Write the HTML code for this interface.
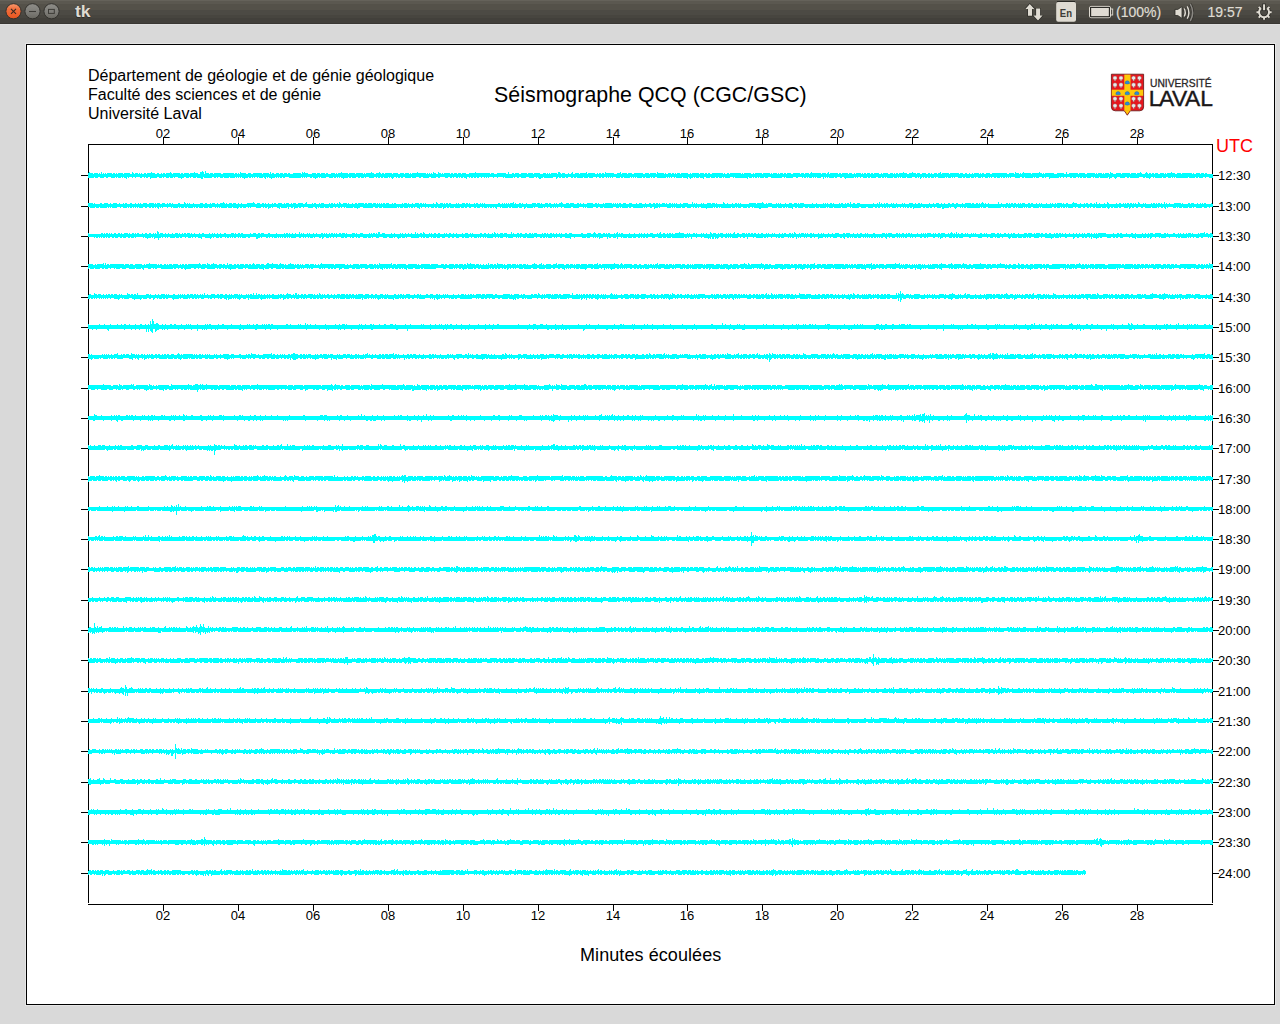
<!DOCTYPE html>
<html><head><meta charset="utf-8"><style>
html,body{margin:0;padding:0;width:1280px;height:1024px;overflow:hidden;background:#d9d9d9;font-family:"Liberation Sans",sans-serif;}
#panel{position:absolute;left:0;top:0;width:1280px;height:24px;background:linear-gradient(#65625a 0px,#65625a 1px,#5b5850 1px,#5b5850 4px,#545149 4px,#545149 10px,#4c4a44 10px,#4c4a44 15px,#47453f 15px,#47453f 18px,#42403b 18px,#42403b 23px,#393733 23px,#393733 24px);}
#hl{position:absolute;left:0;top:24px;width:1280px;height:1px;background:#dfdfdf;}
#canvas{position:absolute;left:26px;top:44px;width:1247px;height:959px;border:1px solid #000;background:#fff;}
.t{position:absolute;white-space:nowrap;color:#000;}
.xl{position:absolute;width:40px;text-align:center;font-size:13px;line-height:15px;color:#000;}
.yl{position:absolute;left:1218px;font-size:13px;line-height:15px;color:#000;}
svg{position:absolute;left:0;top:0;}
</style></head><body>
<div id="panel"></div><div id="hl"></div>
<svg width="1280" height="24" style="position:absolute;left:0;top:0">
<defs>
<linearGradient id="gc" x1="0" y1="0" x2="0" y2="1"><stop offset="0" stop-color="#f79a6e"/><stop offset="0.35" stop-color="#f0703f"/><stop offset="1" stop-color="#e9541d"/></linearGradient>
<linearGradient id="gg" x1="0" y1="0" x2="0" y2="1"><stop offset="0" stop-color="#8e8d88"/><stop offset="0.6" stop-color="#7c7b76"/><stop offset="1" stop-color="#68665f"/></linearGradient>
</defs>
<circle cx="13.5" cy="11.25" r="7.6" fill="url(#gc)" stroke="#2f2e2a" stroke-width="0.9"/>
<path d="M11 8.8L16 13.8M16 8.8L11 13.8" stroke="#3a2a22" stroke-width="1.1"/>
<circle cx="32.5" cy="11.25" r="7.6" fill="url(#gg)" stroke="#2f2e2a" stroke-width="0.9"/>
<path d="M29 11.5H36" stroke="#3c3b37" stroke-width="1.1"/>
<circle cx="51.5" cy="11.25" r="7.6" fill="url(#gg)" stroke="#2f2e2a" stroke-width="0.9"/>
<rect x="48.5" y="9.4" width="5.8" height="4" fill="none" stroke="#3c3b37" stroke-width="1"/>
<text x="74.6" y="17.8" font-family="Liberation Sans" font-weight="bold" font-size="16" fill="#1e1d1a" opacity="0.6" textLength="15.6" lengthAdjust="spacingAndGlyphs">tk</text><text x="75" y="17.2" font-family="Liberation Sans" font-weight="bold" font-size="16" fill="#dfdbd2" textLength="15.6" lengthAdjust="spacingAndGlyphs">tk</text>
<path d="M1029.8 3L1024.4 8.7H1027.3V16.4H1032.6V8.7H1035.5Z" fill="#262522" opacity="0.8"/>
<path d="M1038 21.3L1032.4 15.6H1035.4V8H1040.7V15.6H1043.6Z" fill="#262522" opacity="0.8"/>
<path d="M1029.8 4L1025.4 8.9H1028V15.8H1032V8.9H1034.4Z" fill="#dfdbd2"/>
<path d="M1038 20.4L1033.4 15.5H1036.1V8.5H1040.1V15.5H1042.6Z" fill="#dfdbd2"/>
<rect x="1056.2" y="2" width="19.8" height="19.8" rx="2" fill="#dfdbd2"/>
<path d="M1057 1.5H1075" stroke="#2a2925" stroke-width="1"/>
<text x="1059.8" y="16.6" font-family="Liberation Sans" font-weight="bold" font-size="11.8" fill="#3c3b37" textLength="12.2" lengthAdjust="spacingAndGlyphs">En</text>
<rect x="1089.5" y="6.4" width="21" height="11.3" rx="1.5" fill="none" stroke="#dfdbd2" stroke-width="1"/>
<rect x="1090.5" y="7.4" width="19" height="9.3" fill="none" stroke="#2a2925" stroke-width="1"/>
<rect x="1091.2" y="8" width="17.6" height="8.1" fill="#dfdbd2"/>
<rect x="1110.5" y="9" width="2.2" height="6" fill="none" stroke="#dfdbd2" stroke-width="0.9"/>
<text x="1116" y="17" font-family="Liberation Sans" font-size="14" fill="#dfdbd2" stroke="#dfdbd2" stroke-width="0.2">(100%)</text>
<path d="M1175 9.4H1177.8L1182 6.6V18.4L1177.8 15.5H1175Z" fill="#dfdbd2" stroke="#2a2925" stroke-width="0.8"/>
<path d="M1184.2 8.5Q1186.3 12.5 1184.2 16.5M1187.2 6.3Q1190.5 12.5 1187.2 18.7M1190.3 4Q1195 12.5 1190.3 21" fill="none" stroke="#262522" stroke-width="2.8" opacity="0.7"/>
<path d="M1184.2 8.5Q1186.3 12.5 1184.2 16.5" fill="none" stroke="#dfdbd2" stroke-width="1.5"/>
<path d="M1187.2 6.3Q1190.5 12.5 1187.2 18.7" fill="none" stroke="#dfdbd2" stroke-width="1.5"/>
<path d="M1190.3 4Q1195 12.5 1190.3 21" fill="none" stroke="#8a8883" stroke-width="1.5"/>
<text x="1207.5" y="17" font-family="Liberation Sans" font-size="14" fill="#dfdbd2" stroke="#dfdbd2" stroke-width="0.2">19:57</text>
<path d="M1267.14 8.26A5 5 0 1 1 1260.98 8.26" fill="none" stroke="#2a2925" stroke-width="3.6" opacity="0.85"/>
<path d="M1269.06 12.20L1271.66 12.20M1267.60 15.74L1269.43 17.57M1264.06 17.20L1264.06 19.80M1260.52 15.74L1258.69 17.57M1259.06 12.20L1256.46 12.20M1260.52 8.66L1258.69 6.83M1267.60 8.66L1269.43 6.83" fill="none" stroke="#2a2925" stroke-width="3.4" opacity="0.85"/>
<path d="M1264.06 3.5V10.9" stroke="#2a2925" stroke-width="3.6" opacity="0.85"/>
<path d="M1267.14 8.26A5 5 0 1 1 1260.98 8.26" fill="none" stroke="#dfdbd2" stroke-width="2"/>
<path d="M1269.06 12.20L1271.66 12.20M1267.60 15.74L1269.43 17.57M1264.06 17.20L1264.06 19.80M1260.52 15.74L1258.69 17.57M1259.06 12.20L1256.46 12.20M1260.52 8.66L1258.69 6.83M1267.60 8.66L1269.43 6.83" fill="none" stroke="#dfdbd2" stroke-width="1.9"/>
<path d="M1264.06 4.3V10.2" stroke="#dfdbd2" stroke-width="2"/>
</svg>

<div style="position:absolute;left:25px;top:43px;width:1249px;height:961px;border:1px solid #e6e6e6"></div><div id="canvas"></div>
<svg width="1280" height="1024" shape-rendering="crispEdges">
<path d="M88.5 144V903M1212.5 144V903M88 144.5H1213M88 904.5H1213M81 175.5H88M1213 175.5H1219M81 206.5H88M1213 206.5H1219M81 236.5H88M1213 236.5H1219M81 266.5H88M1213 266.5H1219M81 297.5H88M1213 297.5H1219M81 327.5H88M1213 327.5H1219M81 357.5H88M1213 357.5H1219M81 388.5H88M1213 388.5H1219M81 418.5H88M1213 418.5H1219M81 448.5H88M1213 448.5H1219M81 479.5H88M1213 479.5H1219M81 509.5H88M1213 509.5H1219M81 539.5H88M1213 539.5H1219M81 569.5H88M1213 569.5H1219M81 600.5H88M1213 600.5H1219M81 630.5H88M1213 630.5H1219M81 660.5H88M1213 660.5H1219M81 691.5H88M1213 691.5H1219M81 721.5H88M1213 721.5H1219M81 751.5H88M1213 751.5H1219M81 782.5H88M1213 782.5H1219M81 812.5H88M1213 812.5H1219M81 842.5H88M1213 842.5H1219M81 873.5H88M1213 873.5H1219M163.5 137V144M163.5 905V911M238.5 137V144M238.5 905V911M313.5 137V144M313.5 905V911M388.5 137V144M388.5 905V911M463.5 137V144M463.5 905V911M538.5 137V144M538.5 905V911M613.5 137V144M613.5 905V911M687.5 137V144M687.5 905V911M762.5 137V144M762.5 905V911M837.5 137V144M837.5 905V911M912.5 137V144M912.5 905V911M987.5 137V144M987.5 905V911M1062.5 137V144M1062.5 905V911M1137.5 137V144M1137.5 905V911" stroke="#000" stroke-width="1" fill="none"/>
<g fill="#00ffff"><path d="M88 173H89V172H90V173H93V174H94V173H98V174H99V173H100V174H101V172H102V174H103V173H104V174H105V173H106V174H107V173H112V174H113V173H115V174H116V173H117V174H118V173H123V174H124V173H130V174H132V172H133V173H134V174H135V173H138V174H139V173H140V174H141V173H142V174H144V173H146V174H147V173H151V172H152V173H155V174H157V173H159V174H161V173H162V174H163V173H165V174H166V173H170V172H171V173H172V174H173V173H180V174H181V173H183V174H184V173H189V174H190V173H194V172H195V173H198V174H200V172H202V171H203V172H204V174H205V171H206V173H209V174H210V173H213V174H214V173H221V174H223V173H234V174H235V173H237V174H238V173H239V174H240V172H241V173H246V174H248V173H251V174H253V173H262V174H263V173H269V174H270V172H271V174H272V173H274V174H276V173H279V174H280V173H283V174H284V173H287V174H288V173H290V174H293V173H301V174H302V172H303V173H304V172H305V173H308V174H312V173H316V174H317V173H320V174H321V173H325V174H326V173H328V174H331V173H335V174H336V173H337V174H338V173H341V172H342V173H348V174H349V173H355V174H356V173H363V174H364V173H365V174H366V173H371V172H372V173H374V174H376V173H379V172H380V173H381V174H382V173H384V174H385V173H392V174H393V173H398V174H400V173H404V174H405V173H409V174H410V173H411V174H412V173H417V172H418V173H426V174H427V173H428V174H429V173H430V174H431V173H432V174H433V172H434V173H436V174H438V172H439V173H441V174H442V173H443V174H444V173H450V174H451V173H453V174H454V173H457V174H458V173H461V174H462V173H466V174H469V173H475V172H476V173H490V174H491V173H494V174H497V173H506V174H508V172H509V174H512V173H514V174H515V173H519V174H521V173H527V174H528V173H533V174H534V173H540V174H543V173H546V174H547V173H548V174H549V173H550V174H551V173H557V174H558V172H560V173H561V174H562V173H565V174H568V173H569V174H571V173H572V172H573V174H575V173H579V174H580V173H586V172H587V174H588V173H595V174H597V173H598V174H599V173H601V174H602V173H604V174H605V172H606V173H614V174H617V173H620V172H621V174H622V173H627V174H628V173H632V174H634V173H643V174H645V173H649V174H650V173H656V174H657V172H658V173H664V174H665V173H666V174H668V173H671V174H672V173H674V174H675V173H676V174H677V173H680V174H681V173H688V174H690V173H691V174H692V173H699V174H700V173H704V174H705V173H707V174H708V173H710V174H712V173H723V174H724V173H725V174H727V173H729V174H730V173H741V174H742V173H743V174H744V173H751V174H753V173H754V174H755V173H762V174H763V173H770V174H771V173H772V174H773V173H777V174H778V173H779V174H780V173H783V174H784V173H786V174H787V173H791V174H793V173H800V174H801V173H804V174H805V173H809V174H810V173H811V172H812V173H821V174H822V173H826V174H827V173H828V172H829V174H830V173H838V174H839V173H841V174H842V173H848V174H849V173H852V174H854V173H855V174H856V173H861V174H862V173H863V174H864V173H866V174H867V173H870V174H871V173H873V174H874V173H879V174H881V173H882V174H883V173H888V174H890V173H893V174H894V173H895V174H896V173H898V174H899V173H903V172H904V173H907V174H909V173H912V172H913V173H916V174H917V173H920V174H922V173H926V174H928V173H930V174H931V173H932V174H934V173H937V174H938V173H940V172H941V174H942V173H949V174H950V173H959V174H960V173H963V174H965V173H967V174H969V173H970V174H972V173H973V174H974V173H979V174H980V173H981V174H982V173H984V174H986V173H990V174H992V173H1007V174H1009V173H1014V174H1015V172H1016V173H1019V174H1020V173H1021V174H1022V173H1023V172H1024V173H1031V174H1032V173H1039V172H1040V173H1042V174H1043V173H1044V174H1045V173H1054V174H1057V173H1064V174H1066V172H1067V174H1069V173H1078V174H1079V173H1085V174H1087V173H1095V174H1096V173H1097V174H1098V173H1102V174H1103V173H1104V174H1105V173H1109V174H1110V172H1111V173H1113V174H1116V173H1121V174H1122V173H1130V174H1131V173H1136V174H1137V173H1140V172H1141V173H1142V174H1145V173H1146V172H1147V173H1148V174H1149V173H1151V174H1152V173H1154V174H1155V173H1158V174H1160V173H1164V174H1165V173H1166V174H1167V173H1171V172H1172V173H1175V174H1177V173H1181V174H1182V173H1192V174H1193V173H1194V174H1196V173H1200V174H1201V173H1204V174H1205V173H1207V174H1213V178H1209V177H1206V178H1205V177H1203V178H1199V177H1198V178H1196V177H1195V178H1189V177H1188V178H1176V177H1175V178H1174V177H1173V178H1172V177H1171V178H1168V177H1166V178H1163V177H1162V178H1155V177H1154V178H1153V177H1151V178H1150V179H1149V178H1146V177H1145V178H1143V177H1139V178H1130V177H1129V178H1127V177H1125V178H1120V177H1117V178H1116V179H1115V178H1114V177H1112V178H1110V179H1109V177H1108V178H1100V177H1099V178H1095V177H1094V178H1093V177H1091V178H1087V177H1086V178H1083V177H1082V178H1080V177H1079V178H1078V177H1076V178H1073V177H1072V178H1070V177H1067V178H1066V177H1064V178H1063V177H1061V178H1060V177H1059V178H1050V179H1049V177H1046V178H1045V177H1044V178H1042V177H1039V178H1036V177H1035V178H1034V177H1033V178H1025V177H1024V178H1022V177H1020V178H1015V177H1011V178H1010V177H1009V178H1008V177H1007V178H1006V177H1005V178H1003V177H1002V178H1001V177H1000V178H997V177H996V178H994V177H992V178H991V177H990V178H989V177H988V178H985V177H983V178H982V177H981V178H978V177H976V178H975V177H974V178H971V177H970V178H966V177H965V178H963V177H962V178H958V177H955V178H954V177H953V178H952V177H951V178H948V177H947V178H946V177H945V178H938V177H936V178H935V177H934V178H931V177H930V178H928V177H927V178H925V177H924V178H923V177H922V178H921V179H920V177H919V178H918V177H917V178H915V177H912V178H907V177H906V178H902V177H901V178H900V177H899V178H898V177H897V178H894V177H893V178H887V177H886V178H885V177H884V178H882V177H881V178H878V177H876V178H871V177H870V178H868V177H867V178H863V177H861V178H860V177H858V178H857V177H856V178H855V177H854V178H846V179H845V178H844V177H842V178H840V177H837V178H835V177H834V178H829V177H828V178H827V177H826V178H825V177H824V179H823V177H821V178H817V177H816V178H815V177H814V178H813V177H812V178H809V177H808V178H807V177H806V178H804V177H803V178H802V177H798V178H796V177H793V178H786V177H785V178H784V177H782V178H771V177H768V178H765V177H764V178H760V177H759V178H758V177H757V178H755V177H754V178H753V177H752V178H749V177H748V179H747V178H735V177H734V178H733V177H730V178H725V177H724V178H723V177H722V178H719V177H718V178H716V177H715V178H711V177H710V178H706V177H704V179H703V178H700V177H699V178H696V177H695V178H694V177H693V178H691V179H690V178H689V177H688V179H687V178H683V177H682V178H676V177H675V178H674V177H672V178H671V177H670V178H669V177H668V178H667V177H666V178H657V177H655V178H653V177H652V178H651V177H650V178H646V177H645V178H643V177H642V178H637V177H636V178H635V177H634V178H633V177H632V178H631V177H630V178H624V177H623V178H621V177H620V178H616V177H613V178H612V177H611V178H610V177H609V178H608V177H607V178H606V177H604V178H602V177H601V178H599V177H597V178H596V177H593V178H589V177H588V178H584V177H583V178H577V177H576V178H574V177H573V178H571V177H568V178H566V177H565V178H562V177H561V178H559V177H558V178H557V179H556V177H553V178H544V177H543V178H541V179H539V178H538V177H537V178H536V177H534V178H529V177H526V178H521V177H519V178H517V177H515V178H514V177H513V178H505V177H504V178H503V177H498V178H497V177H494V178H493V177H489V178H488V177H487V178H486V177H485V178H484V177H482V178H481V177H479V178H477V177H476V178H474V177H473V178H471V177H470V178H469V177H467V179H466V178H464V177H463V178H461V177H460V178H459V177H458V178H456V177H454V178H453V177H452V178H450V177H448V178H445V177H440V178H438V177H436V178H431V177H429V178H423V177H421V178H419V177H416V178H412V177H411V178H405V177H403V178H401V177H400V178H398V177H397V178H396V177H394V178H393V179H392V178H391V177H390V178H389V177H388V178H384V177H383V178H381V177H380V178H378V177H377V178H376V177H374V178H369V177H366V178H365V177H364V178H361V177H360V178H358V177H356V178H352V177H351V178H349V177H348V178H344V179H343V178H341V177H340V178H339V177H338V178H337V177H336V178H334V177H333V178H329V177H326V178H321V177H320V178H319V177H318V178H316V179H315V178H313V177H312V178H310V177H307V178H306V177H305V178H304V177H303V178H302V177H301V178H289V177H285V178H283V177H282V178H280V177H279V178H278V177H277V178H276V177H275V178H272V179H271V178H269V177H268V178H267V177H266V179H265V178H264V177H263V178H259V177H258V178H257V177H255V178H254V177H253V178H252V177H251V178H249V177H248V178H245V179H244V178H242V177H241V178H240V177H239V178H238V177H237V178H236V177H235V178H230V177H229V178H224V177H223V178H220V177H218V178H217V177H216V178H214V177H212V178H204V177H203V179H201V178H197V177H196V178H193V177H191V178H190V177H189V178H186V177H184V178H182V179H181V178H178V177H175V178H174V177H173V178H170V177H169V178H166V177H164V178H163V177H162V178H159V177H157V178H151V179H150V177H148V178H146V177H145V178H144V177H142V178H140V177H136V178H135V177H133V178H132V177H129V178H128V177H127V179H126V178H124V177H123V178H122V177H121V178H118V177H117V178H116V177H115V178H111V177H108V178H106V177H104V178H100V177H98V178H95V177H94V178H88Z"/><path d="M88 203H93V204H94V203H95V204H100V203H102V204H104V203H108V204H110V203H111V204H113V203H117V204H119V203H120V204H123V203H124V204H125V203H127V204H130V203H132V204H135V203H136V204H138V203H139V204H140V203H141V204H143V203H147V204H149V203H154V204H155V203H156V204H157V203H160V204H162V203H165V204H167V203H168V204H169V203H171V204H172V203H173V204H178V203H180V204H184V202H185V203H186V204H187V203H188V204H189V203H190V204H193V203H194V204H200V203H203V204H205V203H207V204H210V203H211V204H212V203H215V204H217V203H218V204H220V203H223V202H224V203H225V204H226V203H227V204H229V203H232V204H233V203H236V204H238V203H239V204H241V203H242V204H247V203H253V202H254V203H255V204H257V203H260V204H262V203H264V204H265V203H266V204H268V203H269V204H272V203H273V204H274V203H276V204H278V203H282V204H284V203H285V204H286V203H289V204H291V203H292V204H293V203H296V204H298V203H303V204H305V203H306V202H307V204H312V203H313V204H314V203H316V204H319V203H320V204H321V203H324V204H329V203H330V204H331V203H333V204H334V203H335V204H337V203H338V204H339V202H340V203H341V204H343V203H347V204H348V203H349V204H352V203H353V204H355V203H357V204H358V203H364V204H365V203H367V204H368V203H372V204H373V203H376V204H377V203H378V204H379V203H380V204H381V203H382V204H383V203H385V204H386V203H389V204H392V203H393V204H394V203H396V204H402V203H403V204H404V203H407V204H408V203H409V204H412V203H413V204H415V203H419V204H420V203H422V204H423V203H424V204H425V203H426V204H433V203H434V204H436V202H437V203H438V204H440V203H443V204H444V203H445V204H446V203H448V204H449V203H451V204H456V203H457V204H458V203H459V204H462V203H465V204H466V203H468V204H469V203H470V204H474V203H475V204H476V203H478V204H480V203H481V204H482V203H483V204H484V203H485V204H498V203H500V204H502V203H503V204H504V203H505V204H506V203H507V204H508V203H509V204H510V203H513V202H514V204H515V203H516V204H519V203H521V204H522V203H523V204H526V203H527V204H532V203H536V204H537V203H540V204H541V203H542V204H545V203H548V204H549V203H551V204H554V203H555V204H556V203H557V204H559V203H561V202H562V203H563V204H566V203H569V204H570V203H574V204H577V203H579V204H580V203H581V204H583V203H584V204H587V203H593V204H595V203H597V204H598V203H599V204H603V203H604V204H605V203H612V204H613V203H614V204H615V203H616V204H617V203H618V204H619V203H621V204H623V203H626V204H629V203H632V204H636V203H637V204H639V203H642V204H645V203H646V204H649V203H651V204H653V203H655V204H656V203H658V204H659V203H660V204H662V203H665V204H666V203H667V204H669V203H671V204H672V203H673V204H674V203H675V204H676V203H677V204H680V203H681V204H683V203H688V204H692V202H693V204H694V203H695V204H696V203H697V204H701V203H702V204H703V203H704V204H707V203H711V204H712V203H715V204H716V203H717V204H723V202H724V203H725V204H727V203H728V204H732V203H733V204H735V203H737V204H738V203H739V204H740V203H741V204H749V203H756V204H757V203H762V202H763V203H764V204H766V203H767V204H768V203H772V204H776V203H777V204H778V203H779V204H780V203H781V204H785V203H786V204H789V203H792V204H794V203H797V204H798V203H799V204H800V203H804V204H812V203H813V204H816V203H817V204H823V203H824V204H825V203H826V204H827V203H828V204H830V203H832V204H833V203H834V204H839V203H840V204H841V203H843V204H845V203H846V204H847V203H849V204H850V202H851V204H853V203H855V204H857V203H860V204H873V203H874V204H877V203H878V204H879V202H880V204H881V203H882V204H884V203H885V204H886V203H888V204H891V203H892V204H893V203H894V204H896V203H897V204H902V203H903V204H904V203H905V204H909V203H913V204H915V203H916V204H918V203H920V204H921V203H922V204H929V203H930V204H933V203H934V204H936V203H939V204H941V203H942V204H944V203H945V204H948V203H950V204H952V203H954V204H956V203H958V204H962V203H963V204H965V203H971V204H972V203H974V204H976V203H978V204H979V203H980V204H981V203H982V202H983V203H984V204H985V203H986V204H988V203H989V204H998V202H999V204H1001V203H1002V204H1006V203H1008V204H1009V203H1010V204H1011V203H1013V204H1014V203H1016V204H1018V203H1019V204H1020V203H1021V204H1022V203H1025V204H1028V203H1030V204H1031V203H1033V204H1036V203H1037V204H1039V203H1040V204H1041V203H1042V204H1046V203H1047V204H1050V203H1051V204H1052V203H1053V204H1055V203H1056V204H1057V203H1062V204H1063V203H1064V204H1066V203H1068V204H1072V203H1073V202H1074V203H1077V204H1080V203H1081V204H1084V203H1085V204H1086V203H1088V204H1090V203H1092V204H1094V203H1095V204H1096V202H1097V204H1099V203H1100V204H1104V203H1105V204H1107V202H1108V203H1109V204H1116V203H1117V204H1119V203H1121V204H1123V203H1124V204H1125V203H1126V204H1127V203H1129V204H1130V203H1132V204H1133V203H1134V204H1135V203H1136V204H1138V202H1139V203H1140V204H1143V203H1144V204H1145V203H1146V204H1151V203H1152V204H1153V203H1155V204H1156V203H1157V204H1158V203H1160V204H1161V203H1162V204H1164V202H1165V204H1166V203H1167V204H1169V203H1170V204H1174V203H1181V204H1182V203H1183V204H1188V203H1190V204H1191V203H1194V204H1197V203H1198V204H1200V203H1201V204H1202V203H1203V204H1204V203H1206V204H1211V203H1212V204H1213V207H1210V208H1209V207H1207V208H1204V207H1202V208H1196V207H1194V208H1193V207H1192V208H1189V207H1188V208H1183V207H1182V208H1179V207H1178V208H1177V207H1176V208H1173V207H1168V208H1167V207H1166V209H1165V208H1164V207H1163V208H1161V207H1159V208H1158V207H1157V208H1152V207H1151V208H1145V207H1143V208H1141V207H1138V208H1136V207H1134V208H1132V207H1131V208H1130V209H1129V207H1128V208H1124V207H1121V208H1119V207H1118V208H1114V207H1113V208H1111V207H1110V208H1109V209H1108V208H1107V207H1106V208H1102V207H1101V208H1096V207H1095V208H1093V207H1091V208H1090V207H1089V208H1087V207H1085V208H1083V207H1081V208H1078V207H1076V208H1075V207H1073V208H1068V207H1067V208H1066V207H1065V208H1063V207H1062V208H1061V207H1060V208H1057V207H1056V208H1054V207H1052V208H1042V207H1041V208H1040V207H1039V208H1033V207H1031V208H1028V207H1027V208H1026V207H1025V208H1024V207H1023V208H1018V207H1017V208H1016V207H1015V208H1013V207H1011V208H1008V207H1007V208H1005V207H1004V208H1003V207H1001V208H988V207H986V208H983V207H982V208H981V207H980V208H967V207H966V208H964V207H963V208H962V207H961V208H960V207H957V208H956V209H955V208H954V207H951V208H950V207H949V208H944V209H942V207H941V208H937V207H935V208H934V207H932V208H930V207H929V208H926V207H925V208H923V207H921V208H914V209H913V207H912V208H910V207H909V208H907V207H906V208H905V207H904V208H903V207H901V208H900V207H898V208H897V207H896V208H892V207H890V208H889V207H888V208H887V207H886V208H884V207H883V208H882V207H880V208H878V207H877V208H875V207H873V208H868V207H866V208H861V207H859V208H852V207H851V208H850V207H847V208H842V207H841V208H834V207H833V208H829V207H828V208H827V207H826V208H820V207H819V208H816V207H815V208H809V207H808V208H805V207H803V208H798V207H797V208H795V207H793V209H792V208H788V207H787V208H786V207H785V208H783V207H782V208H778V207H777V208H772V207H768V208H761V209H759V208H754V207H753V208H752V207H750V208H748V207H747V208H743V207H741V208H738V207H737V208H736V207H735V208H732V207H731V208H721V207H720V208H719V207H718V208H716V207H715V208H714V207H713V208H707V209H706V208H701V207H699V208H698V207H697V208H695V207H694V208H693V207H691V208H687V207H685V208H682V207H681V208H676V207H675V208H674V207H673V208H672V207H671V208H667V207H660V208H659V207H658V208H655V209H654V207H652V208H650V207H647V208H646V207H645V208H644V207H643V208H633V207H631V208H629V207H628V208H622V207H621V208H620V207H619V208H616V207H613V208H604V207H603V208H600V207H598V208H596V207H593V208H587V207H586V208H585V207H584V208H583V207H579V208H573V207H571V208H564V207H562V208H561V207H558V208H557V207H556V208H555V207H554V208H553V207H552V208H550V207H548V208H547V207H545V208H544V207H543V208H538V207H535V208H534V207H533V208H527V207H526V208H525V209H524V207H522V208H519V207H518V208H512V207H511V208H509V207H508V208H502V207H501V208H500V207H497V209H496V208H495V207H494V208H493V207H492V208H490V207H489V208H488V207H487V208H484V207H483V208H482V207H480V208H477V207H476V208H474V207H471V208H469V207H467V208H465V207H464V208H461V207H460V208H455V207H454V208H450V207H449V208H447V207H446V208H444V209H443V207H442V208H438V207H437V208H435V207H434V208H431V207H429V208H428V207H426V208H425V207H422V208H421V207H420V209H419V208H417V207H415V208H414V207H413V208H411V207H410V208H409V207H408V208H404V207H403V208H400V207H399V208H398V207H397V208H383V207H382V208H379V207H378V208H375V207H373V208H363V207H360V208H358V209H357V208H354V207H353V208H346V207H345V208H344V207H342V208H341V207H340V208H338V207H336V208H335V207H333V208H330V207H329V208H325V207H324V208H320V207H319V208H318V207H317V209H316V208H315V207H313V208H308V207H304V208H303V207H301V208H299V207H298V208H295V209H294V207H293V208H291V207H289V209H288V207H287V208H281V207H280V209H279V208H277V207H273V208H272V207H271V208H269V209H268V207H267V208H265V207H264V208H263V207H261V208H256V207H251V208H250V207H249V208H248V207H246V208H243V207H242V208H240V207H239V208H238V209H237V208H233V207H232V208H228V207H227V208H221V207H220V208H219V207H218V208H217V207H216V208H215V207H212V208H209V207H208V208H204V207H203V208H199V207H198V208H196V207H195V208H194V207H193V208H188V207H187V208H185V207H184V208H181V207H180V208H179V207H178V208H173V207H172V208H171V207H168V208H167V207H163V208H162V207H161V208H160V207H159V209H158V208H157V207H156V208H155V207H154V208H152V207H151V208H149V207H147V208H145V207H143V208H139V207H138V208H137V207H136V208H135V207H134V208H133V207H132V208H130V207H129V208H128V207H127V208H123V207H121V208H120V207H117V208H112V207H111V208H110V207H109V208H108V207H107V208H100V207H99V208H96V207H95V208H90V207H88Z"/><path d="M88 233H89V234H101V233H103V234H104V233H105V234H106V233H108V234H109V233H110V234H111V233H112V234H114V233H116V234H118V233H120V234H121V233H122V234H124V233H128V234H129V233H130V234H132V233H134V234H135V233H136V234H137V233H139V234H142V233H143V234H145V233H147V234H149V233H151V234H153V233H154V234H155V233H156V234H157V231H158V232H159V234H160V233H163V234H165V233H166V234H168V233H169V234H172V233H173V234H175V233H178V234H179V233H180V234H182V233H183V234H184V233H186V234H187V233H190V234H191V233H192V234H194V233H195V234H199V233H200V234H202V233H204V234H209V233H210V234H212V233H213V234H214V233H215V234H217V233H218V234H220V233H221V234H224V233H226V234H231V233H234V234H235V233H236V234H238V233H240V234H241V233H243V234H250V233H251V234H253V233H256V234H258V233H260V234H261V233H264V234H268V233H270V234H276V233H277V234H284V233H285V234H286V233H288V234H289V233H290V234H292V233H293V234H295V233H296V234H299V232H300V234H301V233H302V234H303V233H304V234H307V233H308V234H309V233H310V234H313V233H314V234H316V233H317V234H321V233H323V234H324V233H325V234H326V233H327V234H329V233H330V234H331V233H333V234H334V233H335V234H336V233H337V234H339V233H341V234H342V233H345V234H346V233H347V234H352V233H355V234H356V233H357V234H360V233H363V234H369V233H370V234H371V233H372V234H373V233H375V234H376V233H377V234H378V232H380V234H382V233H385V234H391V233H392V234H394V233H395V234H400V233H401V234H402V233H403V234H405V233H406V234H408V233H409V234H411V233H412V234H415V232H416V234H417V233H418V234H420V233H422V234H423V232H424V233H425V234H429V233H430V234H431V233H432V234H434V233H436V234H438V233H440V234H444V233H445V234H446V233H447V234H449V233H451V234H453V233H454V234H456V233H457V234H462V233H463V234H465V233H468V234H470V233H471V234H472V233H473V234H480V233H482V234H484V233H486V234H488V233H489V234H492V233H493V234H494V232H495V233H496V234H497V233H498V234H500V233H503V234H504V233H507V234H511V232H512V234H513V233H514V234H517V233H519V234H520V233H522V234H525V233H527V234H529V233H531V234H532V233H533V234H534V233H537V234H542V233H543V234H544V233H546V234H547V233H548V234H550V233H552V234H553V233H554V234H556V233H557V234H559V233H560V234H561V233H562V234H565V233H567V234H569V233H572V234H581V233H583V234H587V233H591V234H593V233H594V232H595V233H596V234H598V233H601V234H603V233H605V234H606V233H607V234H608V233H610V234H614V233H615V234H616V233H617V232H618V234H619V233H620V234H621V233H623V234H629V233H630V234H634V233H635V234H639V233H640V234H641V233H642V234H644V233H645V234H647V233H648V234H650V233H653V234H657V233H658V234H659V233H660V232H661V234H663V233H665V234H667V233H668V234H669V233H671V234H672V233H673V234H675V233H679V232H680V233H684V234H687V233H688V234H689V233H690V234H693V233H695V234H696V233H697V234H701V233H702V234H703V233H704V234H706V233H707V234H710V232H711V233H712V234H713V233H716V234H718V233H719V234H720V233H723V234H726V233H727V234H728V233H729V234H730V233H731V234H733V233H734V232H735V234H737V233H739V234H742V233H745V234H746V233H747V234H748V233H750V234H751V233H753V234H754V233H756V234H758V233H759V234H761V233H763V234H766V233H767V234H768V233H769V234H772V233H773V234H774V233H775V234H779V233H780V234H782V233H783V234H784V233H786V234H789V233H791V234H792V233H793V234H794V232H795V233H796V234H799V233H800V234H801V233H804V234H805V233H806V234H807V233H808V234H810V233H812V234H813V233H814V234H818V233H819V234H821V233H822V234H823V233H824V234H828V233H829V234H832V233H833V234H835V233H839V234H843V233H845V234H846V233H850V234H853V233H854V234H857V233H858V234H860V233H862V234H865V233H866V234H867V233H868V234H873V233H875V234H882V233H885V234H886V233H887V234H888V233H892V234H896V233H898V234H899V233H900V234H902V233H904V234H906V233H907V234H908V233H910V234H911V233H912V234H917V233H918V234H921V233H922V234H923V233H924V234H925V233H926V234H927V233H931V234H933V233H934V234H935V233H936V234H938V233H940V234H941V233H945V234H948V233H949V234H950V233H951V232H952V233H953V234H954V233H955V234H956V232H957V234H958V233H959V234H961V233H963V234H965V233H966V234H967V233H968V234H971V233H972V234H973V233H974V234H975V233H976V234H980V233H982V234H984V233H985V234H986V233H987V234H991V233H995V234H997V233H999V234H1000V233H1001V234H1004V233H1006V234H1008V233H1009V234H1011V233H1012V234H1013V233H1015V234H1018V233H1019V234H1024V233H1027V234H1028V233H1032V234H1034V233H1035V234H1036V233H1040V234H1041V233H1043V234H1045V233H1047V234H1049V233H1051V234H1054V233H1055V234H1056V233H1058V234H1059V233H1061V234H1062V233H1063V234H1065V233H1066V234H1069V233H1070V234H1073V233H1074V234H1076V233H1077V234H1079V233H1080V234H1082V233H1083V234H1084V233H1085V234H1087V233H1090V234H1091V233H1092V234H1094V233H1095V234H1096V233H1097V234H1098V233H1106V234H1113V233H1114V234H1117V233H1119V234H1120V233H1122V234H1126V233H1127V234H1131V233H1133V234H1135V233H1136V234H1142V233H1143V234H1145V233H1146V234H1148V233H1149V234H1150V233H1153V234H1155V233H1161V234H1164V233H1166V234H1167V233H1168V234H1173V233H1175V234H1178V233H1179V234H1180V233H1181V234H1183V233H1184V234H1186V233H1187V234H1188V233H1191V234H1192V233H1193V234H1198V233H1199V234H1200V233H1204V232H1205V234H1206V233H1208V234H1210V233H1212V234H1213V238H1212V237H1211V238H1210V237H1209V238H1208V237H1203V238H1201V237H1199V238H1196V237H1194V238H1193V237H1191V238H1190V237H1189V238H1188V237H1187V238H1181V237H1180V238H1178V237H1177V238H1176V237H1170V238H1169V237H1166V238H1161V237H1160V238H1159V237H1156V238H1155V237H1152V238H1151V239H1150V237H1149V238H1147V237H1146V238H1143V237H1142V238H1137V237H1136V239H1135V238H1132V237H1130V238H1129V237H1123V238H1120V237H1118V238H1116V237H1115V238H1113V237H1111V238H1107V237H1102V238H1100V237H1099V238H1097V239H1096V238H1093V237H1092V239H1091V237H1090V238H1089V237H1087V238H1085V237H1084V238H1082V237H1079V238H1077V237H1075V238H1074V239H1073V237H1067V238H1065V237H1061V238H1060V237H1059V238H1055V237H1054V238H1052V239H1051V238H1045V237H1042V238H1041V237H1039V238H1034V237H1031V238H1029V237H1028V238H1027V237H1026V238H1023V237H1022V238H1018V237H1017V238H1012V237H1011V238H1010V239H1009V238H1008V237H1003V238H1002V237H1000V238H997V237H996V238H995V237H993V238H990V237H988V238H987V237H982V238H978V237H971V238H969V237H963V238H959V237H958V238H956V237H955V238H953V237H952V238H949V237H946V238H945V237H943V238H941V239H940V237H939V238H938V237H935V238H933V237H928V238H927V237H926V238H924V237H922V238H920V237H916V238H915V237H913V238H912V237H911V238H910V237H907V238H905V237H904V238H903V237H902V238H901V237H900V238H899V237H898V238H897V237H895V238H892V237H890V238H889V237H887V239H886V238H885V237H883V238H881V237H880V238H879V237H878V238H877V237H876V238H874V237H873V238H871V237H870V238H869V237H868V238H867V237H866V238H865V237H864V238H863V237H861V238H858V237H857V238H854V237H853V238H852V237H851V238H850V237H849V238H847V237H845V239H844V238H843V237H842V238H840V237H837V238H833V237H831V238H830V237H828V238H827V237H826V238H825V237H823V238H819V239H818V237H815V238H814V237H812V238H810V237H807V238H806V237H805V238H804V237H801V238H800V237H799V238H798V237H797V239H796V237H794V238H792V237H791V238H790V237H789V238H788V237H784V238H781V237H780V238H778V237H777V238H776V237H772V238H771V237H768V238H767V237H766V238H764V237H763V238H756V237H754V238H753V237H748V239H747V237H745V238H743V237H741V238H740V237H738V238H732V237H731V238H730V237H729V238H728V237H727V238H725V237H723V238H721V237H719V238H718V239H717V238H716V239H715V237H714V239H712V237H711V239H710V238H709V239H708V238H704V237H702V238H701V237H697V238H696V237H692V239H691V237H689V238H688V237H687V238H685V237H684V238H672V237H671V238H667V237H666V238H663V237H662V238H658V237H655V238H652V237H648V238H646V237H645V238H643V237H642V238H641V237H640V238H638V237H636V238H633V237H632V238H628V237H627V238H623V237H622V238H621V237H618V239H617V237H616V238H613V237H611V238H609V237H608V239H607V237H603V238H600V239H599V237H598V238H597V237H596V238H595V237H594V238H593V237H590V238H587V237H586V238H582V237H575V238H574V237H571V239H570V238H565V237H562V238H560V237H557V238H556V237H555V238H554V237H552V238H548V237H547V238H546V237H545V238H543V237H542V238H540V237H537V238H536V237H534V238H527V237H526V238H523V237H521V238H520V237H519V238H518V237H517V238H516V237H513V238H508V237H507V238H506V237H503V238H500V237H499V238H498V237H496V238H495V237H493V238H487V237H486V238H485V237H484V238H483V237H481V238H480V237H479V238H478V237H477V238H474V237H472V238H471V237H469V238H465V237H464V238H462V237H459V238H456V237H454V238H452V237H450V238H448V237H445V238H442V237H440V238H437V237H436V238H433V237H432V238H431V237H429V238H426V237H425V238H423V237H422V238H421V237H419V238H411V237H407V238H406V237H405V238H402V237H401V238H399V239H398V238H397V237H395V238H394V237H393V238H389V237H387V238H383V237H379V238H376V237H373V238H372V237H371V238H368V237H367V238H363V237H360V238H358V237H357V238H356V237H354V238H352V237H351V238H350V237H347V238H345V237H344V238H341V237H337V238H336V237H334V238H333V237H331V238H330V237H329V238H326V237H324V238H323V239H322V237H321V238H319V237H315V238H314V237H313V238H310V237H309V238H308V237H306V238H305V237H304V238H303V237H301V238H299V237H296V238H291V237H290V238H289V237H288V238H287V237H286V238H284V237H283V238H282V237H281V238H280V237H279V238H278V237H277V238H274V237H273V238H272V237H270V238H269V237H268V238H266V237H262V238H261V237H260V238H258V239H256V237H250V238H248V237H246V238H242V237H241V238H240V237H239V238H238V237H236V238H234V237H233V238H232V237H231V238H230V237H229V238H227V237H226V238H225V237H222V238H220V237H219V238H216V237H214V238H213V237H212V238H211V239H210V238H205V237H202V239H201V238H198V237H196V238H195V237H193V238H192V237H191V238H188V237H186V238H185V237H182V238H180V237H179V238H176V237H175V238H170V237H168V238H167V237H166V238H165V237H163V238H162V237H161V238H159V240H158V238H155V239H154V237H153V238H152V237H151V238H148V239H147V238H145V237H144V238H143V237H136V238H135V237H134V238H131V237H130V238H128V237H126V238H123V237H122V238H120V237H118V238H115V237H114V238H112V237H110V238H108V237H107V238H106V237H105V238H103V237H102V238H101V237H100V238H99V237H98V238H96V237H95V238H94V237H88Z"/><path d="M88 264H93V265H95V264H96V265H97V264H103V263H104V265H105V263H106V265H107V264H109V265H110V264H124V265H125V264H129V265H130V264H133V265H135V264H142V265H144V264H145V265H146V264H149V263H150V264H157V265H158V264H159V265H160V264H162V265H164V264H166V265H167V264H168V265H169V264H172V265H173V264H178V265H180V264H181V265H182V264H184V265H185V264H187V265H188V264H199V263H200V264H201V265H202V264H206V265H207V263H208V264H210V265H211V264H213V263H214V264H217V265H219V264H222V265H223V264H225V265H227V263H228V265H229V264H232V265H234V264H236V265H237V264H239V265H240V264H244V265H245V264H248V265H249V264H251V265H252V264H253V263H254V264H255V265H256V264H260V265H261V264H264V265H266V264H267V263H269V264H272V263H273V264H278V265H279V264H280V263H281V264H284V265H285V264H286V265H288V264H290V263H291V264H294V265H295V264H296V265H297V264H299V265H300V264H301V265H302V264H303V265H305V264H309V265H310V264H314V265H315V264H316V265H318V264H319V265H320V264H321V263H322V264H334V265H335V264H345V265H347V264H348V265H350V264H351V265H353V264H359V265H360V264H367V265H369V264H373V265H374V264H376V265H377V264H378V265H379V263H380V264H391V263H392V265H393V264H396V265H397V264H406V265H408V264H417V265H418V264H419V265H421V264H430V265H431V264H438V265H441V264H444V265H445V264H447V265H449V264H454V265H455V264H458V265H459V264H463V265H464V264H466V265H467V263H468V264H470V263H471V264H475V265H476V264H479V265H480V264H481V265H483V264H484V265H486V264H487V265H488V263H489V265H490V264H493V265H494V264H496V265H497V263H498V264H503V265H504V264H505V265H507V264H511V265H512V264H516V265H517V264H518V265H519V264H522V265H523V264H526V265H527V264H528V265H532V264H534V263H535V264H537V265H539V264H541V263H542V265H543V264H544V265H546V264H551V265H553V264H556V263H557V265H558V264H564V265H566V264H569V265H570V264H573V265H574V264H575V265H576V264H580V265H581V264H587V265H588V264H593V265H594V264H597V263H598V265H599V264H601V265H602V264H614V263H615V264H619V265H620V264H621V263H622V264H623V265H624V264H632V265H634V264H637V265H639V264H641V265H644V264H647V265H648V264H649V265H650V264H652V265H653V264H654V265H655V264H657V263H658V265H659V264H665V265H666V264H668V265H669V264H672V265H673V264H674V265H675V264H681V265H682V264H685V265H687V264H689V265H690V264H691V265H692V264H693V265H694V264H703V265H704V264H705V265H706V264H714V265H716V264H720V265H721V264H722V265H723V264H728V265H730V264H732V265H733V264H738V265H740V264H744V263H745V264H747V265H748V263H749V264H750V265H751V264H761V263H762V264H764V265H765V264H768V265H769V264H771V265H775V264H783V265H784V264H790V265H791V264H793V265H794V264H797V265H798V264H802V265H803V264H806V265H807V264H809V265H810V264H814V263H815V265H817V264H821V265H822V264H826V265H827V264H833V265H834V264H844V265H845V264H848V265H849V264H850V265H851V264H853V265H854V264H856V265H857V264H863V265H864V264H865V265H866V264H871V263H872V265H873V264H875V265H876V264H878V265H879V264H884V265H886V264H895V263H896V264H899V263H900V265H901V264H902V265H903V264H904V265H905V264H908V265H909V264H910V265H912V264H913V265H914V264H915V265H916V264H917V265H918V264H921V265H922V264H923V265H924V264H925V265H928V264H929V265H930V264H931V265H932V264H938V265H939V264H941V263H942V264H946V265H948V264H951V263H952V264H953V265H954V264H961V265H962V264H963V263H964V264H967V265H969V264H971V265H973V264H980V263H981V264H986V265H987V264H991V265H992V264H996V265H997V264H1000V263H1001V264H1005V265H1006V264H1007V265H1009V264H1011V265H1013V264H1016V265H1018V263H1019V264H1020V265H1021V264H1024V265H1026V264H1028V265H1030V264H1033V265H1034V264H1042V265H1043V264H1045V265H1046V264H1049V265H1052V264H1066V265H1067V264H1069V265H1070V264H1075V265H1076V264H1079V263H1080V264H1081V265H1082V264H1084V265H1085V264H1087V265H1088V264H1089V265H1090V264H1094V265H1095V264H1105V265H1108V264H1121V265H1122V264H1124V265H1125V264H1133V265H1134V264H1136V265H1137V264H1140V265H1141V264H1144V265H1145V264H1148V265H1149V264H1150V265H1151V264H1154V265H1155V264H1161V265H1163V264H1166V265H1167V264H1170V265H1171V264H1174V265H1175V264H1177V265H1180V264H1196V265H1198V264H1200V265H1201V264H1203V265H1204V264H1205V265H1206V264H1208V265H1209V263H1210V264H1213V269H1212V268H1211V269H1210V268H1209V269H1208V268H1207V269H1206V268H1204V269H1201V268H1199V269H1196V268H1195V269H1194V268H1191V269H1187V268H1186V269H1184V268H1181V269H1179V268H1174V269H1173V268H1172V269H1169V268H1168V269H1167V268H1166V269H1165V268H1164V269H1161V268H1159V269H1157V268H1156V269H1153V268H1149V269H1148V268H1146V269H1145V268H1143V269H1142V268H1141V269H1140V268H1139V269H1134V268H1133V269H1132V268H1131V269H1124V268H1120V269H1119V268H1118V270H1117V268H1116V269H1108V268H1107V269H1103V268H1102V269H1099V268H1098V269H1095V268H1094V269H1092V268H1091V269H1090V268H1088V269H1086V268H1085V269H1081V268H1077V269H1075V268H1074V269H1073V268H1072V269H1069V268H1068V269H1067V268H1066V270H1065V268H1064V269H1063V268H1060V269H1049V268H1047V270H1046V268H1045V269H1044V268H1042V269H1040V268H1038V269H1034V268H1033V269H1031V270H1030V269H1027V268H1026V269H1025V268H1024V269H1021V268H1020V269H1018V268H1016V269H1012V268H1010V269H1008V268H1007V269H1005V268H998V269H997V268H992V269H990V268H989V269H986V268H984V269H975V268H973V269H971V268H970V269H966V268H965V269H964V268H962V269H961V268H959V269H958V268H957V269H954V268H953V269H951V268H950V269H949V268H942V270H941V269H939V268H938V269H937V268H935V269H928V268H926V269H925V268H924V269H923V268H922V269H921V270H920V269H917V268H916V270H915V268H913V269H910V268H907V269H904V268H903V269H902V268H901V269H899V268H896V269H892V268H891V269H890V268H887V269H885V268H884V269H882V268H880V269H879V268H876V269H872V270H871V268H870V269H869V268H866V270H865V269H861V268H860V269H856V268H853V269H852V268H851V269H850V268H848V269H847V268H846V269H842V268H841V269H835V268H834V269H833V268H831V269H824V268H822V269H821V268H819V269H817V268H815V269H813V268H812V269H811V270H810V268H808V269H807V268H805V269H803V270H802V269H800V268H799V269H798V268H797V269H796V270H795V268H791V269H787V268H786V269H783V270H782V269H780V268H778V269H774V268H773V269H771V268H770V269H765V270H764V268H763V269H762V268H761V269H759V268H758V269H757V268H754V269H753V268H752V269H745V268H744V269H741V268H739V269H737V268H736V269H732V268H731V269H729V270H728V269H726V268H725V269H720V268H719V269H712V268H711V269H710V270H709V268H708V269H706V268H705V269H703V268H701V269H698V268H697V269H692V268H691V269H690V268H689V269H686V268H685V269H684V268H683V269H680V268H676V269H675V268H674V269H672V268H670V269H664V268H661V269H658V268H657V269H656V268H655V269H654V268H653V269H652V268H649V269H645V268H644V269H643V268H642V269H640V268H639V269H637V268H636V269H634V268H632V269H630V268H627V269H626V268H625V269H624V268H623V269H622V268H621V269H620V268H619V269H617V268H615V269H612V270H611V269H610V268H609V269H608V268H607V269H606V268H605V270H604V268H602V269H601V268H599V269H594V268H593V269H591V268H587V269H586V270H585V269H580V268H579V269H576V268H575V269H574V268H571V269H570V268H569V269H568V268H567V269H566V268H565V270H564V269H562V268H560V269H558V268H555V269H553V268H551V269H546V268H545V269H539V268H537V269H533V268H531V269H524V268H523V269H519V268H516V269H515V268H514V269H513V268H511V269H510V268H509V269H508V270H507V268H506V269H504V268H503V269H502V268H500V269H498V268H497V269H495V268H494V269H492V268H491V269H490V268H489V269H481V268H480V269H478V268H476V269H474V268H473V269H468V268H467V269H464V270H463V269H462V268H461V269H459V268H457V269H456V268H455V269H454V268H453V269H449V268H446V269H443V268H436V269H424V268H423V269H421V268H420V269H415V268H413V269H408V268H407V270H406V269H404V268H403V269H402V268H401V269H399V268H398V269H395V268H394V269H392V268H390V269H389V268H388V269H386V268H385V269H384V268H383V270H382V269H380V268H379V269H377V268H376V269H375V268H374V269H370V268H368V269H365V268H362V269H361V268H360V269H356V268H355V269H352V268H349V269H344V268H342V269H340V270H339V268H336V269H334V268H333V269H331V268H330V269H328V268H325V269H324V268H323V269H322V268H321V269H319V268H313V269H311V268H310V269H309V268H308V269H307V268H304V269H303V268H302V269H301V268H300V269H297V268H295V269H285V268H284V269H282V268H281V269H276V268H273V269H271V268H269V269H265V268H264V270H263V269H259V268H258V269H248V268H246V269H245V268H243V269H238V268H236V269H231V270H230V269H228V268H227V269H225V268H224V269H223V268H221V269H219V268H218V269H217V268H215V269H207V268H205V269H201V268H199V269H198V268H196V269H194V268H191V269H186V270H185V269H184V268H183V269H181V268H179V269H178V268H176V269H174V268H173V269H161V268H157V269H155V268H154V269H153V268H151V269H148V268H144V270H143V269H142V268H141V269H136V268H135V269H129V268H126V269H122V268H120V269H116V268H115V269H114V268H111V269H110V268H108V269H105V268H104V269H102V268H100V269H95V268H94V269H90V268H89V269H88Z"/><path d="M88 295H89V294H91V295H94V293H95V294H97V295H98V294H101V295H103V294H104V295H106V294H107V295H108V294H110V295H111V294H113V295H114V294H117V295H119V294H120V295H121V294H122V295H127V293H128V294H130V295H131V294H133V295H134V294H136V295H137V293H138V295H146V294H149V295H150V294H151V295H155V294H156V295H158V294H159V295H161V294H165V295H166V294H167V295H168V294H169V295H173V294H175V295H178V294H179V295H180V294H181V295H182V294H183V295H184V294H185V295H187V294H189V295H190V294H193V295H194V294H196V295H197V294H198V295H200V294H201V295H202V294H203V295H204V293H205V295H207V294H208V295H211V294H215V295H217V294H219V295H220V294H223V295H225V294H227V295H229V294H230V295H231V294H232V295H234V294H238V295H239V294H240V295H241V294H242V295H246V294H247V295H248V294H249V295H250V294H252V295H253V293H254V295H256V293H257V295H258V294H260V295H261V294H262V295H264V294H265V295H267V294H268V295H269V294H270V295H272V294H274V295H278V294H279V295H280V294H282V295H283V294H284V295H286V294H287V293H288V294H291V295H293V294H294V295H295V293H297V295H298V294H299V295H301V294H303V295H304V294H306V295H308V294H313V295H314V294H315V295H317V294H318V295H319V293H320V294H321V295H322V294H323V295H324V294H325V295H327V294H329V295H331V294H332V295H334V294H335V295H337V294H340V295H341V294H345V295H346V294H348V295H349V294H351V295H352V294H354V295H356V294H357V295H358V294H363V295H365V294H369V295H371V294H373V295H375V294H377V295H380V294H383V295H385V294H386V295H387V294H388V295H394V294H396V295H398V294H399V295H400V294H402V295H403V294H404V295H406V294H410V295H414V294H415V295H417V294H419V295H420V294H421V295H426V294H428V295H430V294H433V295H436V294H438V295H439V294H440V295H443V294H444V295H445V294H446V295H447V294H448V295H453V294H454V295H458V294H459V295H461V294H464V295H465V294H466V295H468V294H469V295H470V294H472V295H473V294H474V295H476V294H481V295H482V294H485V295H486V294H493V295H495V294H497V295H503V294H510V295H511V294H512V295H514V294H519V295H521V294H522V295H523V294H525V295H531V294H533V295H534V294H537V295H538V293H539V294H540V295H542V294H543V295H544V294H545V295H546V294H551V295H552V294H553V295H554V294H558V295H559V294H561V295H563V294H570V295H572V293H573V295H576V294H578V295H579V294H580V295H581V294H582V295H583V294H585V295H586V294H588V295H589V294H591V295H592V294H594V295H595V294H596V295H597V294H599V295H601V294H602V295H603V294H604V295H605V294H606V295H610V294H611V293H612V294H613V295H614V294H615V295H616V294H617V295H621V294H622V295H624V294H628V295H630V294H634V295H635V294H636V295H637V294H639V295H641V294H646V295H650V294H652V295H653V294H655V295H657V294H658V295H661V294H663V295H664V294H669V295H670V294H671V295H672V293H673V294H675V295H677V294H679V295H680V294H682V295H685V294H686V295H687V294H689V295H691V294H692V295H694V294H695V295H696V294H697V295H698V294H705V295H711V294H713V295H714V294H715V295H716V294H719V295H720V294H721V295H723V294H726V295H727V294H728V295H729V294H733V295H734V294H737V295H738V294H740V295H741V294H742V295H743V294H745V295H746V294H747V295H749V294H751V295H753V294H755V295H756V294H758V295H759V294H760V295H761V294H764V295H765V294H766V293H767V295H768V294H769V295H771V293H772V294H773V295H774V294H775V295H776V294H777V295H778V294H783V295H784V294H785V295H786V294H790V295H791V294H793V295H795V294H796V295H799V293H800V294H805V295H806V294H811V295H815V294H816V295H818V294H820V295H822V294H825V295H826V294H829V295H830V294H833V295H835V294H836V295H838V294H839V295H842V294H843V295H844V294H845V295H848V294H849V295H850V294H852V295H853V293H854V294H855V295H857V294H859V295H862V294H863V295H864V294H865V295H866V294H867V295H868V294H871V295H873V294H874V295H875V294H876V295H877V294H879V295H881V294H883V295H884V294H886V295H887V294H890V295H896V293H897V295H898V293H899V294H900V291H901V294H902V293H903V294H904V295H906V294H909V295H910V294H911V295H914V294H920V295H924V294H925V295H927V294H928V295H929V294H930V295H932V294H933V295H934V294H935V295H939V294H944V295H945V294H946V295H949V294H952V293H953V294H955V295H958V294H959V295H960V294H961V295H964V294H965V293H966V295H967V294H970V295H975V294H976V295H980V294H981V295H984V294H985V295H986V294H992V295H993V294H995V295H996V294H1000V295H1001V294H1003V295H1004V294H1006V293H1007V294H1008V295H1010V294H1013V295H1015V294H1016V295H1017V294H1018V295H1019V294H1020V295H1022V294H1023V295H1025V294H1028V295H1029V294H1031V295H1032V294H1033V293H1034V295H1037V294H1041V295H1043V294H1045V295H1046V294H1047V295H1048V294H1049V295H1053V293H1054V294H1056V295H1063V294H1064V295H1069V294H1070V295H1072V294H1073V295H1075V294H1076V295H1079V294H1080V295H1081V294H1084V295H1085V294H1091V295H1092V294H1096V295H1097V293H1098V294H1099V295H1103V294H1108V295H1109V294H1110V295H1111V294H1113V295H1115V294H1117V295H1118V294H1119V295H1121V294H1124V295H1125V294H1129V295H1131V294H1133V295H1137V294H1141V295H1142V294H1143V295H1144V294H1146V295H1150V294H1152V293H1153V294H1157V295H1159V294H1161V295H1162V294H1164V293H1165V294H1168V295H1169V294H1170V295H1172V294H1173V295H1175V294H1176V295H1177V294H1178V295H1179V294H1182V295H1186V294H1191V295H1192V294H1193V295H1195V294H1200V295H1206V294H1207V295H1210V294H1212V295H1213V299H1208V298H1207V299H1205V298H1203V299H1202V298H1201V299H1198V298H1196V299H1194V298H1190V299H1189V298H1188V299H1185V298H1184V299H1182V298H1181V300H1180V298H1178V299H1177V298H1175V299H1170V298H1169V299H1168V298H1166V299H1164V300H1163V299H1159V298H1153V299H1145V298H1142V299H1138V298H1137V299H1136V298H1135V299H1133V298H1132V299H1131V298H1130V299H1128V298H1127V299H1124V298H1123V299H1119V298H1118V299H1115V298H1113V299H1112V298H1111V299H1109V298H1107V299H1106V298H1105V299H1103V298H1102V299H1099V298H1098V299H1090V298H1088V300H1087V299H1086V298H1084V299H1083V298H1081V299H1077V298H1076V299H1074V298H1073V299H1071V298H1070V299H1069V298H1068V299H1066V298H1064V299H1063V298H1062V299H1061V298H1060V299H1058V298H1057V299H1055V298H1054V299H1052V298H1051V299H1048V298H1047V299H1045V298H1044V299H1040V298H1039V300H1038V298H1037V299H1036V298H1034V299H1031V298H1030V299H1028V298H1026V299H1024V298H1023V299H1021V298H1017V299H1015V300H1014V298H1013V299H1012V298H1010V299H1006V298H1005V299H1004V298H1002V299H998V298H995V299H993V298H992V299H990V298H989V299H987V300H986V299H985V298H984V299H983V298H982V299H978V298H977V299H975V298H974V299H970V298H968V299H966V298H963V299H962V298H961V299H960V298H959V299H955V298H953V299H952V300H951V299H948V298H946V299H944V298H940V299H938V298H937V299H935V298H934V299H932V298H928V299H927V298H925V299H921V298H919V299H914V298H913V299H911V298H910V299H909V298H906V299H903V298H902V300H901V302H900V298H899V301H898V298H897V299H892V298H890V299H887V298H886V299H880V298H879V299H877V298H874V299H873V298H872V299H870V298H869V299H862V298H861V299H859V298H858V299H857V298H855V299H852V298H851V299H850V300H849V299H846V298H844V299H842V298H840V299H838V298H837V299H836V298H835V299H833V298H832V299H831V298H829V299H828V298H827V299H824V298H823V299H821V298H820V299H811V298H810V299H809V298H808V299H800V298H797V299H796V298H795V299H790V298H789V299H787V298H786V299H785V298H783V299H780V298H779V299H778V298H777V299H775V298H774V299H771V298H770V299H766V298H764V299H762V298H761V299H756V298H754V299H753V298H751V299H747V298H740V299H739V298H738V299H737V298H736V299H735V298H734V300H733V299H732V298H730V299H728V298H727V299H725V298H723V299H721V298H719V299H718V298H717V299H714V298H713V299H712V298H710V299H708V298H706V299H705V298H703V299H702V298H700V299H697V298H696V299H695V298H694V299H690V298H688V299H687V298H685V299H684V298H682V299H681V298H678V299H677V298H676V299H675V298H673V299H670V300H669V299H668V298H667V299H666V298H665V299H663V298H662V299H661V298H659V299H657V298H656V299H654V298H653V299H651V298H648V299H647V298H645V299H641V298H639V299H635V298H634V299H633V298H631V299H630V298H629V299H625V298H623V299H621V298H618V299H610V298H608V299H607V298H606V299H602V298H601V299H600V298H599V299H598V300H597V299H595V298H593V299H591V298H590V299H589V298H587V300H586V298H585V299H584V298H583V299H582V300H581V298H580V299H572V298H569V299H568V298H567V299H560V298H559V299H558V298H557V299H551V298H550V299H548V298H545V299H544V298H543V299H541V298H538V299H537V298H532V299H527V298H526V299H525V298H524V299H522V298H519V299H517V298H516V300H515V299H514V300H513V299H509V298H508V299H502V298H500V299H498V298H495V299H492V298H490V299H489V298H487V299H485V298H484V299H481V298H479V299H478V298H477V299H476V298H472V299H460V298H457V299H455V298H454V299H451V298H450V299H449V298H445V299H444V298H442V299H441V298H440V299H438V300H437V299H436V298H435V300H434V298H433V299H432V298H431V299H430V298H425V299H419V298H418V299H417V298H414V299H412V298H410V299H408V298H406V299H405V298H404V299H402V298H401V299H400V298H399V299H395V298H394V300H393V299H388V298H387V299H384V298H383V299H382V298H381V299H379V300H378V299H377V298H376V299H375V298H374V299H373V298H372V299H371V298H369V299H368V298H367V299H364V298H363V300H362V298H361V299H355V298H354V299H353V298H352V299H351V298H350V299H346V298H345V299H340V298H339V299H338V298H337V299H336V298H335V299H333V298H330V299H328V298H326V299H325V298H323V299H320V298H319V299H317V298H316V299H313V298H312V299H310V298H307V299H306V298H305V299H303V298H302V299H301V298H299V299H296V298H295V299H294V298H292V299H291V298H289V299H287V298H286V299H284V300H283V298H281V299H280V298H279V299H272V298H270V299H269V298H268V299H267V298H266V299H262V300H261V299H260V298H259V299H250V298H249V300H248V298H246V299H243V298H241V299H240V300H239V299H237V298H236V299H235V298H234V299H233V298H232V299H229V300H228V298H227V300H226V299H224V298H222V299H220V298H219V299H218V298H215V299H214V298H212V299H210V298H209V299H208V298H204V299H201V298H199V299H198V298H197V299H195V298H194V299H192V298H190V299H189V298H188V299H183V298H181V299H180V298H179V299H174V300H173V299H172V298H168V299H166V298H165V299H163V298H162V299H159V298H158V299H157V298H155V299H154V300H153V298H151V299H149V298H147V299H143V298H142V299H141V300H140V299H135V300H134V299H132V298H129V299H124V298H123V299H122V298H120V299H119V300H118V299H114V298H111V299H110V298H108V299H107V298H106V299H105V298H104V299H103V298H102V299H101V298H100V299H99V298H97V299H96V298H95V299H94V298H93V299H91V298H90V299H88Z"/><path d="M88 324H89V325H99V324H100V325H104V324H105V325H110V324H111V325H117V324H118V325H121V324H122V325H124V324H126V325H129V324H130V325H135V324H136V325H140V324H142V325H145V324H146V325H148V324H149V325H150V321H151V324H152V319H153V321H154V324H156V323H158V324H159V325H162V324H163V325H165V324H166V325H170V324H172V325H174V324H176V325H181V324H182V325H186V324H187V325H188V324H189V325H190V324H191V325H197V324H198V325H205V324H206V325H207V324H208V325H209V324H211V325H218V324H219V325H222V324H224V325H231V324H232V325H240V324H241V325H247V324H248V325H249V324H250V325H253V324H254V325H256V324H258V325H262V324H263V325H264V324H265V325H266V324H267V325H268V324H270V325H271V324H273V325H286V324H288V325H290V324H291V325H298V324H299V325H300V324H301V325H305V323H306V325H307V324H308V325H310V324H311V325H315V324H316V325H325V324H326V325H335V324H336V325H339V324H340V325H342V324H345V325H346V324H347V325H359V324H360V325H361V324H362V325H365V324H366V325H370V324H372V325H373V324H374V325H379V324H380V325H384V324H386V325H390V324H393V325H395V324H396V325H405V324H406V325H410V324H411V325H421V324H422V325H423V324H424V325H430V324H431V325H435V324H436V325H439V324H440V325H441V324H442V325H445V324H446V325H447V324H448V325H450V324H452V325H456V324H457V325H461V324H462V325H469V324H470V325H478V324H479V325H485V324H486V325H489V324H490V325H493V324H494V325H497V324H499V325H518V324H519V325H529V324H530V325H533V324H536V325H540V324H543V325H546V324H547V325H555V324H556V325H562V324H563V325H578V324H579V325H586V324H587V325H589V324H590V325H598V324H599V325H614V324H615V325H620V324H622V325H623V324H624V325H632V324H633V325H634V324H635V325H644V324H645V325H647V324H648V325H652V324H653V325H663V324H664V325H670V324H671V325H682V324H683V325H694V324H695V325H711V324H713V325H722V323H723V325H725V324H726V325H730V324H731V325H737V324H738V325H739V324H740V325H744V324H745V325H763V324H764V325H766V324H767V325H773V324H774V325H783V324H784V325H792V324H793V325H796V324H797V325H798V324H799V325H803V324H804V325H805V324H806V325H809V324H811V325H812V324H813V325H815V324H816V325H825V324H826V325H827V324H830V325H844V324H845V325H854V324H855V325H857V324H858V325H860V324H861V325H862V324H863V325H876V324H879V325H881V324H882V325H885V324H887V325H892V324H894V325H899V324H900V325H901V324H905V325H907V324H908V325H909V324H911V325H928V324H929V325H943V324H944V325H951V324H952V325H953V324H954V325H967V324H968V325H971V324H973V325H975V324H976V325H986V324H987V325H995V324H996V325H997V324H998V325H999V324H1000V325H1004V324H1005V325H1014V324H1015V325H1016V324H1017V325H1025V324H1026V325H1031V324H1033V325H1034V323H1035V325H1039V324H1040V325H1041V324H1042V325H1045V324H1047V325H1051V324H1052V325H1053V324H1054V325H1056V324H1058V325H1061V324H1062V325H1069V324H1071V323H1072V324H1073V325H1077V324H1078V325H1079V324H1080V325H1086V324H1088V325H1091V324H1093V325H1097V324H1098V325H1111V324H1112V325H1113V324H1114V325H1122V324H1123V325H1128V323H1129V324H1130V325H1131V323H1132V324H1133V325H1137V324H1138V325H1143V324H1145V325H1156V324H1157V325H1164V324H1165V325H1166V324H1168V325H1170V324H1171V325H1176V324H1177V325H1178V323H1179V325H1183V324H1184V325H1187V324H1188V325H1189V324H1190V325H1191V324H1192V325H1194V324H1196V325H1197V324H1198V325H1204V324H1206V325H1209V324H1210V325H1213V329H1188V330H1187V329H1177V330H1176V329H1167V330H1166V329H1161V330H1159V329H1158V330H1157V329H1156V330H1155V329H1153V330H1152V329H1135V330H1134V329H1132V330H1129V329H1118V330H1117V329H1114V330H1113V329H1107V331H1106V329H1102V330H1101V329H1091V330H1090V329H1084V330H1083V329H1081V331H1080V329H1077V330H1076V329H1073V330H1072V329H1052V330H1051V329H1050V330H1049V329H1041V330H1040V329H1031V330H1030V329H1029V330H1027V329H1020V330H1019V329H1014V330H1013V329H997V330H996V329H989V330H987V329H979V330H978V329H963V330H962V329H961V330H960V329H959V330H958V329H944V331H943V329H937V330H936V329H921V330H920V329H893V330H892V329H885V330H884V329H883V330H881V329H880V330H879V329H876V330H874V329H852V330H851V329H850V330H848V329H841V330H840V329H838V330H837V329H829V330H828V329H819V330H818V329H798V330H797V329H789V330H788V329H782V330H781V329H757V330H756V329H745V330H742V329H735V330H733V329H730V330H729V329H717V330H716V329H697V330H696V329H693V330H692V329H687V330H686V329H674V330H673V329H658V330H657V329H653V330H652V329H642V330H641V329H634V330H633V329H619V330H618V329H613V330H612V329H608V330H606V329H596V330H595V329H585V330H584V331H583V329H570V330H569V329H567V330H565V329H564V330H563V329H562V330H561V329H559V330H558V329H557V330H555V329H552V330H551V329H549V330H547V329H538V330H537V329H534V330H533V329H528V330H527V329H493V330H492V329H486V330H485V329H475V330H474V329H469V330H468V329H466V330H465V329H462V330H461V329H454V330H453V329H447V330H446V329H444V330H443V329H431V330H430V329H408V331H407V329H398V330H396V329H373V330H371V329H363V330H362V329H359V330H358V329H352V330H351V329H345V330H344V329H341V330H340V329H339V330H338V329H329V330H328V329H327V330H326V329H320V330H319V329H307V330H306V329H278V330H277V329H271V330H270V329H266V330H265V329H257V330H255V329H244V330H243V329H241V330H239V329H228V330H227V329H218V330H217V329H216V330H215V329H212V330H211V329H207V330H206V329H205V330H204V329H203V330H202V329H198V331H197V329H192V330H191V329H185V330H184V329H179V330H178V329H168V330H167V329H165V330H164V329H163V330H162V329H159V330H157V331H156V332H155V329H153V333H152V332H151V331H150V329H149V332H148V329H147V332H146V329H140V330H139V329H136V330H135V329H132V330H131V329H125V330H124V329H109V331H108V330H107V329H97V330H96V329H93V330H92V329H88Z"/><path d="M88 354H90V355H91V354H92V355H102V354H103V355H104V354H105V355H106V354H107V355H108V354H109V355H111V354H112V355H114V354H117V353H118V355H121V354H122V355H123V354H125V355H126V354H129V355H131V353H132V354H135V355H136V354H137V355H138V354H139V355H141V354H143V355H144V354H145V355H147V354H148V355H149V354H150V355H151V354H153V355H155V354H157V355H158V354H160V355H162V354H163V355H164V354H166V355H167V354H169V355H171V354H174V355H177V354H178V353H179V354H180V355H181V354H182V355H183V354H193V355H194V354H195V355H196V354H197V355H199V354H201V355H202V354H203V355H205V354H206V355H207V354H208V355H209V354H210V355H214V354H215V355H216V354H217V355H220V354H221V355H223V354H229V355H231V354H234V355H239V354H241V355H246V354H247V355H248V354H250V355H251V353H252V354H256V355H258V354H259V355H263V354H271V353H272V355H273V354H275V355H277V354H278V355H280V354H281V355H282V354H283V355H284V354H285V355H288V354H290V355H291V354H293V353H295V354H298V355H300V354H302V355H303V354H305V355H306V354H307V355H308V354H311V355H315V354H316V355H317V354H318V355H320V354H322V355H323V354H327V355H328V354H329V355H330V354H333V355H337V354H338V355H339V354H340V355H343V354H346V355H347V354H350V355H351V354H352V355H355V354H357V355H358V354H359V355H363V354H364V355H365V354H367V353H368V355H369V354H370V355H372V354H373V355H375V354H376V355H379V354H381V355H382V354H384V355H385V354H388V355H389V354H393V353H394V355H395V354H397V355H398V354H399V355H403V354H404V355H407V354H409V355H410V354H412V355H413V354H416V355H419V354H420V355H423V354H424V355H429V354H431V355H432V354H434V355H435V354H436V355H440V354H441V355H447V354H449V355H450V354H451V355H452V354H453V355H456V354H462V355H465V354H467V355H468V353H469V355H470V354H471V355H472V354H473V355H476V354H478V355H481V354H487V355H488V354H489V355H491V354H492V355H494V354H495V355H502V354H504V355H505V353H506V354H507V355H509V354H510V355H511V354H512V355H518V354H521V355H523V354H527V355H530V354H531V355H533V354H534V355H537V354H538V355H540V354H544V355H546V354H547V355H549V354H554V355H556V354H560V355H562V354H564V355H567V354H568V355H569V354H572V355H573V354H575V355H576V354H577V355H578V354H580V355H583V354H584V355H587V354H590V355H592V354H594V355H597V354H600V355H602V354H603V355H604V354H607V355H609V354H610V355H611V354H612V355H614V354H617V355H621V354H624V355H625V354H627V355H628V354H630V355H632V354H635V355H636V354H638V355H642V354H644V355H646V354H648V355H649V353H650V354H651V355H653V354H655V355H656V354H662V355H663V354H664V353H665V355H666V354H667V355H668V354H669V355H672V354H677V355H680V354H681V355H682V354H683V355H684V354H688V355H689V354H690V355H696V354H697V355H699V354H701V355H702V354H706V355H711V354H712V355H714V354H716V355H717V354H719V355H720V354H721V355H722V354H724V355H725V354H726V355H727V353H728V354H731V355H734V354H735V355H736V354H738V353H739V355H741V354H742V355H743V354H747V355H749V354H751V355H752V354H755V355H756V354H757V353H758V355H759V354H760V355H764V354H765V355H766V354H768V355H769V353H770V354H771V355H772V353H773V354H776V355H777V354H778V355H779V354H781V355H782V354H785V355H786V354H790V355H793V354H795V355H796V354H798V355H799V354H800V355H803V353H804V354H806V355H811V354H818V355H821V354H826V355H827V354H829V355H830V354H831V355H832V354H833V353H834V354H835V355H836V354H838V355H841V354H842V355H843V354H850V355H853V354H857V355H858V354H860V355H861V354H863V355H865V354H866V355H867V354H868V355H870V354H872V353H873V355H874V354H875V355H876V354H882V355H885V354H886V355H887V354H888V355H889V354H892V355H893V354H894V355H895V354H896V355H899V354H904V355H905V354H906V355H907V354H908V355H911V354H915V355H918V354H919V355H923V354H924V355H930V354H931V355H932V354H933V355H935V354H938V355H939V354H942V355H944V354H947V355H948V354H949V355H950V354H951V355H952V354H954V355H956V354H961V355H962V354H964V355H965V354H966V355H969V354H971V355H972V354H975V355H978V354H980V355H981V354H982V355H984V354H985V355H988V354H990V353H991V355H992V353H994V354H996V353H997V354H998V355H1000V354H1001V355H1002V354H1003V355H1005V354H1006V355H1007V353H1008V355H1010V354H1014V355H1015V354H1016V355H1017V354H1021V355H1024V354H1025V355H1027V354H1028V355H1030V354H1032V353H1033V355H1034V354H1036V355H1039V354H1040V355H1042V354H1045V355H1046V354H1052V355H1053V354H1054V355H1059V354H1061V355H1062V354H1063V355H1065V354H1068V355H1070V354H1072V355H1074V354H1075V353H1076V354H1078V355H1079V354H1082V355H1083V354H1085V355H1087V354H1088V355H1089V354H1091V355H1092V354H1094V355H1097V354H1099V355H1102V354H1105V355H1106V354H1107V355H1108V354H1110V355H1111V354H1112V355H1113V354H1117V355H1118V354H1125V355H1130V354H1131V355H1132V354H1137V355H1138V354H1139V355H1144V354H1145V355H1148V354H1151V355H1152V354H1153V355H1154V354H1155V355H1156V353H1157V355H1159V354H1161V355H1163V354H1164V355H1168V354H1171V355H1172V354H1175V355H1176V354H1179V355H1180V354H1182V355H1183V354H1184V355H1192V354H1193V355H1195V354H1204V353H1205V355H1207V354H1210V355H1211V354H1212V355H1213V360H1212V359H1209V358H1208V359H1206V358H1205V359H1202V358H1201V359H1200V358H1198V359H1197V358H1195V359H1194V360H1193V359H1191V358H1187V359H1186V358H1184V359H1183V358H1180V359H1176V358H1174V359H1170V358H1169V359H1168V358H1167V359H1166V358H1165V359H1162V358H1161V359H1150V358H1143V359H1142V358H1141V359H1139V358H1138V359H1137V358H1135V359H1133V358H1129V359H1125V358H1124V359H1120V358H1118V359H1117V358H1115V359H1114V358H1113V359H1112V358H1111V359H1107V358H1106V359H1105V358H1102V359H1101V358H1100V359H1098V358H1097V359H1096V358H1095V359H1091V360H1090V358H1089V359H1086V358H1084V359H1083V358H1077V359H1075V358H1073V359H1072V358H1068V360H1067V359H1066V358H1065V359H1064V358H1063V359H1062V358H1060V359H1059V358H1058V359H1057V358H1055V359H1053V358H1051V359H1047V358H1046V359H1043V358H1041V359H1040V358H1039V359H1038V358H1035V359H1034V358H1033V359H1025V358H1023V359H1018V358H1016V359H1004V358H1003V359H1002V358H1000V359H999V358H998V359H994V360H993V359H992V358H991V359H989V358H988V359H985V358H984V359H982V358H981V359H979V360H978V359H977V358H975V359H974V358H972V359H970V358H965V359H964V358H963V359H959V360H958V358H957V359H955V358H952V359H950V358H949V360H948V358H947V359H945V358H944V359H936V358H932V359H931V358H929V359H928V358H927V359H925V358H924V359H923V360H922V359H919V358H918V359H917V358H916V359H915V358H914V359H911V358H909V359H907V358H905V359H904V358H901V359H900V358H898V359H893V358H892V359H887V358H886V360H884V359H881V358H880V359H878V358H877V359H875V358H874V359H872V358H871V359H867V358H866V359H863V358H862V359H858V360H857V359H855V358H854V359H852V358H850V359H845V358H844V359H842V358H841V359H837V358H836V359H835V358H833V359H831V358H830V359H829V358H828V359H825V358H824V359H823V358H822V359H821V358H820V359H817V358H815V359H814V358H813V359H812V358H811V359H808V358H807V359H804V358H803V359H800V358H799V359H795V358H794V359H791V358H790V359H789V358H788V359H787V358H786V359H784V358H783V359H780V358H778V359H777V358H776V359H774V358H772V359H771V360H770V362H769V358H768V360H767V359H765V358H764V359H762V358H761V359H758V358H755V359H753V358H750V359H748V358H747V359H746V358H745V359H743V358H742V359H740V358H739V359H738V358H736V359H735V358H734V359H732V358H731V359H725V358H720V359H718V358H716V359H713V360H712V359H710V358H708V359H707V358H706V359H700V358H698V360H697V358H696V359H695V358H693V359H692V358H691V359H687V358H679V359H676V358H675V359H670V358H669V359H668V358H666V359H665V358H664V359H659V358H656V359H655V358H654V359H652V358H651V359H650V358H649V359H646V358H645V359H636V360H635V358H633V359H630V358H628V359H626V358H623V359H621V358H620V359H619V358H617V359H616V358H615V359H613V358H612V359H611V358H610V359H602V358H599V359H597V358H595V359H593V358H592V359H591V358H590V359H587V358H586V359H585V358H584V359H583V358H582V359H581V358H580V359H578V358H573V359H571V358H570V359H569V358H568V359H567V358H563V359H560V358H558V359H557V358H556V359H555V358H549V359H548V358H547V359H542V360H541V358H540V359H537V358H536V359H534V358H533V359H526V358H525V359H524V358H522V359H521V358H520V359H519V360H518V358H515V359H513V358H512V359H511V358H510V359H509V358H507V359H502V360H501V359H498V358H497V359H489V358H488V359H486V358H485V359H483V360H482V359H476V358H474V359H472V358H469V359H467V358H464V359H463V358H459V359H457V358H455V360H454V359H453V358H449V359H448V358H447V359H445V358H444V359H441V358H440V359H439V358H438V359H437V358H434V359H433V358H432V359H429V358H426V359H425V358H424V359H421V358H419V359H418V358H417V359H415V358H413V359H412V358H410V359H408V358H407V359H406V358H405V360H404V358H400V359H399V358H398V359H397V358H396V359H393V358H391V359H386V358H385V359H382V358H381V359H377V358H373V359H371V358H366V359H365V358H364V359H360V358H359V359H358V358H357V359H355V358H354V359H350V358H347V359H346V358H343V359H338V358H337V360H336V359H333V358H332V360H331V358H328V359H324V358H323V359H322V358H319V359H316V360H315V359H312V358H311V359H310V358H308V359H307V358H306V359H303V358H302V359H300V358H298V359H296V360H293V359H292V358H291V360H290V358H289V359H287V358H286V359H284V358H282V359H281V358H279V359H276V358H275V359H271V358H269V359H267V358H265V359H262V358H261V359H259V358H255V359H253V358H251V359H250V358H249V359H248V358H246V359H242V358H241V359H240V358H234V359H233V358H232V359H231V358H230V359H228V360H227V359H224V358H221V359H220V358H218V359H216V358H214V359H209V358H208V359H205V358H202V359H199V358H198V359H196V358H195V359H191V358H190V359H189V358H188V359H183V358H182V359H181V360H180V359H178V358H177V359H174V358H173V359H168V358H167V359H159V358H157V359H156V358H154V359H151V358H149V359H148V358H147V359H145V360H144V358H143V359H142V358H139V360H138V359H137V358H136V359H135V358H133V360H132V359H129V358H123V359H117V358H115V359H114V358H113V359H111V358H110V359H109V358H108V359H103V358H101V359H100V358H99V359H94V358H93V359H92V360H91V359H88Z"/><path d="M88 385H103V384H104V385H111V386H113V385H118V386H119V384H120V385H122V386H123V385H131V384H132V385H133V384H134V386H136V385H148V386H149V384H150V385H152V386H153V385H154V386H156V385H157V386H158V385H169V386H171V384H172V385H188V384H189V385H192V386H193V385H195V384H198V385H200V384H201V385H202V384H203V385H206V384H207V385H218V386H219V385H230V386H231V385H236V386H237V385H241V386H242V385H250V386H251V385H257V384H258V385H287V386H288V385H293V386H294V385H303V386H304V385H321V386H322V385H331V384H332V385H333V386H334V385H335V384H336V385H340V386H341V385H343V386H345V385H350V386H351V385H360V386H361V385H362V386H363V385H370V386H371V384H372V385H382V384H383V385H396V386H397V385H403V384H404V385H405V386H406V385H413V386H414V385H415V386H417V384H418V385H420V386H421V385H429V386H430V385H435V386H436V385H438V386H439V385H442V386H443V385H447V386H448V385H456V386H457V385H461V386H462V385H471V386H472V385H473V386H474V385H481V386H482V385H483V386H484V385H487V386H488V385H494V386H495V385H504V386H505V385H509V384H510V385H515V384H516V385H524V384H525V385H528V386H529V385H537V386H538V385H539V386H544V385H549V384H550V385H551V386H552V385H553V386H554V385H555V386H556V384H557V385H560V386H561V384H562V385H567V386H569V385H575V386H576V385H580V386H581V385H584V384H586V385H587V386H588V385H592V386H593V385H606V386H607V385H611V386H612V385H616V386H617V385H619V386H620V385H625V386H626V385H628V386H629V385H638V386H639V385H640V386H641V385H659V386H660V385H676V386H677V385H682V384H683V385H688V386H689V385H694V386H695V385H705V384H706V385H708V386H709V385H711V384H712V386H714V384H715V386H716V385H723V386H724V385H725V386H726V385H738V386H740V385H741V386H742V385H743V386H744V385H751V386H752V385H771V386H772V385H776V386H777V385H782V386H785V385H809V386H810V385H822V386H824V385H830V386H831V385H835V386H836V385H839V384H840V385H841V384H842V385H843V386H844V385H853V386H854V385H867V386H868V384H869V385H872V386H873V385H882V384H883V385H886V386H887V385H888V384H889V385H908V384H909V386H910V385H914V386H915V385H922V386H923V385H938V386H939V385H945V386H946V385H950V386H951V385H962V384H963V385H964V386H965V385H966V386H967V385H971V386H972V385H975V386H976V385H981V386H983V385H985V386H987V385H988V386H990V385H993V386H994V385H1000V386H1001V385H1005V384H1006V385H1010V386H1011V385H1012V386H1013V385H1016V386H1017V385H1019V386H1020V385H1025V386H1026V385H1030V386H1031V385H1039V386H1040V385H1041V386H1043V385H1045V386H1047V385H1048V386H1049V385H1065V386H1066V385H1067V386H1069V385H1071V386H1072V385H1078V386H1079V385H1080V386H1081V385H1084V386H1085V385H1091V384H1092V385H1093V386H1095V384H1097V385H1103V386H1104V385H1120V386H1121V385H1123V386H1124V385H1128V384H1129V385H1133V386H1135V385H1139V386H1140V384H1141V385H1143V386H1144V385H1151V386H1152V385H1160V386H1161V385H1173V386H1174V385H1175V384H1176V385H1185V386H1186V385H1199V384H1200V385H1203V386H1204V385H1207V386H1210V385H1213V390H1210V389H1209V390H1208V389H1204V391H1203V390H1200V389H1198V390H1194V389H1193V390H1187V389H1186V390H1185V389H1183V390H1182V389H1181V390H1179V389H1176V390H1175V389H1174V390H1172V391H1171V389H1170V390H1165V389H1164V390H1163V389H1162V390H1157V389H1155V390H1154V389H1153V390H1151V389H1150V390H1148V389H1146V390H1145V389H1144V390H1143V389H1141V390H1140V389H1138V390H1130V389H1129V390H1128V389H1127V390H1109V389H1108V390H1107V389H1106V390H1104V389H1103V391H1102V390H1100V389H1099V390H1085V389H1084V390H1080V389H1078V390H1075V389H1074V390H1073V389H1071V390H1065V389H1064V390H1063V389H1061V390H1059V389H1057V390H1056V389H1055V390H1053V389H1052V390H1050V389H1048V390H1045V391H1044V389H1043V390H1041V389H1039V390H1036V389H1035V390H1034V389H1032V390H1027V389H1025V390H1015V389H1014V390H1003V389H1002V390H1000V389H999V390H998V389H996V390H994V389H991V391H990V390H988V389H986V390H980V389H977V390H976V389H975V390H974V389H973V391H972V390H969V389H968V390H967V389H966V390H965V389H964V390H960V389H958V390H957V389H956V390H955V389H952V390H951V389H950V390H947V389H946V390H943V389H941V390H940V389H938V390H936V389H934V390H932V389H930V390H929V389H928V390H927V389H926V390H924V389H921V390H920V389H918V390H917V389H915V390H913V389H912V390H911V389H910V390H909V389H907V390H905V389H904V390H902V389H901V390H900V389H899V390H896V391H895V389H894V390H893V389H892V390H888V389H883V390H881V391H880V390H879V391H878V390H877V389H876V390H874V389H870V390H869V389H868V390H867V389H866V390H859V389H856V390H853V389H851V390H850V389H846V390H845V389H843V390H834V389H832V390H831V389H830V390H828V389H826V390H825V389H824V390H819V389H818V390H813V389H812V390H808V389H807V390H806V389H805V390H802V389H801V390H800V389H799V390H796V389H795V390H788V389H783V390H782V389H781V390H780V389H779V390H778V389H777V390H776V389H775V390H774V389H772V390H770V389H769V390H768V389H767V390H763V389H761V390H760V389H759V390H757V389H756V390H754V389H753V390H752V389H750V390H749V389H748V390H744V389H741V390H739V389H738V390H737V389H734V390H730V389H728V390H724V389H720V390H718V389H717V390H715V389H714V390H712V389H710V390H708V389H707V390H706V389H705V390H703V389H702V390H701V389H699V390H698V389H697V390H695V389H693V390H692V389H691V390H690V389H688V390H684V389H683V390H680V389H678V390H676V389H670V390H666V389H665V390H662V389H660V390H653V389H650V390H649V389H645V390H643V389H642V390H634V389H632V390H631V389H630V390H626V389H625V390H623V389H620V390H619V389H616V390H615V391H614V390H612V389H611V390H610V389H609V390H608V389H607V390H606V389H603V390H602V389H601V390H598V389H597V390H595V389H592V390H589V389H588V390H586V389H585V390H577V389H576V390H574V389H571V390H567V389H566V390H561V389H559V390H556V389H553V391H552V389H549V390H544V389H543V390H542V389H541V390H539V389H538V390H537V389H536V390H533V389H531V390H524V389H523V390H522V389H521V390H520V389H517V390H514V389H513V390H507V389H504V390H500V389H498V390H494V389H492V390H490V389H488V390H486V389H485V390H483V389H482V390H481V391H480V389H479V390H478V389H475V390H474V389H469V390H468V389H467V390H465V389H463V391H462V390H456V389H455V390H453V389H452V390H451V389H448V390H445V389H443V390H441V389H440V390H438V391H437V389H436V390H434V389H433V390H430V389H429V390H428V389H427V391H426V390H422V389H421V390H414V391H412V389H411V390H404V389H403V390H400V389H399V390H391V389H390V390H389V389H385V390H383V389H380V390H374V389H372V390H370V389H369V390H364V389H363V390H362V389H361V390H358V389H354V390H351V389H350V390H346V389H342V390H340V389H338V390H337V389H336V390H334V389H333V391H332V390H328V391H327V389H325V390H322V389H319V390H316V389H315V390H313V389H308V390H306V391H305V389H303V390H300V389H296V390H293V389H292V390H288V389H286V390H285V389H282V390H281V389H279V390H277V389H275V390H268V389H267V390H266V389H264V390H263V389H262V390H259V389H258V390H257V389H255V390H253V389H251V390H250V389H247V390H246V389H245V390H244V389H243V391H242V390H238V389H237V390H235V389H234V390H226V389H224V390H222V389H220V390H218V389H217V390H214V389H213V390H211V389H207V390H206V389H205V390H202V389H201V390H200V389H199V390H198V392H197V390H190V389H189V390H188V389H187V390H184V389H183V390H181V389H178V390H177V389H176V390H175V389H173V390H169V389H167V390H165V389H164V391H163V390H159V389H157V390H156V389H153V390H150V389H149V390H147V391H146V390H144V389H140V390H139V389H138V390H137V389H135V390H133V389H129V390H126V389H123V390H122V389H121V390H118V389H117V390H116V389H113V390H109V389H107V390H101V389H98V390H97V389H95V390H91V389H89V390H88Z"/><path d="M88 416H94V414H95V415H97V416H101V415H102V416H111V415H112V416H114V415H115V416H116V415H117V416H118V415H120V416H126V415H128V416H129V415H130V416H131V415H133V416H135V415H136V416H142V415H143V416H144V415H145V416H148V415H149V416H151V415H153V416H154V415H155V416H161V415H163V416H164V415H165V416H171V415H172V416H173V415H174V416H175V415H176V416H179V415H180V416H183V414H184V415H185V416H186V415H187V416H191V415H193V416H200V415H202V416H208V415H209V416H210V415H211V416H213V415H214V416H219V415H222V416H223V415H224V416H234V415H235V416H239V415H241V416H242V415H243V416H250V415H251V416H254V415H256V416H260V415H261V416H265V415H266V416H271V415H272V416H277V415H278V416H289V415H290V416H303V415H305V416H320V415H323V416H324V415H327V416H337V415H338V416H340V415H342V416H347V415H348V416H358V415H359V416H361V414H362V416H364V415H365V416H372V415H373V416H377V415H378V416H383V415H384V416H394V415H395V416H398V415H399V416H400V415H402V416H407V415H408V416H414V415H415V416H418V415H419V416H423V415H424V416H426V414H427V416H430V415H431V416H433V415H434V416H448V415H449V416H452V415H454V416H458V415H459V416H461V415H462V416H463V415H464V416H466V415H467V416H480V415H481V416H493V415H495V416H498V415H500V416H509V415H510V416H511V415H512V416H519V415H522V416H533V415H534V416H540V415H541V416H542V415H543V416H545V415H547V416H548V415H549V416H551V415H552V416H553V414H554V415H558V416H560V415H561V416H571V415H572V416H574V415H575V416H579V415H580V416H583V415H584V416H585V415H586V416H587V415H588V416H595V415H596V416H599V415H601V414H602V416H605V415H606V416H607V415H608V416H609V415H610V416H611V415H612V414H613V416H614V415H615V416H618V415H619V416H623V415H624V416H627V415H629V416H632V415H633V416H635V415H636V416H640V415H641V416H642V415H643V416H655V415H656V416H667V415H668V416H672V415H674V416H681V415H682V416H683V415H684V416H696V414H697V416H698V415H699V416H703V415H704V416H705V415H706V416H712V415H713V416H718V415H719V416H725V415H726V416H733V414H734V416H741V415H742V416H752V415H753V416H755V415H756V416H758V415H759V416H769V415H770V416H774V415H775V416H780V415H781V416H784V415H785V416H787V415H788V416H800V415H801V416H810V415H811V416H815V415H816V416H818V415H819V416H825V415H826V416H837V415H838V416H841V415H842V416H850V415H851V416H855V415H856V416H857V415H859V416H873V415H874V416H875V415H878V416H879V415H880V416H881V415H883V416H885V415H886V416H890V415H891V416H892V415H893V416H900V415H902V416H907V415H908V416H909V415H910V416H912V415H913V416H914V414H915V416H916V415H920V414H921V416H922V414H924V413H925V416H926V415H927V416H928V415H929V416H930V414H931V416H933V415H934V416H947V415H948V416H951V415H952V416H964V415H965V414H966V413H967V415H970V416H974V414H975V416H978V415H979V416H980V415H982V416H988V415H989V416H993V415H994V416H1003V415H1004V416H1007V415H1008V416H1018V415H1019V416H1020V415H1021V416H1027V415H1028V416H1043V415H1044V416H1046V415H1047V416H1049V415H1050V416H1051V415H1052V416H1055V415H1056V416H1059V415H1060V416H1070V415H1071V416H1078V415H1079V416H1082V415H1085V416H1088V415H1089V416H1093V415H1094V416H1095V415H1096V416H1101V415H1103V416H1112V415H1113V416H1117V415H1118V416H1120V415H1121V416H1123V415H1125V416H1128V415H1130V416H1136V415H1137V416H1143V415H1144V416H1145V415H1146V416H1147V415H1148V416H1149V415H1150V416H1160V415H1162V416H1163V415H1164V416H1169V415H1170V416H1173V415H1174V416H1175V415H1176V416H1179V415H1180V416H1183V415H1184V416H1186V415H1187V416H1188V415H1191V416H1195V415H1196V416H1205V415H1206V416H1208V415H1209V416H1210V415H1211V416H1212V415H1213V421H1212V420H1211V421H1210V420H1209V421H1208V420H1206V421H1204V420H1189V421H1188V420H1187V421H1186V420H1176V421H1175V420H1172V421H1171V420H1168V421H1167V420H1146V422H1145V420H1144V421H1143V420H1122V421H1121V420H1112V421H1110V420H1102V421H1101V420H1084V421H1083V420H1079V421H1078V420H1064V421H1062V420H1059V421H1058V420H1055V422H1054V421H1052V420H1043V421H1041V420H1036V421H1035V420H1033V422H1032V420H1025V421H1024V420H1021V421H1020V420H1013V421H1011V420H1008V421H1006V420H1001V421H1000V420H999V421H998V420H997V421H996V420H992V421H991V420H987V421H985V420H982V421H981V420H973V421H972V420H969V421H968V420H967V423H966V420H950V421H949V420H948V421H947V420H944V421H943V420H940V421H938V420H933V421H932V420H930V423H929V420H928V421H927V420H925V423H924V421H923V422H922V421H920V422H919V420H916V421H914V420H913V421H912V420H904V422H903V420H902V421H901V420H898V421H897V420H892V421H891V420H889V421H888V420H886V421H885V420H883V421H882V420H881V421H879V420H878V421H877V420H874V421H873V420H870V422H869V420H868V421H866V420H865V421H863V420H859V421H858V420H848V421H847V420H841V421H840V420H838V421H837V420H825V421H824V420H816V421H815V420H814V421H813V420H811V421H810V420H800V421H799V420H796V421H795V420H789V421H788V420H776V421H775V420H773V421H772V420H765V421H764V420H758V421H757V420H755V421H753V420H734V421H733V420H725V421H724V420H716V421H715V420H705V421H704V420H702V421H700V420H699V421H698V420H694V421H693V420H678V421H677V420H673V421H672V420H665V421H664V420H660V421H658V420H654V421H653V420H652V421H651V420H649V421H648V420H641V421H640V420H639V421H638V420H635V421H634V420H633V421H632V420H624V421H623V420H621V421H620V420H618V421H617V420H615V421H614V420H609V421H608V420H600V421H599V420H585V421H584V420H577V421H576V420H572V421H571V420H569V422H568V420H560V421H559V420H555V421H554V422H553V421H551V420H550V421H549V420H542V421H541V420H527V421H526V420H525V421H524V420H517V421H516V420H509V421H508V420H500V421H499V420H492V421H491V420H485V421H484V420H475V421H474V420H471V421H470V420H467V421H466V420H452V421H450V420H432V421H431V420H429V421H428V420H422V422H421V420H418V421H417V420H411V421H409V420H408V421H407V420H385V421H384V420H382V421H381V420H376V421H373V420H372V421H370V420H368V421H366V420H351V421H350V420H345V421H344V420H340V421H339V420H330V421H329V420H328V421H327V420H325V421H324V420H318V421H317V420H306V421H305V420H288V421H287V420H286V421H285V420H284V421H283V420H263V421H262V420H261V421H260V420H257V421H256V420H254V421H253V420H250V421H248V420H245V421H244V420H238V421H237V420H224V421H223V420H213V421H212V420H207V421H206V420H203V421H201V420H185V421H183V420H175V421H174V420H171V421H169V420H159V421H158V420H153V421H152V420H151V421H150V420H149V421H148V420H141V421H140V420H134V421H133V420H123V421H121V420H118V422H117V421H116V420H112V421H111V420H104V421H103V420H95V421H93V420H88Z"/><path d="M88 445H89V446H90V445H91V446H94V445H95V446H98V445H101V446H102V445H105V446H109V445H110V446H115V445H116V446H118V445H119V446H120V445H122V446H131V445H133V446H137V445H142V446H145V445H148V446H154V445H155V446H158V445H160V446H164V445H168V446H169V445H170V446H171V445H172V444H173V446H176V445H177V446H178V445H179V446H183V445H184V446H185V445H186V446H187V445H188V446H190V445H191V446H192V445H193V446H195V445H196V446H198V445H199V446H208V445H209V446H210V445H211V446H214V444H215V445H217V446H218V445H220V446H221V445H222V446H224V445H225V446H234V444H235V445H237V446H239V445H240V446H243V445H244V446H245V445H247V446H249V445H252V446H253V445H254V446H255V445H256V446H262V445H264V446H266V445H268V446H273V445H274V446H277V445H279V446H280V445H281V444H282V446H287V444H288V446H290V445H291V446H292V445H295V446H304V445H305V446H307V445H308V446H309V445H310V446H312V445H314V446H323V445H324V446H328V445H331V446H336V445H337V446H338V445H339V446H342V444H343V446H357V445H359V446H360V445H363V446H366V445H369V446H378V444H379V446H380V444H381V445H382V446H384V445H387V446H392V445H394V446H400V444H401V446H403V445H405V446H413V445H414V446H418V445H419V446H423V445H424V446H425V445H426V446H428V445H429V446H430V445H431V446H435V445H437V446H440V445H441V446H445V445H446V446H447V445H448V446H449V445H451V446H454V445H455V446H460V445H462V446H464V445H465V446H470V445H471V446H473V445H476V446H480V445H481V446H482V445H483V446H486V445H489V446H493V445H494V446H495V445H496V446H503V445H504V446H506V445H507V446H508V445H510V446H511V445H514V446H515V445H516V446H521V445H522V446H526V445H527V446H528V445H529V446H542V445H543V446H548V445H549V446H551V445H553V444H555V446H556V445H558V446H561V445H562V446H565V445H566V446H573V445H575V446H576V445H577V446H579V445H581V446H582V445H584V446H587V445H588V446H589V445H591V446H592V445H593V446H594V445H595V446H600V445H601V446H602V445H603V446H609V445H610V446H618V445H619V446H622V445H623V446H624V445H626V446H634V445H635V446H646V445H647V446H648V445H649V446H650V445H651V446H659V445H662V446H677V445H678V446H680V445H681V446H682V445H684V446H685V445H686V446H689V445H690V446H698V445H700V446H701V445H702V446H708V445H709V446H710V445H712V446H713V445H714V446H718V445H719V446H724V445H725V446H728V445H730V446H735V445H737V446H741V445H743V446H747V445H748V446H752V444H753V445H754V446H755V445H756V446H758V445H761V446H763V445H764V446H767V444H768V445H770V446H771V445H774V446H778V445H779V446H780V445H781V446H787V445H789V446H790V445H792V446H793V445H794V446H795V445H796V446H797V445H798V446H799V445H800V446H801V444H802V446H804V445H805V446H811V445H812V446H813V445H815V446H816V445H819V446H820V445H822V446H827V445H829V446H831V445H832V446H835V445H836V446H842V445H843V446H850V445H851V446H856V445H858V446H867V445H868V446H870V445H872V446H876V445H877V446H882V445H883V446H887V445H888V446H889V445H891V446H893V445H894V446H896V445H897V446H899V445H901V446H902V445H905V446H907V445H908V446H913V445H914V446H917V445H918V446H925V444H926V446H927V445H928V446H931V445H933V446H936V445H937V446H938V445H939V446H940V444H941V446H945V445H946V446H948V445H950V446H953V445H954V446H957V445H958V446H961V445H962V446H965V445H968V446H969V445H971V446H972V445H973V446H979V445H980V446H981V445H983V446H985V445H986V446H987V445H988V446H998V445H1000V446H1002V445H1003V446H1004V445H1005V446H1008V445H1012V446H1013V445H1014V446H1021V445H1022V446H1025V445H1026V446H1029V445H1030V446H1032V445H1033V446H1041V445H1042V446H1045V445H1050V446H1054V445H1055V446H1056V445H1058V446H1059V445H1061V446H1062V445H1063V446H1068V445H1069V446H1071V445H1073V446H1075V445H1076V446H1077V445H1078V446H1083V445H1084V446H1086V445H1087V446H1089V445H1090V446H1092V445H1094V446H1099V445H1100V446H1104V445H1106V446H1107V445H1109V446H1110V445H1111V446H1113V445H1115V446H1116V445H1117V446H1118V445H1119V446H1120V445H1121V446H1123V445H1125V446H1126V445H1127V446H1129V445H1130V446H1132V445H1133V446H1134V445H1135V446H1136V445H1137V446H1138V445H1139V446H1148V445H1149V446H1151V445H1153V446H1156V445H1157V446H1161V445H1163V446H1165V445H1167V446H1168V445H1170V446H1173V445H1174V446H1175V445H1176V446H1183V445H1185V446H1187V445H1188V446H1190V445H1191V446H1195V445H1197V446H1200V445H1201V446H1209V445H1210V446H1211V445H1213V450H1201V449H1200V450H1194V449H1193V450H1191V449H1190V450H1186V449H1185V450H1166V449H1165V450H1163V449H1161V450H1153V449H1150V450H1149V449H1148V450H1144V451H1143V450H1140V449H1139V450H1124V449H1123V450H1122V449H1121V450H1117V451H1116V450H1113V449H1112V450H1110V449H1109V450H1106V449H1105V450H1086V449H1084V450H1078V449H1077V450H1075V449H1074V450H1055V449H1054V450H1034V449H1033V450H1032V449H1031V450H1029V449H1028V450H1018V449H1017V450H1014V449H1013V450H1011V449H1010V450H1005V451H1004V450H1003V451H1002V450H1000V451H999V450H986V451H985V450H980V449H979V450H955V449H954V450H950V449H949V451H948V449H947V450H943V451H942V450H932V451H931V449H929V450H922V449H921V450H917V449H916V450H914V449H913V450H904V449H903V450H902V449H901V450H888V449H887V450H886V451H885V450H863V449H862V450H846V451H845V450H827V449H826V450H819V449H818V450H808V449H806V450H794V449H793V450H792V449H791V450H790V449H789V450H771V449H769V450H761V449H760V450H759V449H758V450H752V449H750V450H739V449H738V450H733V449H731V450H725V449H724V450H716V449H714V451H713V450H711V449H709V450H705V449H704V450H702V449H701V450H698V451H697V450H677V449H675V450H673V449H671V450H655V449H654V450H644V449H643V450H636V449H635V450H634V449H633V451H632V450H630V449H629V450H626V451H625V450H621V449H619V451H618V450H617V449H616V450H615V451H614V450H611V449H609V450H597V449H596V450H595V451H594V450H590V449H589V450H583V451H582V449H581V450H580V449H579V450H577V449H576V450H569V449H568V450H559V451H558V450H553V449H552V450H551V449H550V450H541V451H540V450H536V451H535V449H534V450H525V451H524V450H517V449H515V451H514V449H513V450H504V449H503V450H498V449H497V450H491V449H490V450H489V451H488V450H484V449H483V450H480V449H479V450H478V449H477V450H474V449H473V451H472V450H468V451H467V450H459V449H458V450H448V449H446V450H445V449H444V450H419V449H418V450H409V449H408V450H406V451H405V450H404V449H402V450H382V449H381V450H380V449H379V450H364V449H363V450H359V449H358V450H357V449H356V450H349V449H348V450H343V451H342V450H341V449H340V451H339V449H338V450H336V449H334V450H322V449H321V450H320V449H319V450H303V451H302V449H300V450H284V449H283V450H282V449H281V450H269V449H268V450H257V449H254V450H249V449H248V450H240V449H239V450H234V449H233V450H231V449H230V450H228V449H227V450H226V449H225V450H224V449H221V450H216V451H215V455H214V450H213V451H211V450H210V451H209V450H208V451H207V450H203V449H202V450H199V449H197V450H195V449H194V450H187V451H186V450H185V449H184V450H182V449H181V450H175V449H174V450H173V449H171V450H170V451H169V450H160V449H159V450H152V449H151V450H147V449H146V450H144V451H143V450H142V451H141V449H140V450H136V449H134V450H127V449H126V450H117V449H116V450H114V449H113V450H108V451H107V450H106V449H105V450H89V449H88Z"/><path d="M88 476H89V477H90V476H95V477H96V476H99V475H100V476H104V477H105V476H107V477H108V476H109V477H110V476H112V477H113V476H114V477H115V476H117V477H118V476H120V477H121V476H125V477H127V476H135V477H136V476H137V477H138V476H139V477H142V476H144V477H145V476H155V477H157V476H159V477H161V476H165V475H166V476H167V477H169V476H170V477H171V476H176V477H177V476H178V477H181V476H187V477H188V476H189V477H190V476H192V477H193V476H197V477H199V476H205V477H206V476H209V477H210V475H211V476H212V477H213V476H214V477H216V476H221V477H222V476H225V477H227V476H228V477H231V476H232V477H233V476H234V477H235V476H240V477H241V476H243V477H244V476H247V477H249V476H250V477H251V476H252V477H253V476H257V475H258V476H259V477H260V476H261V477H262V476H264V475H265V476H268V477H269V476H271V477H272V476H273V477H274V476H276V477H280V476H281V477H284V476H285V475H286V476H287V477H289V476H293V477H294V475H295V476H299V477H301V476H304V477H306V476H307V477H309V476H314V477H315V476H323V477H324V476H333V477H334V475H335V477H337V476H338V477H344V476H345V477H347V476H348V477H351V476H353V477H354V476H356V477H357V476H358V477H362V476H364V477H365V476H371V477H373V476H375V477H377V476H379V477H381V476H382V477H383V476H384V477H385V476H386V477H387V476H388V477H389V476H392V477H393V476H395V477H397V476H398V477H399V476H400V477H401V476H402V475H403V476H404V475H406V477H408V476H413V477H414V476H416V477H417V476H423V477H425V476H433V477H434V476H437V477H438V476H443V477H444V475H445V476H446V477H447V476H449V475H450V476H452V477H453V476H454V477H455V476H457V477H458V476H462V477H463V476H467V477H468V476H470V477H471V475H472V476H475V477H476V476H477V477H478V476H479V477H481V476H494V477H495V476H499V477H501V476H502V477H503V476H507V477H508V476H511V475H512V476H519V477H523V476H527V477H529V476H537V475H538V476H550V477H551V476H562V475H563V477H564V476H571V477H572V476H575V477H576V476H577V477H578V476H579V477H580V476H584V477H586V476H603V477H605V476H607V477H610V476H611V475H612V476H617V477H618V476H621V477H622V476H624V477H625V476H633V477H634V476H635V477H637V476H639V477H640V475H641V476H642V477H643V476H644V477H645V476H646V475H647V476H655V477H656V476H660V477H661V476H662V477H664V476H675V477H677V476H679V477H681V476H683V477H684V476H685V477H686V476H690V477H691V476H694V477H697V476H700V477H701V476H707V477H710V476H722V477H724V476H731V477H732V476H733V477H734V476H735V477H736V476H741V477H742V476H746V477H749V476H750V477H751V476H754V475H755V477H756V476H757V477H758V476H764V477H765V476H778V477H779V476H781V477H782V476H784V477H785V476H788V477H789V476H791V477H792V476H801V477H802V476H803V477H805V476H820V477H821V476H830V477H832V476H838V477H839V475H840V476H846V477H847V476H852V475H853V476H854V477H856V476H858V477H860V476H862V477H863V476H864V475H865V476H871V477H872V476H880V477H881V475H882V476H884V477H886V476H890V477H894V476H895V477H896V476H899V477H900V476H906V477H907V476H908V477H910V476H911V477H912V476H914V477H915V476H918V477H921V476H922V477H923V476H931V477H934V476H937V477H938V476H942V475H943V477H944V476H945V477H947V476H951V477H952V476H954V477H956V476H962V477H963V476H964V477H965V476H966V477H967V476H971V477H972V476H974V477H975V476H994V477H996V476H997V477H998V476H999V477H1000V476H1004V477H1005V476H1006V477H1007V475H1008V476H1009V477H1010V476H1013V477H1014V476H1015V477H1016V476H1017V477H1018V476H1021V477H1024V476H1033V477H1034V476H1035V477H1037V476H1044V477H1045V476H1049V477H1050V476H1054V477H1055V476H1058V477H1059V476H1067V477H1069V476H1072V477H1073V476H1074V477H1075V476H1078V477H1079V475H1080V476H1082V477H1083V476H1084V475H1085V476H1089V477H1091V476H1095V475H1096V476H1100V477H1101V475H1102V476H1105V477H1107V476H1111V477H1112V476H1116V477H1120V476H1127V475H1128V477H1130V476H1133V477H1134V476H1142V477H1143V476H1145V477H1146V476H1148V477H1149V476H1151V477H1152V476H1153V477H1154V476H1156V477H1157V476H1160V477H1161V476H1168V477H1169V476H1170V477H1171V476H1174V477H1175V476H1178V477H1179V476H1182V477H1183V476H1187V477H1188V476H1189V477H1190V476H1197V477H1198V476H1201V477H1202V476H1205V477H1206V476H1211V477H1213V480H1212V481H1211V480H1210V481H1209V480H1208V481H1205V480H1204V481H1200V480H1199V481H1198V480H1197V481H1193V480H1192V481H1191V480H1190V481H1189V480H1188V481H1187V480H1186V481H1185V480H1183V481H1179V480H1177V481H1175V480H1174V481H1173V480H1172V481H1171V480H1170V481H1161V480H1160V481H1159V480H1158V481H1153V482H1152V480H1150V481H1146V480H1145V481H1143V480H1142V481H1141V480H1140V481H1129V482H1128V481H1127V480H1126V481H1125V480H1124V481H1117V480H1116V481H1113V480H1111V481H1110V480H1108V481H1105V480H1103V481H1095V480H1094V481H1092V480H1089V481H1088V480H1087V481H1083V480H1082V481H1077V480H1076V481H1075V480H1073V481H1072V480H1070V481H1064V480H1063V481H1056V480H1054V481H1051V480H1049V481H1044V480H1043V481H1042V480H1039V481H1038V480H1037V481H1032V480H1029V482H1028V481H1026V480H1025V481H1024V480H1023V481H1021V480H1020V481H1016V480H1015V481H1012V480H1010V481H1009V480H1008V481H1005V480H1003V481H1002V480H1001V481H1000V480H999V481H998V480H996V481H994V480H993V481H991V480H990V481H989V480H988V481H984V480H983V481H975V480H974V482H973V481H972V480H971V481H962V480H961V481H956V480H955V481H943V480H942V481H941V480H939V481H935V480H934V481H933V480H932V481H931V480H929V481H928V480H927V481H926V480H924V481H921V480H919V481H914V482H913V481H912V480H911V481H907V480H906V481H902V480H901V481H900V480H899V481H894V480H893V481H890V480H889V481H886V480H883V481H882V480H881V481H880V480H879V481H877V480H874V481H869V480H868V481H867V480H865V481H864V480H863V481H862V480H860V481H854V480H853V481H852V480H850V481H848V482H847V480H846V481H838V480H837V481H829V480H827V481H825V480H822V481H821V480H820V481H819V480H818V481H815V480H814V481H813V480H812V481H807V482H806V481H798V480H797V481H794V480H792V481H789V480H788V481H783V480H782V481H780V480H779V481H768V480H767V482H766V481H761V480H759V481H749V480H747V481H741V480H739V482H738V480H737V481H733V480H732V481H731V480H730V481H725V480H724V481H719V480H718V481H714V480H713V481H712V480H711V481H705V480H704V481H703V482H702V481H698V480H697V481H695V480H694V481H693V482H692V480H690V481H689V480H688V481H686V480H685V481H677V482H676V480H675V481H673V480H672V481H668V480H667V481H666V480H665V481H661V480H659V481H657V480H656V481H653V482H652V481H650V482H649V481H645V480H644V482H643V481H642V480H640V481H635V480H633V481H630V480H629V481H626V482H625V481H621V480H619V481H618V480H617V482H616V481H615V480H614V481H606V480H605V481H597V480H596V481H593V480H592V481H591V480H589V481H588V480H587V481H586V480H585V481H579V480H578V481H575V480H574V481H573V480H572V481H571V480H570V481H568V480H566V481H565V480H564V481H560V480H555V481H554V480H553V481H551V480H546V481H545V480H544V481H538V480H537V481H536V482H535V480H534V481H533V480H532V481H529V480H528V481H524V480H523V481H521V480H520V481H519V480H518V481H516V480H515V481H512V480H511V481H510V480H509V481H506V480H505V481H502V480H501V481H499V480H497V481H493V480H491V482H490V481H484V482H483V480H482V481H477V480H474V481H472V480H471V481H469V480H468V482H467V481H463V480H462V481H460V482H459V480H458V481H457V480H456V481H453V482H452V480H450V481H445V480H444V481H443V480H442V481H440V482H439V480H435V481H434V480H432V481H431V480H430V481H422V480H421V481H419V480H418V481H417V480H416V481H412V480H411V481H408V482H407V481H405V483H404V481H403V482H402V480H400V481H393V482H392V481H389V482H388V481H387V480H386V481H383V480H382V481H380V480H378V481H373V480H372V481H364V480H363V481H362V480H360V481H358V480H355V481H353V480H352V481H347V480H346V481H344V480H343V481H328V480H326V481H324V480H323V481H321V480H320V481H318V480H316V481H315V480H314V481H313V480H311V481H306V480H305V481H298V480H294V482H293V481H292V480H291V481H290V480H289V481H287V480H286V481H284V480H282V481H273V480H272V481H271V480H270V481H267V480H266V481H260V480H258V481H253V480H252V481H248V480H247V481H244V480H243V481H232V482H231V481H227V480H226V481H224V482H223V481H218V480H217V481H213V480H212V481H209V480H208V481H205V480H203V481H201V480H200V481H197V480H193V481H184V480H183V481H181V480H179V481H177V480H175V481H173V480H172V481H169V480H168V481H167V480H165V481H161V480H160V481H159V480H157V481H155V480H154V481H150V480H149V481H146V480H145V481H141V480H140V481H139V482H138V481H137V480H136V481H133V480H131V481H130V482H129V481H128V480H127V481H123V480H120V481H118V480H117V482H116V481H115V480H114V481H113V480H112V481H110V480H108V481H102V480H101V481H98V480H97V481H93V480H92V481H89V482H88Z"/><path d="M88 507H99V506H100V507H107V506H108V507H112V506H113V507H114V506H115V507H118V506H119V507H125V506H126V507H127V506H128V507H131V506H132V507H137V506H139V507H148V506H149V507H164V506H165V507H167V506H168V507H171V505H172V506H173V507H174V506H175V507H176V505H177V507H178V504H179V507H180V506H181V507H185V506H186V507H201V506H202V507H207V506H208V507H209V506H211V507H213V506H214V507H220V506H221V507H229V506H230V507H232V506H233V507H234V506H235V507H236V506H237V507H238V506H241V507H250V506H252V507H253V506H254V507H259V506H260V507H261V506H262V507H285V506H286V507H302V506H303V507H307V506H308V507H309V506H310V507H311V506H312V507H314V506H315V507H316V506H317V507H335V505H336V507H337V506H338V505H339V507H340V506H341V507H344V506H345V507H349V506H350V507H362V506H363V507H365V506H366V507H367V506H368V507H379V506H380V507H381V506H382V507H387V506H389V507H391V506H392V507H399V505H400V507H402V506H403V507H407V506H408V505H409V506H410V507H412V506H413V507H416V506H419V507H420V506H421V507H422V506H423V507H424V506H425V507H429V505H430V506H431V507H435V506H436V507H441V506H443V507H445V506H447V507H454V506H455V507H466V506H467V507H472V506H473V507H475V506H476V507H477V506H478V507H479V506H480V507H482V506H483V507H487V506H488V507H490V506H491V507H500V506H504V507H509V506H510V507H515V506H516V507H528V506H530V507H535V506H536V507H537V506H538V507H541V506H542V507H547V506H549V507H579V506H581V507H592V506H593V507H598V506H600V507H605V506H606V507H613V506H614V507H617V506H618V507H620V506H621V507H623V506H624V507H635V506H636V507H637V506H638V507H644V506H645V507H646V506H647V507H652V506H653V507H657V506H658V507H659V506H660V507H665V506H666V507H668V506H671V507H674V506H675V507H689V506H690V507H695V506H696V507H708V506H709V507H735V506H737V507H743V506H744V507H766V506H767V507H772V506H773V507H777V506H778V507H779V506H780V507H791V506H792V507H793V506H794V507H795V506H797V507H799V506H800V507H802V506H803V507H804V506H805V507H808V506H809V507H810V506H812V507H813V506H814V507H818V506H819V507H822V506H823V507H826V506H827V507H829V506H831V507H835V506H837V507H839V506H842V507H843V506H845V507H865V506H867V507H868V506H869V507H871V506H873V507H874V506H875V507H878V506H879V507H884V506H885V507H890V506H891V507H894V506H895V507H897V506H899V507H901V506H903V507H905V506H906V507H917V506H919V507H921V506H924V507H961V506H962V507H969V506H970V507H988V506H990V507H992V506H993V507H997V506H998V507H1012V506H1013V507H1014V506H1015V507H1016V506H1019V507H1020V506H1021V507H1026V506H1027V507H1031V506H1032V507H1057V506H1058V507H1059V506H1060V507H1061V506H1062V507H1066V506H1067V507H1071V506H1072V507H1079V506H1082V507H1085V506H1086V507H1091V506H1094V507H1101V506H1102V507H1110V506H1111V507H1120V506H1121V507H1127V506H1128V507H1132V506H1133V507H1141V506H1142V507H1143V506H1144V507H1150V506H1151V507H1153V506H1154V507H1160V506H1161V507H1164V506H1165V507H1172V506H1173V507H1176V506H1177V507H1179V506H1180V507H1181V506H1182V507H1186V506H1188V507H1204V506H1205V507H1213V511H1211V510H1210V511H1208V510H1207V511H1203V510H1202V511H1200V510H1199V511H1193V512H1192V511H1188V510H1186V511H1180V510H1179V511H1175V510H1174V511H1171V510H1169V511H1162V512H1161V511H1157V510H1156V511H1145V510H1144V511H1142V510H1141V511H1131V510H1130V511H1126V510H1125V511H1117V512H1116V511H1105V512H1104V511H1088V510H1087V511H1074V512H1072V511H1054V512H1052V511H1049V510H1048V511H1043V510H1042V511H1015V510H1014V511H1002V512H1001V511H999V512H997V511H984V510H983V511H979V510H976V511H966V510H965V511H961V510H960V511H955V510H954V511H951V510H950V511H948V510H947V511H942V510H940V511H933V512H932V511H929V512H928V511H921V510H920V511H907V510H906V511H897V510H896V511H873V510H871V511H863V510H862V511H857V510H856V511H849V512H848V511H839V510H837V511H835V510H834V511H816V510H815V511H800V510H799V511H796V510H795V511H793V510H792V511H784V510H783V511H781V510H780V511H778V510H777V511H775V510H774V511H767V512H766V511H764V510H763V511H762V512H761V511H734V512H733V511H729V510H727V511H716V510H715V511H712V510H711V511H709V510H708V511H706V512H705V511H701V510H700V511H693V510H692V511H684V510H683V511H681V510H679V511H677V510H675V511H670V510H669V511H652V512H651V510H650V511H641V510H640V511H637V510H636V511H630V510H629V511H623V512H622V511H615V510H614V511H612V510H611V511H604V510H603V511H595V510H594V511H592V510H591V511H589V512H588V510H587V511H586V510H585V511H580V510H578V511H572V510H571V511H567V510H566V511H562V510H561V511H557V510H555V511H547V510H546V511H532V510H530V511H527V510H526V511H525V510H524V511H521V510H520V511H518V510H515V511H503V510H502V511H497V510H496V511H486V510H485V511H477V510H476V511H468V510H467V511H464V512H463V511H455V510H454V511H450V510H449V511H448V510H447V511H442V510H441V511H438V512H437V511H426V510H425V512H424V511H419V510H418V511H416V510H415V511H412V510H411V511H409V512H408V511H387V510H386V511H385V510H384V511H378V510H377V511H376V510H375V511H361V510H360V511H359V512H358V510H357V511H356V510H355V511H341V510H340V511H337V512H335V510H334V512H333V511H325V512H324V510H323V511H322V510H321V511H318V512H316V510H314V511H302V512H301V511H276V510H275V511H271V510H270V511H266V512H265V510H264V511H259V510H258V511H249V510H248V511H244V510H242V511H236V510H235V512H234V511H230V510H229V511H221V512H220V510H219V511H218V510H216V511H205V510H204V511H195V510H194V511H192V512H191V511H188V510H187V511H181V510H180V511H177V515H176V511H174V512H173V511H172V512H170V511H162V510H161V511H157V510H156V511H155V510H154V511H150V510H149V511H137V510H136V511H125V512H124V511H113V512H112V511H97V510H96V511H91V510H90V511H88Z"/><path d="M88 536H89V537H95V536H97V537H98V536H99V535H100V537H101V536H103V537H104V536H105V537H113V536H114V537H116V536H118V537H119V536H123V537H125V536H126V537H133V536H134V537H135V536H136V537H143V536H144V537H145V535H146V537H148V535H149V537H151V536H152V537H158V536H160V537H162V536H163V537H165V536H166V537H167V536H168V537H169V535H170V537H171V536H172V537H179V536H180V537H182V536H185V537H186V536H187V537H189V536H190V537H192V536H194V537H196V536H197V537H201V536H202V537H206V536H207V537H208V536H209V537H210V536H211V537H216V536H217V537H218V536H219V537H226V536H227V537H229V536H232V537H233V536H234V537H242V536H243V535H244V536H246V537H247V536H248V537H251V536H252V537H254V536H256V537H259V536H260V537H262V536H264V537H270V536H271V537H281V536H283V537H284V536H285V537H287V536H288V537H289V536H290V537H295V536H296V537H300V536H301V537H312V536H313V537H314V536H315V537H316V536H317V537H323V536H324V537H327V536H328V537H345V536H346V537H347V536H349V537H355V536H356V537H362V536H363V537H368V536H369V537H370V536H371V537H372V535H374V534H376V536H377V537H378V536H380V537H385V536H386V537H389V536H391V537H400V536H401V537H402V536H403V537H407V536H408V537H410V536H411V537H413V536H414V537H415V536H416V537H420V536H421V537H423V536H424V537H430V536H432V537H434V536H435V537H442V536H443V537H448V536H450V537H451V536H452V537H456V536H457V537H459V536H460V537H464V536H465V537H466V536H467V537H477V536H478V537H482V536H483V537H484V536H485V537H489V536H490V537H494V536H496V537H498V536H499V537H506V536H508V537H509V536H510V537H513V536H514V537H521V536H522V537H525V536H526V537H539V535H540V537H541V536H542V537H543V536H544V537H545V536H547V537H548V536H549V537H553V535H554V536H555V537H556V536H557V537H565V536H566V537H568V536H569V537H574V535H576V536H577V537H578V535H579V536H580V537H585V536H586V537H587V536H588V537H589V536H590V537H591V536H593V537H594V536H595V537H602V536H603V537H608V536H609V537H617V536H618V537H620V536H622V537H630V536H631V537H637V535H638V536H639V537H645V536H646V537H651V535H652V536H654V537H658V536H659V537H661V536H662V537H664V536H665V537H666V536H667V537H677V535H678V537H679V536H681V537H686V536H687V537H689V536H690V537H693V536H694V537H696V536H699V537H700V536H701V537H706V536H708V537H712V536H714V537H722V536H723V537H728V536H729V537H730V536H731V537H737V536H738V537H740V536H741V537H744V536H746V537H747V536H748V537H750V536H751V532H752V536H753V535H754V537H755V535H756V536H758V537H759V536H760V537H761V536H762V537H765V536H767V537H779V536H780V537H781V536H784V537H789V536H790V537H792V536H793V537H797V536H798V537H801V536H802V537H804V536H805V537H811V536H814V537H815V536H816V537H818V536H819V537H820V536H821V537H822V536H823V537H825V536H827V537H828V536H829V537H830V536H832V537H840V536H841V537H848V536H849V537H854V536H855V537H859V536H861V537H867V536H869V537H870V536H872V537H876V535H877V537H881V536H882V537H883V536H884V537H891V536H892V537H898V536H899V537H909V536H911V537H912V536H913V537H918V536H919V537H920V536H921V537H927V536H928V537H932V536H934V537H936V536H938V537H942V536H943V537H946V536H947V537H953V536H955V537H956V536H957V537H960V536H961V537H969V536H970V537H972V536H973V537H975V536H976V537H979V536H980V537H983V536H985V537H986V536H988V537H991V536H993V537H994V536H996V537H1003V536H1004V537H1008V536H1009V537H1014V535H1015V536H1016V537H1019V536H1021V537H1028V536H1029V537H1033V536H1034V537H1037V536H1039V537H1041V536H1042V537H1044V536H1045V537H1063V536H1065V537H1066V536H1068V537H1071V536H1073V537H1074V536H1075V537H1078V536H1080V537H1088V536H1090V537H1095V535H1096V536H1097V537H1103V536H1105V537H1107V536H1108V537H1130V536H1131V537H1134V535H1135V537H1136V536H1138V535H1139V534H1140V536H1143V537H1149V536H1151V537H1165V536H1166V537H1176V536H1178V537H1185V536H1187V537H1189V536H1190V537H1192V535H1193V537H1196V536H1198V537H1201V536H1202V537H1203V536H1204V537H1212V536H1213V541H1207V540H1206V541H1204V540H1203V541H1184V540H1183V541H1182V540H1181V541H1167V540H1166V541H1157V540H1154V541H1149V540H1148V541H1143V542H1142V541H1139V543H1138V540H1137V543H1136V541H1134V540H1133V541H1131V540H1128V541H1120V540H1119V541H1117V540H1116V541H1114V540H1113V541H1108V540H1107V541H1104V540H1103V541H1099V540H1098V541H1094V540H1092V541H1083V542H1082V541H1079V540H1078V541H1076V540H1074V541H1073V540H1072V541H1070V542H1069V541H1068V540H1067V541H1064V540H1062V541H1058V540H1057V541H1053V542H1052V541H1045V540H1044V542H1043V541H1041V540H1040V541H1038V540H1037V541H1035V542H1034V541H1033V540H1030V541H1023V540H1021V541H1012V540H1010V541H1009V542H1008V541H1007V540H1006V541H1004V540H1003V541H1002V540H1001V541H989V540H988V541H985V540H983V541H979V540H977V541H974V540H973V541H971V540H970V541H968V540H967V542H966V541H964V540H962V541H961V540H960V541H948V542H947V541H933V540H932V541H931V540H930V541H926V540H924V541H921V540H920V541H916V540H914V541H906V540H905V541H895V540H893V541H886V540H884V541H881V540H880V541H879V540H878V541H877V540H876V541H869V540H868V541H867V540H866V541H854V540H853V541H851V540H850V541H842V540H841V541H840V540H839V541H838V542H837V540H836V541H832V540H831V541H828V540H827V542H826V541H823V540H822V541H820V540H819V541H817V540H816V541H815V540H814V541H810V540H808V541H798V540H796V541H795V542H794V541H790V542H788V541H787V540H786V541H784V540H783V541H780V540H779V541H774V540H771V541H770V540H769V541H767V540H766V541H760V540H758V541H754V543H752V546H751V541H748V542H747V541H741V540H740V541H737V540H735V541H731V540H730V541H723V540H721V541H715V540H712V541H708V542H707V541H704V540H703V541H700V540H699V541H694V540H693V541H690V540H689V542H688V541H676V540H675V541H672V540H669V541H667V540H666V541H660V540H659V541H640V540H638V541H632V540H631V541H627V540H626V541H621V542H620V541H619V540H617V541H616V542H615V541H611V540H610V541H607V540H606V541H604V540H603V541H596V540H595V541H591V542H590V541H584V540H583V541H580V540H579V541H577V542H575V541H573V540H572V541H571V542H570V540H569V541H567V540H566V541H565V540H564V541H552V540H551V541H550V540H549V541H536V540H534V541H530V540H529V541H523V540H522V541H504V540H503V541H502V540H501V541H499V540H498V541H496V540H495V541H493V540H492V541H489V540H488V541H483V540H481V541H479V540H478V541H476V540H475V541H467V540H466V541H443V540H442V541H435V542H434V541H430V540H429V541H428V540H427V541H422V540H421V541H398V540H397V541H395V542H394V540H392V541H388V540H387V541H384V542H383V541H381V542H380V541H379V540H378V541H375V543H373V541H366V540H365V541H364V540H363V541H362V540H361V541H355V542H353V541H350V540H349V541H341V540H339V541H337V540H335V541H322V540H321V541H318V540H317V541H314V540H313V541H310V540H309V541H305V542H304V541H300V540H299V541H295V540H293V541H289V540H288V541H286V540H285V541H276V542H275V541H267V540H265V541H260V542H259V541H258V540H256V541H252V540H250V541H247V540H246V541H240V540H239V541H230V540H229V541H226V540H225V541H224V540H223V541H219V540H218V541H216V540H215V541H213V540H212V541H207V540H206V541H204V540H203V541H195V540H194V541H186V540H185V541H161V540H160V542H159V541H150V540H149V541H144V540H143V541H136V540H135V541H134V540H133V541H123V540H122V541H115V540H114V541H104V540H103V541H99V540H98V541H97V540H96V541H95V540H94V541H91V540H90V541H88Z"/><path d="M88 567H90V568H91V567H93V568H94V567H95V568H98V567H99V568H100V567H101V568H102V567H103V568H104V567H109V568H110V567H113V568H114V567H115V568H116V567H117V568H118V567H122V568H123V567H128V566H129V568H130V567H139V568H140V567H145V568H146V567H149V568H153V567H154V568H155V567H156V568H159V567H161V568H164V567H171V568H172V567H175V566H176V568H177V567H178V568H179V567H182V568H183V567H184V568H186V567H190V568H191V567H192V568H193V567H194V568H195V567H198V568H199V567H200V568H201V567H206V568H208V567H209V568H210V567H212V568H213V567H219V568H220V567H226V568H231V567H232V568H233V567H234V568H237V567H240V568H241V567H245V568H246V567H248V568H250V567H251V568H252V567H253V568H254V567H255V568H257V567H262V568H263V567H266V568H268V567H269V568H270V567H276V568H281V567H284V568H286V567H287V568H288V567H291V568H293V567H295V568H296V567H304V568H305V567H310V568H311V567H312V568H313V567H314V568H315V566H316V568H317V567H319V568H320V567H324V568H325V567H326V568H327V567H329V568H330V567H333V568H334V567H335V568H336V567H338V568H340V567H343V568H345V567H349V568H350V567H351V568H352V567H353V568H355V567H357V568H358V567H362V568H363V567H369V568H371V567H373V568H375V567H377V566H378V568H380V567H382V568H384V567H388V568H390V567H391V568H392V567H397V568H399V567H400V568H401V567H403V568H404V567H407V568H408V567H410V568H411V567H412V568H414V567H416V568H418V567H419V568H421V567H424V568H426V567H430V568H432V567H434V568H439V567H441V568H443V567H450V568H451V567H453V568H454V567H455V568H456V566H458V567H460V568H461V567H462V568H463V567H465V568H466V567H470V568H471V567H473V568H474V567H478V568H481V567H482V568H483V567H489V568H491V567H494V568H495V567H497V568H498V567H499V568H501V567H506V568H507V567H509V568H510V567H511V568H513V567H514V568H515V567H516V568H518V567H519V568H520V567H521V568H522V567H523V568H524V567H540V568H541V567H546V568H548V567H550V568H552V567H553V568H554V567H555V568H557V567H562V568H563V567H567V568H570V567H572V568H573V567H574V568H575V567H577V568H578V567H580V568H582V567H583V568H584V567H585V568H587V567H589V568H590V567H594V568H596V567H599V568H600V567H601V566H602V567H607V568H612V567H619V568H621V567H626V568H628V567H632V568H633V567H643V568H644V567H649V568H650V567H653V568H654V567H657V568H659V567H661V568H664V567H669V568H671V567H673V568H674V567H680V568H681V567H686V568H687V567H689V568H690V567H693V568H694V567H698V568H699V567H704V568H708V567H710V568H716V567H717V566H718V568H720V567H721V568H725V567H727V568H728V567H729V566H730V567H731V568H732V567H734V568H735V567H736V568H737V566H738V568H741V567H743V568H745V567H748V568H750V567H754V568H755V567H756V568H757V567H758V568H759V566H760V567H768V568H770V567H774V568H775V567H779V568H780V567H786V568H787V567H794V568H795V567H796V568H797V567H799V568H800V567H801V568H802V567H803V568H807V567H809V568H811V567H813V568H814V567H815V568H822V567H824V568H825V567H827V568H828V567H833V568H834V567H835V566H836V567H839V568H840V566H841V568H842V567H848V568H849V567H852V566H853V567H857V568H858V567H859V568H860V567H861V568H862V567H868V568H869V567H876V568H877V567H878V568H879V566H880V568H882V567H883V568H884V567H886V568H888V567H889V568H891V567H894V568H895V567H896V568H898V567H900V568H901V567H903V566H904V567H905V568H910V567H911V568H912V567H914V568H918V567H921V568H923V567H935V568H936V567H940V566H941V567H943V568H944V567H945V568H946V567H948V568H950V567H951V568H952V567H955V568H957V567H964V568H966V566H967V567H969V568H970V567H971V568H972V567H973V568H974V567H975V568H976V567H978V568H979V567H981V568H982V567H983V568H985V567H986V566H987V567H988V568H990V567H992V566H993V568H994V567H995V568H998V567H1000V568H1001V567H1003V568H1004V566H1006V567H1008V568H1012V567H1015V568H1016V567H1018V568H1020V567H1021V568H1022V567H1024V568H1026V567H1027V568H1028V567H1030V568H1031V567H1032V568H1033V567H1035V568H1036V567H1037V566H1038V568H1039V567H1041V568H1042V567H1045V568H1046V566H1047V567H1054V568H1056V567H1058V568H1059V567H1061V568H1063V567H1065V568H1066V567H1070V568H1072V567H1076V568H1077V567H1085V568H1089V566H1090V567H1092V568H1093V567H1094V568H1096V567H1098V568H1099V567H1100V568H1102V567H1103V568H1104V567H1105V568H1111V567H1116V566H1119V567H1123V568H1124V567H1125V568H1126V567H1127V568H1128V567H1129V568H1130V567H1131V568H1133V567H1136V568H1137V567H1140V566H1141V568H1142V567H1143V568H1146V567H1147V568H1149V567H1152V566H1153V567H1154V568H1155V567H1156V568H1157V567H1158V568H1159V567H1160V568H1164V567H1165V568H1166V567H1167V568H1170V567H1175V566H1176V567H1177V566H1178V568H1179V567H1181V568H1185V567H1186V568H1187V567H1188V568H1189V567H1190V568H1192V567H1193V568H1196V567H1202V566H1203V567H1207V568H1211V567H1213V572H1212V571H1210V572H1209V571H1206V572H1204V573H1203V571H1202V572H1200V571H1199V572H1198V571H1197V572H1196V571H1195V572H1192V571H1190V572H1187V571H1184V572H1181V571H1180V573H1179V572H1177V571H1176V572H1175V571H1174V572H1169V571H1168V572H1166V571H1165V572H1161V571H1159V572H1157V571H1155V572H1146V571H1144V572H1143V571H1141V572H1139V571H1138V572H1137V571H1136V572H1133V571H1132V572H1131V571H1130V572H1128V571H1127V572H1126V571H1123V572H1121V571H1120V572H1119V571H1118V572H1117V573H1116V572H1110V571H1108V572H1103V571H1101V572H1100V571H1099V572H1097V571H1096V572H1095V571H1094V572H1093V571H1091V572H1090V573H1089V572H1088V571H1086V572H1085V571H1084V572H1082V571H1081V572H1077V571H1076V572H1068V571H1067V572H1064V571H1063V572H1059V571H1056V572H1053V571H1052V572H1051V571H1049V572H1046V571H1045V572H1043V571H1042V572H1040V571H1037V572H1035V571H1034V572H1033V571H1032V572H1031V571H1028V572H1022V571H1021V572H1020V571H1019V572H1017V571H1015V572H1010V571H1007V572H1003V571H1002V572H999V571H997V572H994V571H992V572H990V571H989V572H988V571H987V572H984V573H983V571H982V572H978V571H975V572H972V571H970V572H969V571H968V572H958V571H957V572H955V571H954V572H949V571H948V572H946V571H944V572H943V571H942V572H936V571H934V572H933V571H932V572H927V571H926V572H925V571H923V572H921V573H920V572H915V571H914V572H908V571H906V572H905V571H904V572H903V571H901V572H899V571H897V572H895V571H894V572H893V571H890V572H888V571H887V572H886V571H883V572H882V571H881V572H878V573H877V571H876V572H873V571H872V572H871V571H870V572H869V571H868V572H867V571H866V572H860V571H859V572H849V571H848V572H847V571H844V572H841V571H840V572H839V571H838V572H837V571H834V572H832V571H831V572H830V571H829V572H826V571H823V572H820V571H819V572H818V571H817V572H816V571H815V572H814V571H813V572H811V573H810V572H808V571H805V573H804V572H803V571H801V572H790V571H785V572H784V571H780V572H779V571H777V572H773V571H772V572H771V571H770V572H769V573H768V571H767V572H766V571H762V572H755V571H754V572H745V571H744V572H741V571H740V572H739V571H738V572H737V571H736V572H733V571H732V572H731V571H728V572H725V571H724V572H723V571H722V572H721V571H720V572H718V571H716V572H712V571H709V572H708V571H707V572H706V571H705V572H704V573H703V572H702V571H699V572H696V571H689V572H687V571H684V573H683V571H682V572H681V571H680V572H673V573H672V572H669V571H667V572H663V571H659V572H658V571H657V572H656V571H655V572H649V571H645V572H644V573H643V572H637V571H635V572H629V571H625V572H624V571H622V572H619V571H618V573H617V571H616V572H615V573H614V572H613V573H612V572H611V571H610V572H607V571H605V572H603V571H601V572H600V571H599V572H595V571H593V572H592V571H590V572H585V571H584V572H582V571H580V572H577V571H576V572H574V571H571V572H570V571H569V572H568V571H567V572H566V571H564V572H562V573H561V572H560V571H558V572H557V571H556V572H555V571H554V572H551V571H550V572H546V571H544V572H542V571H541V572H539V571H538V572H531V571H529V572H528V571H527V572H523V571H521V572H520V571H519V572H518V571H517V572H515V571H514V572H508V571H505V572H504V571H503V572H502V571H501V572H500V571H499V572H498V571H497V572H494V571H491V572H489V571H487V572H486V571H485V572H484V571H483V572H481V571H479V572H478V571H477V572H475V571H474V572H472V571H471V572H466V571H465V572H462V571H461V572H460V571H458V572H457V573H456V572H454V571H452V572H451V571H450V572H446V571H440V572H437V571H435V572H434V571H432V572H431V571H429V572H424V571H423V572H419V571H415V572H409V571H405V572H404V571H400V572H394V571H388V572H387V571H383V572H382V571H381V572H380V571H378V572H376V571H373V572H371V573H370V572H365V571H363V572H362V571H360V572H358V571H357V572H356V571H355V572H349V571H345V572H343V571H340V573H339V572H333V571H332V572H330V571H329V572H328V571H326V572H325V571H324V572H323V571H322V572H320V571H318V572H315V571H313V572H310V571H308V572H307V571H306V572H305V571H304V572H302V571H301V572H299V571H298V572H295V571H294V572H293V571H292V572H291V571H288V572H284V571H281V572H277V571H276V572H274V571H272V572H271V571H269V572H267V573H266V571H265V572H261V571H260V572H259V571H256V572H246V571H244V572H241V571H239V572H238V573H236V571H235V572H234V571H233V572H229V571H227V572H226V571H224V572H223V571H222V572H220V571H219V572H218V571H217V572H214V571H213V572H211V571H209V572H208V571H207V572H206V571H204V572H201V571H200V572H199V571H196V572H195V571H193V572H191V571H190V572H187V571H185V572H181V571H179V572H178V571H176V572H174V571H172V572H169V571H168V572H165V571H163V572H161V571H160V572H154V571H147V572H144V571H143V573H142V571H140V572H139V571H138V572H137V571H136V572H134V571H132V572H131V571H129V572H128V573H127V571H126V572H125V571H123V572H120V571H119V572H116V571H114V572H111V571H108V572H107V571H105V572H104V571H103V572H102V571H100V572H99V571H97V572H96V571H95V572H93V571H90V572H88Z"/><path d="M88 598H92V597H93V598H99V597H100V598H104V597H105V598H107V597H109V598H111V597H114V598H116V597H119V598H125V597H131V598H133V597H134V598H136V597H137V598H138V597H139V598H140V597H142V598H144V597H145V598H146V597H147V598H151V597H152V598H155V597H156V598H158V597H159V598H163V597H164V598H165V597H166V598H167V597H168V598H169V597H170V598H177V597H179V598H183V597H184V598H185V597H188V598H189V597H193V598H195V597H197V598H198V597H199V598H204V597H205V598H210V597H211V598H212V596H213V597H214V598H215V597H216V598H221V597H222V598H223V597H226V598H228V597H229V598H230V597H231V598H232V597H234V598H235V597H237V598H238V597H239V598H242V597H244V598H245V597H247V598H248V597H250V598H252V597H253V598H254V596H255V597H256V598H259V596H260V597H262V598H263V597H264V598H267V597H268V598H269V597H271V598H274V597H277V598H281V597H284V598H285V597H286V598H289V597H290V598H296V597H297V596H298V598H301V597H305V598H307V597H313V598H318V597H319V598H324V597H325V598H328V597H330V598H331V597H332V598H333V597H335V598H336V597H337V598H340V597H341V598H346V597H347V598H348V597H350V598H352V597H353V598H354V597H359V598H360V597H361V598H363V597H364V598H365V596H366V597H367V598H369V597H370V598H375V597H376V598H377V597H378V598H379V597H384V598H386V597H388V598H392V597H393V598H398V597H400V598H401V596H402V597H403V598H404V597H405V598H406V597H407V598H408V597H409V598H413V597H415V598H418V597H419V598H420V597H423V598H425V597H426V598H427V596H428V598H432V597H433V598H434V597H436V598H437V597H438V598H439V597H441V598H443V597H449V598H450V597H452V598H454V597H455V598H456V597H460V598H461V597H462V598H463V597H467V598H468V597H471V598H473V597H474V598H475V597H476V598H479V597H480V598H481V597H482V598H483V597H486V598H487V596H488V597H489V598H491V597H493V598H494V597H497V598H498V597H499V598H502V597H507V598H508V597H510V598H512V597H513V598H514V597H515V598H516V597H518V598H520V597H521V598H522V597H524V598H532V597H533V598H537V597H538V598H541V597H543V598H545V597H546V598H547V597H548V598H549V597H550V598H552V597H555V598H559V597H560V598H561V597H564V598H565V597H566V598H567V597H569V598H570V597H572V598H574V597H576V598H578V597H579V598H580V597H584V598H585V597H586V598H587V597H590V598H591V597H592V598H595V597H597V598H601V597H602V598H603V597H606V598H609V597H611V598H612V597H616V598H617V597H619V598H622V597H625V598H626V597H627V598H628V597H631V598H632V597H634V598H635V597H637V598H638V597H639V598H642V597H643V598H645V597H648V598H650V597H651V598H653V597H656V598H659V597H660V598H665V597H667V598H670V597H672V598H674V597H675V598H676V597H677V598H679V597H680V596H681V598H685V597H686V598H688V597H689V598H690V597H692V598H694V597H695V598H696V597H697V598H698V597H699V598H703V597H704V598H705V597H706V598H707V597H708V598H710V597H711V598H713V597H714V598H716V597H717V598H720V597H721V598H722V597H723V596H724V598H726V597H728V598H729V597H730V598H732V597H733V598H737V597H738V598H739V597H741V598H743V597H744V598H746V597H748V596H749V597H750V598H756V597H757V598H758V596H759V597H760V598H762V597H763V598H765V597H766V598H776V597H778V598H779V597H780V598H781V597H782V598H783V597H784V598H787V597H789V598H790V597H791V598H792V597H793V598H794V597H795V598H796V597H798V598H799V596H800V597H801V598H806V597H809V598H810V597H811V598H816V597H817V596H818V598H820V597H821V598H823V597H825V598H827V597H828V598H829V597H830V598H831V597H833V598H834V597H837V598H839V597H840V598H849V597H850V598H853V597H854V598H857V597H858V598H859V597H862V598H864V595H865V597H866V596H867V597H870V598H871V597H872V596H873V598H876V597H879V598H880V597H881V598H883V597H885V598H887V597H888V598H889V597H890V598H891V597H892V598H894V597H897V598H899V597H900V598H902V597H903V598H908V597H909V598H912V597H913V598H917V596H918V598H923V597H924V598H925V597H926V598H927V597H928V598H933V597H934V596H935V597H937V598H940V597H942V596H943V597H944V598H946V597H947V598H948V597H950V598H953V597H954V598H956V597H957V598H958V597H963V598H964V597H966V598H967V597H968V598H969V597H971V598H972V597H973V598H975V597H977V598H978V597H981V598H986V597H989V598H992V597H995V598H998V597H999V598H1001V597H1005V598H1007V597H1008V598H1010V597H1013V598H1014V597H1015V598H1017V597H1019V598H1020V597H1022V598H1025V597H1026V598H1027V597H1032V598H1033V597H1034V598H1035V597H1037V598H1038V596H1039V598H1043V597H1044V598H1045V597H1046V598H1048V596H1049V597H1050V598H1053V597H1054V598H1059V597H1060V598H1062V597H1064V598H1066V597H1070V598H1071V597H1072V598H1074V597H1075V598H1076V597H1077V598H1080V597H1084V598H1085V597H1086V598H1088V597H1091V598H1094V597H1099V598H1100V596H1101V598H1102V597H1103V598H1104V597H1105V596H1106V598H1112V597H1118V598H1119V597H1120V598H1123V597H1126V598H1127V597H1128V598H1129V597H1130V598H1136V597H1137V598H1147V597H1149V598H1151V597H1153V598H1154V597H1155V598H1157V597H1160V598H1162V597H1165V596H1166V597H1167V598H1169V597H1170V598H1173V597H1174V598H1175V597H1176V598H1179V597H1180V598H1182V597H1183V598H1187V597H1188V598H1194V597H1195V598H1197V597H1199V598H1200V597H1201V598H1202V597H1203V598H1204V597H1205V596H1206V597H1207V598H1208V597H1210V598H1211V597H1212V598H1213V601H1209V602H1208V601H1207V602H1206V601H1205V602H1203V601H1202V602H1199V601H1198V602H1197V601H1196V602H1195V601H1194V602H1192V601H1189V602H1188V601H1186V602H1177V601H1176V602H1170V603H1169V602H1166V601H1163V602H1159V601H1158V602H1155V601H1154V602H1152V601H1151V602H1149V601H1148V602H1146V601H1145V602H1143V601H1142V602H1137V601H1136V602H1133V601H1132V602H1130V601H1129V602H1123V601H1122V602H1119V603H1118V602H1117V601H1116V602H1114V601H1113V602H1112V601H1110V602H1109V601H1108V602H1106V601H1105V602H1104V601H1103V602H1092V601H1091V602H1089V601H1088V602H1087V601H1083V602H1081V601H1080V602H1075V601H1073V602H1072V601H1071V602H1068V601H1067V602H1066V601H1065V602H1064V601H1063V602H1058V601H1057V602H1055V601H1052V602H1049V601H1047V602H1042V601H1037V602H1035V601H1031V602H1029V601H1026V602H1025V601H1024V602H1021V601H1020V602H1019V601H1017V602H1014V601H1013V602H1011V601H1010V602H1009V601H1005V603H1004V602H1002V601H1001V602H997V601H994V602H992V601H991V602H990V601H988V602H983V603H981V601H979V602H978V601H977V602H976V601H975V602H974V601H973V602H969V601H967V602H966V601H963V602H960V601H959V602H957V601H956V602H952V601H951V602H949V601H948V602H945V601H943V602H940V601H939V602H937V601H936V602H935V601H934V602H930V601H929V602H927V601H925V602H924V601H923V602H917V601H916V602H914V601H912V602H907V601H904V602H903V601H902V602H898V601H896V602H895V601H893V602H891V601H890V602H883V601H878V602H873V601H869V602H868V601H867V603H866V602H865V603H864V601H862V602H858V601H856V602H855V601H854V602H853V601H852V602H851V601H850V602H846V601H844V602H840V601H838V602H828V601H827V602H824V601H823V602H819V603H818V602H817V601H816V602H811V601H810V602H804V601H802V602H795V601H794V602H793V601H792V602H791V601H790V602H787V601H786V602H784V601H783V602H781V601H778V602H775V601H774V602H773V601H772V602H766V601H764V602H761V601H759V602H756V601H755V602H754V601H753V602H752V601H751V602H749V601H747V602H745V601H744V602H742V601H741V602H738V601H735V602H730V601H729V602H727V601H726V602H725V601H724V602H723V601H720V602H719V601H717V602H716V601H714V602H712V601H711V602H708V601H707V602H701V601H700V602H694V601H692V602H686V601H685V602H684V601H683V602H681V601H679V602H676V601H674V602H673V601H671V603H670V601H669V602H666V601H662V602H661V601H660V603H659V601H658V602H654V601H651V602H645V601H644V602H642V601H641V602H632V603H631V602H630V601H628V602H627V601H626V602H625V601H624V602H623V601H620V602H618V601H617V602H608V601H603V602H602V603H601V602H591V601H590V602H588V601H586V602H583V601H582V602H580V601H579V602H578V601H577V602H574V601H573V602H568V601H567V602H562V601H561V602H560V601H559V602H558V601H557V602H556V601H555V602H550V601H548V602H544V601H542V602H541V601H538V602H537V601H536V602H535V601H534V602H532V601H531V602H530V601H527V602H526V601H525V602H522V601H520V602H519V601H517V602H514V601H512V602H509V603H508V601H506V602H503V601H501V602H500V601H499V602H498V601H497V602H490V601H489V602H487V601H486V602H485V601H483V602H482V601H481V602H476V601H474V603H473V602H467V601H465V602H455V601H454V602H453V601H452V602H450V601H449V602H440V603H439V602H435V601H434V602H429V601H427V602H423V601H422V602H420V601H419V602H413V601H412V603H411V602H407V601H406V602H405V601H404V602H399V601H398V603H397V602H392V601H391V602H389V601H387V602H386V603H385V602H381V601H380V602H379V601H378V602H371V601H369V602H368V601H367V602H356V601H355V602H353V601H352V602H343V601H342V602H341V601H340V602H339V601H338V602H337V601H336V602H334V601H332V602H331V601H330V602H328V601H325V602H324V601H323V602H321V601H320V602H315V601H314V602H313V601H312V602H311V601H309V602H304V601H302V602H301V601H300V602H298V601H297V602H296V603H295V601H293V602H292V601H291V602H289V601H287V602H284V601H282V602H280V601H279V602H278V601H277V602H275V601H274V602H273V601H271V602H267V601H266V602H265V601H264V603H263V602H262V601H260V602H254V601H253V602H247V601H246V602H244V601H243V602H242V603H241V602H240V601H239V603H238V601H237V602H233V601H232V602H226V601H225V602H223V601H222V602H218V601H216V602H213V601H212V602H209V601H208V602H206V601H205V603H204V602H202V601H200V602H196V601H195V602H193V601H192V602H185V601H184V602H183V601H179V602H178V601H175V602H173V603H172V602H171V601H170V602H169V601H168V602H166V601H164V602H163V601H162V602H161V601H157V602H156V601H155V602H154V601H153V602H149V601H148V602H146V601H145V602H142V603H141V602H140V601H138V602H135V601H134V602H132V601H131V602H130V601H127V603H126V602H123V601H122V602H118V601H117V602H112V601H111V602H110V601H108V602H106V601H103V602H102V601H101V602H100V601H98V602H95V601H94V602H92V601H91V602H88Z"/><path d="M88 628H89V627H91V628H94V623H95V627H96V628H97V626H98V628H99V627H101V626H102V628H109V627H111V628H112V627H113V628H114V627H116V628H117V627H118V628H123V626H124V628H126V627H127V628H129V627H132V628H134V627H135V628H138V627H139V628H140V627H141V628H142V627H143V628H144V627H146V628H150V627H151V628H152V627H155V628H158V627H159V628H164V627H165V626H166V628H169V627H170V628H171V627H172V628H173V627H175V628H176V627H177V628H179V627H180V628H186V626H187V627H188V628H190V627H191V628H192V627H193V626H194V627H196V625H197V627H198V628H199V627H200V624H201V626H202V627H203V624H204V627H205V628H208V626H209V628H210V627H211V628H212V627H213V628H216V627H217V628H219V627H221V628H222V627H224V628H225V627H226V628H232V627H238V628H240V627H241V628H243V627H245V628H247V627H248V628H252V627H253V628H256V627H261V628H264V627H267V628H268V627H269V628H271V627H272V628H274V627H275V628H279V627H282V628H286V627H287V628H290V627H291V626H292V628H297V627H298V628H302V627H303V628H304V627H305V628H306V626H307V628H311V627H314V628H315V627H316V628H317V627H318V628H321V627H322V628H325V627H326V628H327V626H328V628H332V627H333V628H337V627H338V628H339V627H340V628H342V627H343V626H344V627H345V628H351V627H352V628H353V627H354V628H359V627H361V628H364V627H365V628H378V627H379V628H385V627H386V628H388V627H390V628H391V627H393V628H394V627H395V628H396V627H398V628H401V627H402V628H407V627H408V628H409V627H410V628H413V627H414V628H421V627H422V628H423V627H424V628H425V627H426V628H427V627H428V628H429V627H431V628H436V627H437V628H438V627H439V628H441V627H442V628H445V627H447V628H448V627H449V628H453V627H454V628H455V626H456V628H460V627H461V628H464V627H465V628H466V627H467V628H469V627H470V628H472V627H473V628H474V627H475V628H477V627H478V628H480V627H481V628H484V627H485V628H488V626H489V628H490V627H491V628H493V627H494V628H495V627H496V628H497V627H498V628H500V627H501V628H502V627H503V628H505V627H506V628H512V627H513V628H514V627H515V628H520V627H521V628H523V627H525V626H526V627H528V628H529V627H531V628H532V627H534V628H537V627H538V628H543V627H544V628H549V627H551V628H552V627H554V628H556V627H558V628H560V627H561V628H562V627H563V628H567V627H568V628H574V627H575V628H576V627H577V628H581V627H582V628H583V627H584V628H588V627H589V628H596V627H597V628H599V627H605V628H611V627H612V628H614V627H616V628H618V627H619V628H621V627H622V628H625V627H626V628H629V627H630V626H631V628H633V627H634V628H635V627H636V628H643V627H644V628H646V627H647V628H652V627H653V628H656V627H657V628H661V627H662V628H664V627H665V628H666V627H667V628H669V626H670V628H671V627H672V628H676V627H677V628H681V627H683V628H689V626H690V628H692V627H694V628H699V627H700V626H701V628H702V627H703V628H705V627H708V626H709V628H710V627H711V628H712V627H713V628H716V627H717V628H721V627H722V628H723V627H724V628H726V627H727V628H728V627H729V628H737V627H738V628H743V627H744V628H752V627H753V628H754V627H755V628H757V627H760V628H762V627H763V628H765V627H769V628H771V627H774V628H781V627H783V628H785V627H788V628H790V627H791V628H796V627H797V628H807V627H808V628H809V627H810V628H812V627H814V628H816V627H817V628H819V627H821V628H827V627H830V628H840V627H842V628H844V627H845V628H846V627H847V628H853V627H855V628H860V627H862V628H864V627H865V628H866V627H867V628H871V627H872V628H877V627H878V628H881V627H882V628H884V627H885V628H887V627H888V628H895V627H896V628H900V627H901V628H904V627H905V628H906V627H907V628H909V627H913V628H916V627H917V628H918V627H920V628H922V627H923V628H927V627H928V628H933V627H934V628H940V627H941V628H942V627H945V628H946V627H947V628H952V627H954V628H956V627H957V628H964V627H965V628H968V627H969V628H970V627H971V628H973V627H974V628H976V627H977V628H978V627H979V628H980V627H984V628H985V627H986V628H989V627H990V628H994V627H995V628H996V627H997V628H999V627H1000V628H1007V627H1009V628H1010V627H1012V628H1013V627H1014V628H1017V627H1018V628H1019V627H1020V628H1023V627H1026V628H1037V626H1038V628H1039V627H1041V628H1045V627H1047V628H1048V627H1049V628H1057V626H1058V628H1059V627H1060V628H1064V627H1065V628H1067V627H1068V628H1071V627H1074V628H1075V627H1077V626H1078V628H1080V627H1081V628H1082V627H1084V628H1085V627H1086V628H1092V627H1095V628H1097V627H1098V628H1099V627H1100V628H1106V627H1108V628H1110V627H1112V626H1113V628H1114V627H1115V628H1116V627H1117V628H1119V627H1121V628H1122V627H1123V628H1124V627H1125V628H1127V627H1128V628H1129V627H1131V628H1132V627H1133V628H1135V627H1138V628H1142V627H1144V628H1145V627H1146V628H1147V627H1148V628H1150V627H1151V628H1154V627H1155V628H1156V627H1157V628H1158V627H1159V628H1164V627H1165V628H1173V627H1175V628H1177V627H1182V628H1188V627H1190V628H1191V627H1192V628H1203V627H1205V628H1206V627H1208V628H1210V627H1212V628H1213V632H1209V631H1208V632H1197V631H1196V632H1195V631H1194V632H1191V631H1190V632H1188V633H1187V632H1186V631H1185V632H1175V631H1174V632H1172V633H1171V632H1164V631H1163V632H1151V631H1150V632H1142V631H1141V632H1137V633H1136V632H1129V631H1128V632H1122V631H1121V633H1120V632H1118V633H1117V632H1104V631H1103V632H1093V633H1092V631H1091V632H1087V633H1086V632H1085V631H1084V632H1067V631H1066V632H1065V633H1064V632H1059V633H1058V632H1056V631H1055V632H1048V631H1046V632H1041V631H1040V632H1035V631H1034V632H1030V631H1029V632H1027V631H1026V632H1020V631H1019V632H1011V631H1010V632H1008V631H1004V632H998V631H997V632H994V631H993V632H992V631H991V632H990V631H989V632H988V631H987V632H968V631H967V632H962V631H961V632H957V631H956V632H953V633H952V632H948V631H947V632H943V633H942V632H934V631H932V632H929V631H928V632H916V631H915V632H911V631H910V632H905V631H904V632H900V631H896V632H894V631H893V632H889V631H888V632H887V633H886V632H880V633H879V631H878V632H873V631H872V632H871V631H870V632H865V631H864V632H862V631H861V632H844V633H843V632H838V631H837V633H836V632H835V631H833V632H831V631H830V632H827V631H825V632H824V631H823V632H817V631H816V632H814V631H813V632H808V631H807V632H799V631H798V632H792V631H791V632H778V631H777V632H772V631H771V632H767V631H766V632H761V631H760V632H756V631H755V632H751V631H749V632H742V631H741V632H737V631H736V632H726V631H725V632H723V631H722V632H710V631H709V632H698V631H697V632H693V631H692V632H686V633H685V632H683V631H682V632H679V631H678V632H673V631H672V632H671V633H670V632H666V631H664V632H661V631H660V632H656V633H655V632H651V631H650V632H642V631H641V632H636V631H635V632H632V633H631V632H629V631H628V632H625V631H624V632H621V631H620V632H618V631H616V632H614V631H613V632H608V633H607V632H606V631H605V632H592V631H591V632H588V631H587V632H577V633H576V632H574V633H573V632H572V631H571V632H570V633H569V632H563V631H562V632H553V631H552V632H551V633H550V632H548V633H547V632H541V631H540V632H532V633H531V632H526V631H524V632H522V631H521V632H516V631H514V632H503V631H502V633H501V631H499V632H479V631H478V632H472V631H470V632H469V631H468V632H435V631H434V633H433V632H432V633H431V632H427V631H426V632H419V631H418V632H417V631H416V632H414V631H413V632H412V633H411V632H408V631H407V632H403V631H402V632H401V631H400V632H399V633H398V632H396V633H395V632H374V631H372V632H365V631H364V632H356V631H354V632H344V633H343V632H336V633H335V632H332V631H331V632H329V633H328V632H319V631H318V632H317V631H316V632H311V631H310V632H309V631H308V632H299V631H298V632H297V631H296V632H293V631H292V632H281V631H280V632H272V631H271V632H268V631H267V632H259V631H258V632H253V631H251V632H238V631H237V632H233V631H232V632H231V631H230V632H228V631H227V632H221V631H220V632H218V631H215V632H214V631H213V632H211V631H210V633H209V632H208V633H207V632H206V634H205V632H204V633H203V632H201V635H200V633H199V634H198V632H196V633H195V631H194V633H193V632H187V631H186V632H172V631H171V632H162V631H161V633H158V632H143V631H141V632H135V631H134V632H128V631H127V632H126V631H125V632H108V631H107V632H106V631H105V632H103V633H102V632H99V633H98V632H97V633H96V632H95V634H94V633H93V634H92V632H91V633H90V632H89V633H88Z"/><path d="M88 658H89V659H90V658H92V659H93V658H96V659H97V658H98V659H99V658H101V659H106V658H108V659H109V657H110V659H111V658H115V659H117V658H118V659H120V658H123V659H125V658H126V659H127V658H131V657H132V658H134V659H135V658H140V659H141V658H145V659H148V658H149V659H150V658H153V659H154V658H155V659H156V658H157V659H158V658H159V659H161V658H164V659H166V658H167V659H170V658H171V659H173V658H174V659H177V658H181V659H185V658H188V659H189V658H195V659H197V658H198V659H199V658H208V659H209V658H212V659H213V658H219V659H220V658H222V659H225V658H226V659H227V658H229V659H230V658H231V659H233V658H235V659H236V658H237V659H239V658H241V659H242V658H243V659H244V658H245V659H246V658H252V659H256V658H260V659H261V658H263V659H267V658H270V659H272V658H277V659H278V658H281V659H283V657H284V659H285V658H286V657H287V659H289V658H290V659H291V658H292V659H298V658H303V659H304V658H307V659H308V658H313V659H314V658H315V659H317V658H325V659H326V658H329V659H330V658H331V659H332V658H334V659H335V658H336V659H338V658H339V659H340V658H342V659H343V658H344V659H345V657H348V659H352V658H353V659H354V658H355V659H357V658H361V659H363V658H364V659H365V658H367V659H369V658H370V659H371V658H376V659H377V658H378V659H379V658H381V659H382V658H383V659H384V657H385V658H386V659H387V658H388V659H390V658H391V659H392V658H396V659H399V658H400V659H402V658H404V657H405V658H408V657H410V658H416V659H418V658H420V659H422V658H424V659H427V658H428V659H429V658H436V659H437V658H442V659H443V658H444V659H445V658H451V659H453V658H458V659H460V658H461V659H464V658H465V659H468V658H470V659H471V658H472V659H473V658H477V659H478V658H479V659H480V658H482V659H483V658H484V659H485V658H487V659H490V658H497V659H499V658H501V659H503V658H505V659H506V658H507V659H508V658H511V659H512V658H515V659H516V658H517V659H519V658H521V659H522V658H525V659H530V658H532V659H534V658H535V659H536V658H540V659H543V658H545V659H548V657H549V659H552V658H556V659H557V658H561V657H562V659H563V658H564V659H565V658H567V659H568V657H569V658H570V659H572V658H575V659H579V658H580V659H581V658H582V659H583V658H584V659H585V658H586V659H587V658H594V659H595V658H597V659H598V658H601V659H602V658H605V659H607V657H608V658H612V659H613V658H614V659H617V658H619V659H620V658H624V659H625V658H627V659H630V658H631V659H632V658H634V659H635V658H637V659H638V657H639V659H640V658H645V659H647V658H649V659H650V658H654V659H655V658H656V659H657V658H660V659H661V658H666V659H667V658H669V659H671V658H673V659H674V658H676V659H677V658H679V659H680V658H682V659H683V658H685V659H686V658H689V659H690V658H692V659H693V658H694V659H696V658H699V659H702V658H704V659H705V658H710V657H711V658H713V657H714V658H719V659H720V658H722V659H723V658H726V659H728V658H729V659H731V658H737V659H741V658H745V659H746V658H751V659H754V658H756V659H758V658H759V659H760V658H761V659H762V658H766V659H767V658H768V659H769V657H770V658H775V659H776V657H777V659H779V658H780V659H781V658H782V659H784V658H787V659H791V658H796V659H797V658H798V659H799V658H801V659H802V658H803V657H804V658H806V659H807V658H809V659H810V658H816V659H817V658H819V659H824V658H826V659H827V658H828V659H831V658H834V659H836V658H839V659H840V658H843V659H844V658H845V659H848V658H851V659H852V658H854V659H855V658H860V659H861V658H862V659H866V658H868V659H869V657H871V659H872V658H873V654H874V658H875V657H876V658H877V659H878V657H879V658H880V659H881V658H887V659H889V658H891V657H892V659H893V658H895V659H896V658H897V659H899V658H903V659H908V658H909V659H910V658H914V659H915V658H916V659H917V658H919V659H920V658H922V659H923V658H925V659H928V658H934V659H936V657H937V658H938V659H939V658H941V659H942V658H943V659H944V658H945V659H946V658H954V659H956V658H961V659H962V658H969V659H970V658H972V659H974V657H975V658H976V659H977V658H982V657H983V658H985V659H988V658H990V659H991V658H993V659H995V658H997V659H999V658H1000V657H1001V659H1002V658H1004V659H1005V658H1006V659H1007V658H1011V659H1012V658H1014V659H1015V658H1025V659H1026V658H1028V659H1030V658H1037V659H1039V658H1043V659H1044V658H1045V659H1046V658H1049V659H1050V658H1051V659H1052V658H1053V659H1054V658H1058V659H1059V658H1060V659H1062V658H1068V659H1071V658H1073V659H1074V658H1075V659H1076V658H1078V659H1079V658H1085V659H1086V658H1087V659H1089V658H1094V659H1095V658H1096V659H1099V658H1106V659H1107V658H1108V659H1109V658H1111V659H1114V657H1115V658H1117V659H1118V658H1119V659H1120V658H1121V659H1124V658H1125V657H1126V658H1127V659H1128V658H1130V659H1131V658H1132V659H1135V658H1136V659H1137V658H1138V659H1143V658H1145V659H1146V658H1147V659H1148V658H1149V659H1150V658H1151V659H1152V658H1153V659H1156V658H1158V659H1160V658H1164V659H1165V658H1166V659H1167V658H1170V659H1172V658H1173V659H1174V658H1175V659H1177V658H1181V659H1182V658H1183V659H1184V658H1185V659H1187V658H1190V659H1191V658H1197V659H1198V658H1199V659H1201V658H1202V659H1204V658H1205V659H1206V658H1208V659H1209V658H1211V659H1212V658H1213V662H1211V663H1205V662H1204V663H1202V662H1201V663H1197V662H1196V663H1191V664H1190V663H1188V662H1185V663H1182V662H1181V663H1178V662H1175V663H1174V662H1171V663H1170V662H1169V663H1168V662H1167V663H1166V662H1164V663H1163V662H1162V663H1158V662H1157V663H1156V662H1152V663H1151V662H1150V663H1149V664H1148V663H1137V662H1136V663H1133V662H1132V663H1128V662H1127V663H1126V664H1125V662H1123V663H1117V662H1114V663H1113V662H1111V663H1106V662H1103V663H1102V664H1101V662H1099V664H1098V662H1097V663H1096V662H1093V663H1092V662H1090V663H1089V662H1088V663H1086V662H1085V663H1082V662H1080V663H1075V662H1072V663H1071V664H1070V662H1069V663H1068V662H1067V663H1065V662H1060V663H1059V662H1058V663H1054V662H1053V663H1052V662H1051V663H1047V662H1046V663H1044V662H1043V663H1036V662H1034V663H1033V662H1032V663H1028V662H1025V663H1023V662H1022V663H1021V662H1020V663H1018V662H1017V663H1014V662H1011V663H1010V664H1009V662H1006V663H1003V662H1001V663H998V662H995V663H992V662H991V663H988V662H987V663H984V664H983V663H982V662H979V663H977V662H976V663H973V662H972V663H970V662H969V663H967V662H966V663H964V662H963V663H962V662H959V663H949V662H948V663H947V662H946V663H943V662H942V663H941V662H939V663H937V662H935V663H933V662H932V663H926V662H925V663H924V662H923V663H919V662H917V663H916V662H915V663H914V662H913V663H910V662H907V663H903V662H901V663H899V662H898V663H893V664H892V663H886V662H885V663H879V665H878V664H877V665H876V662H874V666H873V664H872V663H871V662H868V664H867V663H866V664H865V663H864V662H863V663H862V662H861V663H859V662H858V663H854V662H852V663H851V662H850V663H849V662H847V663H846V662H840V663H839V662H838V663H835V662H833V663H832V662H831V663H827V662H824V663H823V662H822V663H820V662H819V663H815V662H811V663H810V662H808V663H807V662H806V663H802V662H801V663H799V662H797V663H796V662H795V663H792V664H791V663H789V662H788V663H786V662H784V663H783V662H782V663H781V662H780V663H779V662H778V663H771V662H770V663H767V662H766V663H765V662H763V663H762V662H760V663H758V662H757V663H754V662H752V663H749V662H746V663H745V662H744V663H742V662H741V663H737V662H736V663H734V662H733V663H732V662H727V663H726V662H725V663H724V662H723V663H721V662H718V663H717V662H714V663H712V662H710V663H709V662H708V663H704V662H703V663H696V664H695V663H692V662H691V663H690V662H689V663H688V662H687V663H686V662H685V663H682V662H680V663H679V662H677V663H676V662H675V663H669V662H664V663H661V662H658V663H655V662H654V663H653V662H649V663H648V662H647V663H638V662H637V663H635V662H634V663H632V662H631V663H630V662H629V663H628V662H626V663H622V662H621V663H620V662H617V663H616V662H615V663H614V664H613V663H612V662H611V663H606V662H604V663H602V662H601V663H595V662H593V663H591V662H590V663H586V662H585V663H571V662H568V663H559V662H558V663H555V662H554V663H551V662H550V663H548V662H547V663H544V662H542V663H540V662H539V663H538V662H535V663H530V662H529V663H527V662H526V663H525V662H524V663H523V662H522V663H518V662H514V663H509V662H508V663H504V662H503V663H500V662H498V663H496V662H495V663H494V662H492V663H487V662H482V663H477V662H476V663H467V662H465V663H461V662H460V663H458V662H457V663H456V662H454V663H452V662H451V663H449V662H448V663H446V662H445V663H439V662H438V663H435V662H434V663H433V662H432V663H428V662H426V663H425V662H423V663H421V662H418V663H413V662H411V664H410V663H409V664H408V662H407V663H406V664H405V663H404V662H402V663H399V662H398V663H396V662H395V663H393V662H392V663H389V662H388V663H387V662H384V663H381V662H378V663H377V662H376V663H371V662H367V663H366V662H365V663H361V662H360V663H356V662H352V663H348V665H347V663H345V664H344V663H339V662H338V663H333V662H332V663H331V662H326V663H325V662H324V663H322V662H321V663H317V662H316V663H314V662H313V663H312V662H310V663H308V662H307V663H304V662H303V663H301V662H300V663H296V662H291V663H290V662H289V663H288V662H287V663H286V662H285V663H281V662H280V663H274V662H273V663H272V662H271V663H268V662H266V663H264V662H263V663H259V662H258V663H257V662H255V663H254V662H251V663H250V662H249V663H247V662H246V663H245V662H243V663H241V662H239V664H238V662H237V663H233V662H230V663H229V662H228V663H227V662H226V663H225V662H223V663H220V662H219V663H213V662H212V663H210V662H208V663H204V662H202V663H200V662H197V663H194V662H190V663H184V662H183V663H181V662H180V663H170V662H169V663H165V662H164V663H163V662H162V663H161V662H160V663H159V662H157V663H154V662H152V663H148V662H146V664H145V663H143V662H141V663H140V662H139V663H137V662H134V663H133V662H132V663H127V662H126V663H122V662H121V663H119V662H118V663H116V664H115V663H111V662H110V663H108V662H107V663H106V662H105V663H104V662H103V663H100V662H98V663H96V662H95V663H89V662H88Z"/><path d="M88 688H90V689H91V688H92V689H93V688H94V689H96V688H97V689H101V688H103V689H110V688H111V689H120V688H121V687H122V688H124V689H125V685H126V687H127V689H129V688H131V687H132V688H133V689H138V688H139V689H140V688H141V689H142V688H143V689H145V688H147V689H149V688H151V689H156V688H157V689H160V688H161V689H163V688H164V689H169V688H170V689H173V688H174V689H178V688H179V689H182V688H183V689H186V688H187V689H188V688H189V689H190V688H192V689H199V688H201V689H202V688H203V689H206V688H207V687H208V689H210V688H211V689H215V688H216V689H221V688H222V689H225V688H226V689H229V688H230V689H237V688H238V689H239V688H240V687H241V689H242V688H244V689H252V688H253V689H254V688H256V689H257V688H259V689H261V688H262V689H263V688H264V687H265V689H269V688H270V689H273V688H274V689H278V688H279V689H280V688H281V689H282V688H283V689H286V688H287V689H288V688H289V689H294V688H295V689H306V688H307V689H308V688H309V689H313V688H314V689H315V688H316V689H317V688H318V689H320V688H321V689H322V688H323V689H325V688H326V689H328V688H329V689H336V688H337V689H339V688H340V689H342V688H343V689H346V688H347V689H352V688H353V689H355V688H356V689H360V688H361V689H364V688H365V689H366V687H367V688H368V689H380V688H381V689H382V688H383V689H385V688H386V689H394V688H395V689H396V688H397V689H403V688H404V689H412V688H413V689H421V688H422V689H426V688H427V689H428V688H429V689H430V688H431V689H432V688H433V689H437V687H438V689H439V688H440V689H445V688H448V689H451V687H452V688H455V689H461V688H462V689H463V688H464V689H465V688H466V689H469V688H470V689H475V688H476V689H479V688H480V689H484V688H486V689H487V688H488V689H489V688H492V689H494V688H495V689H498V688H499V689H506V688H507V689H511V688H512V689H518V688H519V689H526V688H527V689H529V688H531V689H533V688H534V687H535V689H536V688H537V689H538V688H539V689H540V688H541V689H542V688H544V689H546V688H547V689H550V688H551V689H555V688H556V689H559V688H560V689H563V688H564V689H565V687H566V688H568V687H569V689H578V688H579V689H580V688H581V689H583V688H584V689H586V688H587V689H588V688H589V689H590V688H591V689H596V688H597V687H598V688H599V689H601V688H602V689H608V688H609V689H613V688H615V687H616V689H618V688H619V687H620V689H621V688H622V689H623V688H624V689H630V688H632V689H634V688H636V689H637V688H638V689H640V688H641V689H642V688H643V689H645V688H646V689H648V688H649V689H651V688H652V689H660V688H662V689H665V688H666V689H670V688H671V689H675V688H676V689H678V688H679V689H680V687H681V689H686V688H687V689H695V688H696V689H699V688H700V689H703V688H704V689H706V688H709V689H719V687H720V689H727V688H728V689H730V688H732V689H733V688H734V689H736V688H737V689H748V688H751V689H752V688H753V689H756V688H757V689H764V688H765V689H776V688H777V689H782V688H783V689H784V688H785V689H790V688H791V689H792V688H793V689H794V688H795V689H796V688H798V689H799V688H800V689H801V688H802V689H804V687H805V689H806V688H808V689H809V688H811V689H812V688H814V689H818V688H819V689H827V688H829V689H831V688H832V689H834V688H835V689H836V688H837V689H840V688H842V689H847V688H848V689H854V688H856V689H858V688H859V689H862V688H863V689H869V688H870V689H876V688H877V689H884V688H886V689H889V688H890V689H891V688H892V689H893V687H894V689H899V688H902V689H904V688H905V689H906V688H908V689H914V688H915V689H918V688H919V689H921V688H922V689H926V688H927V689H931V688H932V689H937V688H938V689H939V688H940V689H942V688H945V689H948V688H951V689H956V688H958V689H960V688H963V689H964V688H965V689H969V688H970V689H976V688H978V689H981V688H985V689H989V688H991V689H993V688H995V689H998V686H999V688H1000V689H1001V687H1002V688H1006V689H1007V688H1009V689H1012V688H1013V689H1018V688H1020V689H1023V688H1024V689H1026V688H1027V689H1029V688H1030V689H1033V688H1034V689H1038V688H1039V689H1042V688H1043V689H1049V688H1050V689H1051V688H1052V689H1054V688H1055V689H1059V688H1060V689H1064V688H1066V689H1067V688H1068V689H1072V688H1073V689H1079V688H1081V689H1082V688H1083V689H1085V688H1086V689H1087V688H1088V689H1098V688H1099V689H1109V688H1110V689H1113V688H1114V689H1116V688H1117V689H1119V688H1120V689H1121V688H1124V689H1132V688H1133V689H1134V688H1135V689H1137V688H1138V689H1139V688H1140V689H1141V688H1143V689H1146V688H1147V689H1161V688H1162V689H1164V688H1165V689H1172V687H1173V688H1175V689H1180V688H1181V689H1194V688H1195V689H1197V688H1198V689H1200V688H1201V689H1204V688H1205V689H1207V688H1208V689H1213V692H1212V693H1210V692H1209V693H1208V692H1206V693H1205V692H1204V693H1203V694H1202V693H1176V692H1175V693H1173V692H1172V693H1171V692H1170V693H1165V692H1164V693H1163V692H1161V694H1160V693H1158V692H1156V693H1152V692H1151V693H1149V692H1148V693H1145V692H1144V693H1143V692H1142V693H1134V694H1133V693H1130V692H1129V693H1126V692H1124V693H1123V692H1122V693H1112V692H1110V693H1109V694H1108V693H1102V692H1101V693H1096V692H1094V693H1088V692H1087V693H1083V692H1082V693H1081V692H1080V693H1078V692H1077V693H1071V692H1070V693H1068V692H1065V693H1061V694H1060V693H1051V692H1050V693H1048V692H1047V693H1046V692H1045V693H1035V692H1034V693H1033V692H1031V693H1029V692H1028V693H1026V692H1025V693H1024V692H1023V693H1012V692H1010V693H1009V692H1008V693H1005V692H1004V693H1002V694H1001V693H1000V694H999V695H998V693H996V692H995V693H990V694H989V692H988V693H985V692H983V693H981V692H980V693H975V692H974V693H966V692H965V693H958V692H957V693H955V692H954V693H952V692H950V693H946V692H944V693H941V694H940V693H936V692H935V693H933V692H932V693H925V692H923V693H922V692H920V693H915V692H914V693H911V694H910V693H908V692H907V693H896V692H895V693H894V694H893V693H889V692H888V693H882V692H879V693H876V692H875V693H871V692H869V693H867V692H865V693H864V692H863V693H850V694H849V692H847V693H845V692H842V693H838V692H837V693H832V692H831V693H828V692H826V693H818V692H814V693H811V692H810V693H809V692H808V693H806V692H804V693H801V692H800V693H798V694H797V693H796V692H795V693H787V692H786V693H784V692H783V693H781V692H780V693H779V692H778V693H776V692H775V693H771V694H770V693H769V692H768V693H766V692H765V693H760V692H759V693H755V692H754V693H747V692H746V693H743V692H742V693H732V692H731V693H725V692H724V693H723V692H722V693H714V692H713V693H708V692H707V693H706V692H705V693H700V694H699V693H697V692H696V693H685V692H684V693H680V692H679V693H678V692H677V693H676V692H675V693H674V694H673V692H672V693H659V694H658V693H651V692H650V693H639V692H638V693H635V694H634V693H624V692H623V693H622V692H621V693H619V692H617V693H614V692H612V693H610V692H609V693H607V692H606V693H605V692H604V693H603V692H602V693H601V692H600V693H597V692H596V693H588V692H587V693H586V692H585V693H582V692H580V693H579V692H578V693H575V692H573V693H572V694H571V692H569V693H568V694H567V693H566V694H565V693H564V692H563V694H562V693H559V692H558V693H557V692H556V693H553V692H552V693H537V694H536V693H534V692H529V693H528V692H527V693H524V692H522V693H518V692H517V694H516V693H501V692H500V694H499V693H495V692H494V693H486V692H485V693H483V692H481V693H479V692H478V693H468V694H467V693H463V692H461V693H458V694H457V693H456V692H455V693H452V692H451V693H449V692H448V693H447V692H446V693H445V692H444V693H442V692H440V693H438V692H437V693H434V694H433V692H432V693H431V692H430V693H427V692H425V693H423V692H422V693H418V692H417V693H414V692H412V693H409V692H408V693H404V692H401V693H398V692H396V693H395V692H394V693H393V692H392V693H390V694H389V693H384V692H383V693H381V692H380V693H378V692H377V693H373V694H372V693H371V692H370V693H369V694H368V693H366V694H365V692H359V693H338V692H335V693H331V692H329V693H324V694H323V692H322V693H315V694H314V692H313V693H308V692H307V693H306V692H305V693H297V692H296V693H293V692H292V693H290V692H289V693H285V692H283V693H276V692H274V693H271V692H270V693H267V692H266V693H258V694H257V693H255V694H254V693H247V692H246V693H233V692H232V693H220V692H219V693H217V692H216V693H214V692H213V693H202V692H201V693H200V692H199V693H196V692H195V693H191V692H190V693H186V692H185V693H184V692H182V693H181V692H180V694H179V693H178V692H174V693H173V692H172V693H165V692H164V693H163V694H162V693H161V694H160V693H151V692H150V693H147V692H146V693H138V692H137V693H136V692H135V693H128V696H127V693H126V696H125V692H124V695H123V694H122V693H120V694H119V693H116V694H115V693H114V692H113V693H112V692H111V693H108V692H107V693H105V694H104V693H103V692H102V693H99V692H98V693H96V692H95V693H94V692H92V694H91V692H90V693H88Z"/><path d="M88 719H93V718H94V719H98V718H100V719H101V718H102V719H106V718H107V719H111V718H112V719H117V717H118V719H119V718H120V719H121V718H122V719H125V718H126V719H127V718H128V717H129V718H134V719H136V718H137V719H141V718H142V719H144V718H145V719H148V718H149V719H153V718H154V719H155V718H156V719H162V718H163V719H168V718H169V719H175V718H176V719H177V718H178V719H179V718H180V719H186V718H187V719H188V718H189V719H191V718H192V719H193V718H194V719H195V718H196V719H198V718H200V719H202V718H203V719H207V718H208V719H212V718H213V719H214V718H216V719H218V718H219V719H220V718H221V719H229V718H230V719H233V718H234V719H237V718H238V719H239V718H240V719H245V718H246V719H247V718H248V719H249V718H250V719H255V718H256V719H261V718H262V719H266V718H267V719H274V718H276V719H282V718H283V719H290V718H291V719H300V718H301V719H309V718H310V717H311V719H317V718H318V719H323V718H325V719H327V717H328V719H329V717H330V718H331V719H334V718H335V719H339V718H340V719H342V718H343V719H344V718H346V719H348V718H350V719H352V718H353V719H354V718H355V719H357V718H358V719H359V718H360V719H361V718H363V719H366V718H367V719H369V718H370V719H371V717H372V719H384V718H385V719H386V718H388V719H396V718H399V719H405V718H406V719H407V718H408V719H411V718H412V719H421V718H422V719H430V718H431V719H434V718H436V719H440V718H442V719H444V718H445V719H448V718H449V719H453V718H454V719H458V718H459V719H467V718H469V719H471V718H472V719H473V718H474V719H482V718H483V719H485V718H487V719H488V718H489V719H494V718H495V719H497V718H498V719H499V718H500V719H505V718H506V719H516V718H517V719H518V718H519V719H521V718H522V719H525V718H527V719H532V718H534V719H535V718H536V719H539V718H540V719H546V718H547V719H552V718H553V719H567V718H568V719H570V718H571V719H575V718H576V719H578V718H579V719H580V718H581V719H583V718H586V719H590V718H592V719H594V718H595V719H603V718H604V719H608V718H609V717H610V719H612V718H615V719H616V718H617V719H620V718H621V717H622V718H624V719H629V718H630V719H631V718H634V719H637V718H640V719H642V718H643V719H645V718H646V719H647V718H648V719H649V718H650V719H651V718H652V719H659V718H660V716H661V718H663V717H664V719H666V717H667V719H669V717H670V719H671V718H673V719H676V718H677V719H680V718H683V719H691V718H693V719H697V718H698V719H704V718H705V719H715V718H716V719H720V718H721V719H725V718H729V719H730V718H731V719H736V718H737V719H742V718H743V719H745V718H746V719H747V718H748V719H754V718H755V719H758V718H760V719H764V718H765V719H766V718H768V719H769V718H770V719H779V718H780V719H783V718H786V719H790V718H791V719H793V718H794V719H795V718H796V719H797V718H798V719H801V718H802V717H803V718H804V719H806V718H808V719H813V718H815V719H816V718H817V719H818V718H819V719H827V718H828V719H832V718H833V719H834V718H835V719H847V718H849V719H864V718H866V719H871V717H872V719H873V718H874V719H879V718H887V719H888V718H889V719H894V718H895V717H896V718H897V719H898V718H899V719H904V718H907V719H912V718H913V719H915V718H917V719H918V718H920V719H922V718H923V719H934V718H936V719H941V718H942V719H943V718H947V719H952V718H954V719H955V718H958V719H959V718H960V719H962V718H964V719H968V718H970V719H972V718H973V719H974V718H975V719H976V718H977V719H978V718H979V719H980V718H981V719H983V718H984V719H991V718H992V719H994V718H995V719H1004V718H1006V719H1009V718H1010V719H1011V718H1012V719H1020V718H1021V719H1023V718H1024V719H1034V718H1035V719H1037V718H1041V719H1042V718H1044V719H1045V718H1046V719H1049V718H1050V719H1053V718H1054V719H1060V718H1061V719H1064V718H1065V719H1066V718H1068V719H1069V718H1070V719H1072V718H1073V719H1074V718H1075V719H1079V718H1080V719H1082V718H1083V719H1085V718H1088V719H1094V718H1095V719H1096V718H1097V719H1107V718H1108V719H1112V718H1114V719H1116V718H1117V719H1122V718H1123V719H1127V718H1128V719H1134V718H1136V719H1140V718H1141V719H1143V718H1144V719H1153V718H1154V719H1156V718H1158V719H1159V718H1160V719H1161V718H1162V719H1168V718H1169V719H1171V718H1172V719H1173V718H1177V719H1178V718H1179V719H1183V718H1184V719H1188V717H1189V718H1190V719H1194V718H1195V719H1196V718H1197V719H1203V718H1205V719H1207V718H1208V719H1210V718H1212V719H1213V723H1210V722H1209V723H1207V722H1206V723H1198V722H1196V723H1179V724H1178V723H1176V722H1174V723H1170V722H1168V723H1155V724H1154V723H1125V724H1124V723H1120V722H1119V723H1118V722H1116V723H1115V722H1114V724H1113V723H1111V722H1110V723H1102V722H1101V723H1091V722H1090V723H1089V724H1088V723H1086V722H1085V723H1077V724H1076V723H1072V724H1071V723H1057V722H1055V723H1052V722H1050V723H1046V722H1045V724H1044V723H1035V722H1034V723H1032V722H1031V723H1021V722H1020V723H1017V722H1016V723H1003V722H1002V723H989V722H988V723H986V722H985V723H982V722H981V723H977V724H976V723H968V724H967V723H966V724H965V722H964V723H957V722H955V723H945V722H944V723H942V724H941V723H937V722H936V723H930V722H929V723H906V722H905V723H904V724H903V723H896V722H895V723H883V722H881V723H874V722H873V723H868V722H866V723H859V722H858V723H851V722H850V723H849V724H848V723H847V722H846V723H834V722H833V723H821V722H820V723H816V722H815V723H811V722H810V723H809V722H808V723H790V722H789V723H781V722H780V723H778V722H776V724H775V723H774V722H771V723H769V724H768V723H767V722H766V723H757V722H756V723H749V722H748V723H745V724H744V723H724V722H723V723H716V724H715V723H714V722H713V723H704V722H703V723H693V724H692V723H685V722H684V723H680V724H679V723H667V724H666V723H665V724H664V723H662V725H661V724H658V723H657V724H656V723H645V722H644V723H638V722H637V723H623V722H622V725H621V723H620V724H618V723H617V724H616V723H612V722H610V724H609V722H608V723H606V724H605V723H572V722H571V723H555V722H554V723H550V724H549V723H539V722H538V723H527V722H526V723H524V722H523V723H521V722H520V723H513V722H512V724H511V723H510V722H508V723H499V722H498V723H495V724H494V723H491V724H490V723H487V722H486V723H477V724H476V723H475V722H474V723H472V722H471V723H467V722H466V723H461V722H460V723H459V722H458V723H449V724H448V723H446V724H445V723H436V722H435V723H432V724H431V723H424V722H423V723H406V724H405V723H402V722H401V723H393V722H392V723H388V722H387V723H381V724H380V723H376V722H375V723H352V722H351V723H350V722H349V723H348V722H347V723H342V722H341V723H340V722H339V723H331V722H330V723H328V724H326V723H320V724H319V723H301V722H300V723H291V724H290V723H286V722H285V723H282V722H281V723H277V722H276V723H272V722H271V723H269V722H268V723H266V722H264V723H262V722H261V723H257V722H256V723H249V722H248V723H244V722H243V724H242V723H239V722H238V723H235V722H234V723H224V722H223V723H222V722H221V723H212V722H211V723H198V722H197V723H187V724H186V723H183V722H182V723H179V724H178V723H176V722H175V723H173V722H172V723H170V722H169V723H164V722H162V723H153V724H152V723H149V722H148V723H146V722H145V723H140V724H139V723H138V722H137V723H132V722H131V723H129V722H128V723H126V722H125V723H124V722H123V723H120V724H119V722H118V723H116V722H114V723H113V722H112V723H111V724H110V723H103V722H102V723H101V722H100V723H88Z"/><path d="M88 750H89V749H90V750H92V749H96V750H99V749H100V750H102V749H104V750H105V749H106V750H107V749H108V750H109V749H110V750H111V749H112V750H115V749H117V750H118V749H119V750H120V749H121V750H122V749H123V750H125V749H129V750H131V749H132V750H133V749H135V750H136V749H137V750H140V749H143V750H145V749H148V750H149V749H151V750H152V749H154V750H156V749H158V750H159V749H162V750H163V749H164V750H166V749H167V750H170V749H171V750H172V749H173V750H175V744H176V748H177V749H178V748H179V749H180V750H181V748H182V750H183V749H186V750H187V749H190V750H191V748H192V749H198V750H201V749H202V750H205V749H206V750H207V749H208V750H215V749H217V750H219V749H221V750H222V749H223V750H225V749H228V750H232V749H233V750H235V749H236V750H237V749H238V750H239V749H240V750H244V749H246V750H249V749H250V750H251V749H252V750H255V749H258V750H259V749H261V748H262V749H264V750H267V749H268V750H270V749H280V750H281V749H282V750H283V749H285V750H286V749H288V750H290V749H291V750H293V749H297V750H300V748H301V749H303V750H307V749H311V750H312V749H316V750H317V749H318V750H322V749H323V750H324V749H325V750H326V749H329V750H334V748H335V750H337V749H338V750H339V749H341V750H342V749H346V750H348V749H350V750H351V749H357V750H358V749H359V750H361V749H363V750H364V749H365V750H366V749H367V750H372V749H373V750H374V749H375V750H376V749H378V750H381V749H382V750H383V749H385V750H387V749H389V750H390V749H392V750H393V749H394V750H396V749H399V750H400V749H401V750H404V749H406V750H408V749H412V750H413V749H414V750H415V749H416V750H417V749H418V750H419V749H420V750H426V749H427V750H429V749H430V750H436V749H438V750H439V749H441V750H445V749H446V750H452V749H453V750H454V749H457V750H458V749H459V750H460V749H461V750H463V749H464V750H465V749H467V750H469V749H475V750H476V749H477V750H478V749H480V750H482V748H483V749H484V750H486V749H488V750H490V749H491V750H492V749H494V750H495V749H498V748H499V749H505V750H506V749H510V750H512V749H513V750H514V749H515V750H517V749H518V748H519V749H522V750H523V749H524V750H526V749H528V750H529V749H531V750H532V749H534V750H539V749H540V750H542V749H543V750H545V749H546V750H547V749H550V750H553V749H555V750H558V749H561V750H564V749H565V750H566V749H569V750H570V749H573V750H574V749H576V750H578V749H579V750H583V749H584V750H585V749H588V750H590V749H591V750H593V749H594V748H595V750H597V748H598V750H599V749H600V750H601V749H602V750H603V749H604V750H606V749H607V750H608V749H609V750H612V749H614V750H616V749H618V748H619V750H620V749H623V750H624V749H627V748H628V749H632V750H634V749H637V750H638V749H642V750H644V749H646V750H649V749H651V750H654V749H655V750H658V749H660V750H663V749H664V750H666V749H667V750H668V749H670V750H672V749H677V748H678V749H681V750H684V749H685V750H689V749H691V750H692V749H695V750H696V749H697V750H701V749H706V750H710V749H712V750H714V749H716V750H718V749H719V750H727V749H728V750H730V749H733V750H734V749H738V750H739V749H740V750H742V749H743V750H747V749H748V750H752V749H753V750H755V749H757V750H758V749H761V750H762V749H765V750H766V749H767V750H768V749H773V750H774V749H775V748H776V750H777V749H778V750H781V749H782V750H784V749H787V750H788V749H789V750H791V749H797V750H798V749H800V750H802V749H803V750H804V749H806V750H808V749H809V750H810V749H812V750H813V749H814V750H815V749H816V750H817V749H818V750H821V749H822V750H823V749H824V750H825V749H826V750H828V749H830V750H832V749H834V750H838V749H839V750H845V749H846V750H849V749H851V750H854V749H856V750H858V749H860V748H861V749H862V750H866V749H867V750H868V749H870V750H871V749H872V750H873V749H875V750H877V749H879V750H880V749H882V750H883V749H884V750H885V749H889V750H892V749H896V750H897V749H898V750H899V749H900V750H901V749H906V750H910V749H911V750H915V749H918V750H919V749H923V750H924V749H925V750H926V749H927V750H928V749H931V750H932V749H934V750H935V749H936V750H941V749H942V750H943V749H947V750H949V749H951V750H952V748H953V749H954V750H955V749H956V750H961V749H962V750H964V749H965V750H966V749H967V750H969V749H973V750H974V749H975V750H976V749H977V750H979V749H981V750H983V749H984V750H985V749H990V750H991V749H993V750H995V748H996V750H998V749H999V748H1000V750H1002V749H1003V750H1004V749H1005V750H1008V749H1009V750H1010V749H1011V750H1013V748H1014V749H1016V750H1017V749H1021V750H1022V749H1023V750H1025V749H1027V750H1030V749H1033V750H1035V749H1036V750H1038V749H1039V750H1040V749H1041V750H1044V749H1045V750H1048V749H1052V750H1053V749H1055V750H1056V749H1057V748H1058V750H1060V749H1061V750H1062V749H1064V750H1065V749H1069V750H1071V749H1078V750H1079V749H1080V750H1081V749H1084V750H1087V749H1088V750H1089V748H1090V750H1092V749H1093V750H1094V749H1095V750H1096V749H1098V750H1100V749H1101V750H1106V749H1108V750H1109V749H1111V750H1116V749H1118V750H1119V749H1121V750H1122V749H1124V750H1126V748H1127V750H1128V749H1129V750H1130V749H1132V750H1137V749H1138V750H1141V749H1143V750H1144V749H1146V750H1147V749H1148V750H1150V749H1151V750H1152V749H1155V750H1161V749H1162V750H1163V749H1164V750H1167V749H1168V750H1169V749H1170V750H1172V749H1174V750H1177V749H1178V750H1179V749H1180V750H1181V749H1182V750H1185V749H1189V750H1191V749H1194V748H1195V749H1199V750H1200V749H1207V750H1208V749H1209V750H1211V749H1212V750H1213V754H1211V753H1206V754H1205V753H1201V754H1199V753H1196V754H1195V753H1193V754H1188V753H1187V754H1185V753H1183V754H1182V753H1181V755H1180V753H1171V754H1170V753H1168V754H1166V753H1163V754H1162V753H1161V754H1158V753H1157V754H1156V753H1155V754H1152V753H1150V754H1148V753H1147V754H1146V753H1143V754H1141V753H1138V754H1137V753H1136V754H1133V753H1132V754H1130V753H1129V754H1125V753H1123V754H1120V753H1115V754H1114V753H1112V754H1110V753H1109V754H1107V753H1106V754H1105V753H1101V754H1100V753H1099V754H1097V753H1094V754H1092V753H1090V754H1089V753H1083V754H1081V753H1080V754H1077V753H1076V754H1075V753H1073V754H1072V753H1071V754H1067V753H1062V754H1057V753H1054V754H1053V753H1051V755H1050V753H1046V754H1044V753H1042V754H1041V753H1040V754H1038V753H1034V754H1032V753H1031V754H1029V753H1028V754H1026V753H1018V754H1017V753H1014V754H1013V753H1012V754H1010V753H1009V754H1008V753H1005V754H1004V753H1003V754H1002V753H1001V754H1000V753H997V754H996V753H995V754H993V753H990V754H988V753H984V754H983V753H974V754H973V753H970V754H969V753H966V754H965V753H964V754H962V753H960V754H959V753H957V755H956V754H954V753H950V754H948V753H946V754H942V753H941V754H939V753H937V754H936V753H935V754H934V753H933V754H932V753H931V754H930V753H928V754H927V753H926V754H925V753H923V754H921V753H920V754H917V753H914V754H910V753H906V754H905V753H903V754H902V753H901V754H899V753H898V754H896V753H891V754H890V753H887V754H886V753H885V754H884V753H883V754H882V753H881V754H879V753H877V754H876V753H872V754H871V753H868V754H866V753H865V754H864V753H863V754H861V753H859V754H857V753H855V754H854V753H849V755H848V754H847V753H846V754H844V753H843V754H842V753H841V754H840V753H838V754H837V753H833V754H831V753H829V754H827V753H826V754H825V753H824V754H823V753H820V754H817V753H816V754H815V753H810V754H809V753H808V754H807V753H806V754H805V753H804V754H802V753H800V754H796V753H795V754H794V753H793V754H791V753H790V754H789V753H788V754H787V753H786V754H784V753H781V754H780V753H779V754H776V753H761V754H759V753H758V754H756V753H752V754H750V753H744V754H743V753H739V754H738V753H737V754H731V753H729V754H727V753H723V754H722V753H720V754H719V753H715V754H714V753H706V754H704V753H703V754H701V753H698V754H693V753H692V754H691V753H690V754H688V753H684V754H682V753H681V754H680V753H677V754H676V753H675V754H674V753H672V754H671V753H670V754H667V753H666V754H665V753H661V754H660V753H659V754H658V753H656V754H655V753H654V754H653V753H649V754H648V753H646V754H643V753H642V754H641V753H636V754H635V753H632V754H631V753H630V754H627V753H626V754H625V753H618V754H616V753H615V754H611V753H607V754H606V753H605V754H604V753H603V754H602V753H597V755H596V754H595V753H593V754H591V753H589V754H588V753H586V754H584V753H581V754H577V753H575V754H572V753H568V754H566V753H565V754H564V753H560V754H559V753H557V754H554V753H553V754H552V753H551V754H550V755H549V754H548V753H546V755H545V754H544V753H541V754H540V753H538V754H537V753H536V754H534V753H533V754H532V753H528V754H527V753H524V754H523V753H522V754H521V753H519V754H518V753H517V755H516V753H513V754H512V753H508V755H507V753H506V754H505V753H500V754H499V753H498V754H495V753H494V754H493V753H492V754H491V753H490V754H487V753H484V754H483V753H479V754H478V753H474V754H472V753H468V755H467V753H464V754H463V753H461V754H460V753H459V754H457V753H455V754H453V753H450V754H449V753H448V754H447V753H443V754H442V753H437V754H436V753H434V754H432V753H429V754H426V753H423V754H420V753H416V754H415V753H412V754H411V755H410V753H406V754H402V753H400V754H397V753H396V754H395V753H394V754H393V753H391V754H390V755H389V754H388V753H387V754H385V753H384V754H383V753H378V754H377V753H374V754H372V753H371V754H369V753H368V754H364V753H363V754H361V753H360V754H359V753H356V754H354V753H353V754H351V753H348V754H347V753H345V754H338V753H335V754H332V753H331V754H330V753H325V754H323V755H322V754H321V753H320V755H319V753H318V754H317V753H309V754H306V753H305V754H303V753H297V754H296V753H295V754H293V753H292V754H291V753H289V754H288V753H285V754H284V753H283V754H282V753H280V754H279V753H278V754H277V753H275V754H274V753H273V754H272V753H271V754H269V753H267V754H266V753H265V754H263V753H262V754H261V753H260V754H259V753H257V754H254V753H251V754H249V753H248V754H246V753H245V754H243V753H236V754H234V753H233V754H231V753H227V754H225V753H224V754H223V755H222V754H221V753H220V754H219V753H218V754H217V753H212V754H211V753H203V754H200V753H199V754H193V753H192V754H191V753H189V754H188V753H186V754H183V755H182V753H181V754H177V753H176V759H175V753H174V754H173V756H171V753H170V754H169V755H168V754H167V755H166V753H165V754H164V753H162V754H161V753H160V754H159V753H153V754H152V753H149V754H148V753H147V754H146V753H145V754H141V753H135V754H134V753H131V754H130V753H127V754H126V753H121V754H116V753H115V755H114V753H113V754H112V753H105V754H104V753H103V754H101V753H100V754H99V753H92V754H88Z"/><path d="M88 779H90V778H91V780H93V779H94V780H97V779H99V778H100V780H103V778H104V779H105V780H110V778H111V780H114V779H116V780H120V779H123V780H128V779H129V780H132V779H135V780H137V779H138V780H140V779H142V780H144V779H145V780H148V779H150V780H156V779H158V780H160V778H161V780H164V779H165V780H170V779H171V780H172V779H176V780H183V779H186V780H189V779H192V780H195V779H197V780H201V779H202V780H203V779H204V780H206V779H207V780H208V779H209V780H214V779H216V780H217V779H219V780H220V779H221V780H223V779H224V780H225V779H226V780H227V779H228V780H238V779H239V780H240V778H241V779H242V780H243V779H244V780H252V779H254V780H256V779H260V780H261V779H263V780H267V779H268V780H271V779H272V778H273V780H274V779H277V780H282V779H283V780H288V779H290V780H294V779H296V780H300V779H302V780H304V779H306V780H309V779H311V780H312V779H314V780H319V779H320V780H325V779H327V780H330V779H331V780H333V779H334V780H335V779H336V780H337V778H338V779H340V780H341V779H342V780H343V779H344V780H346V779H347V780H348V779H349V780H351V779H353V780H354V779H356V780H358V779H360V780H361V779H362V780H363V779H364V780H365V779H366V780H369V779H370V778H371V780H374V779H375V780H378V779H379V780H387V779H389V780H390V779H391V780H392V779H393V780H396V779H397V780H398V779H399V780H403V779H404V780H405V779H406V780H407V778H408V779H409V780H411V779H412V780H414V779H415V780H417V779H420V780H425V779H426V780H428V779H430V780H431V779H432V780H433V779H435V780H440V779H441V780H442V779H443V780H444V779H445V780H447V779H448V780H449V779H451V780H452V779H453V780H455V779H456V780H458V779H461V780H462V779H463V780H464V779H465V780H468V779H469V780H470V779H472V778H473V779H475V780H478V779H479V780H483V779H484V780H485V779H486V780H487V779H488V780H496V779H497V778H498V780H506V779H507V780H512V779H513V780H517V778H518V780H520V779H521V780H530V779H532V780H533V779H534V780H536V779H538V780H540V779H541V780H542V779H543V780H549V779H550V780H551V779H552V780H556V779H557V780H558V779H560V780H565V779H567V780H570V779H572V780H575V779H576V780H577V779H579V780H581V779H582V780H585V779H586V780H593V779H595V780H596V779H597V780H599V779H601V780H602V779H604V780H605V779H606V780H607V779H608V780H609V779H610V780H611V779H612V780H614V779H615V780H621V779H622V780H623V779H624V780H628V779H630V780H632V779H635V780H638V779H640V780H644V779H645V780H648V779H650V780H652V779H653V780H654V779H655V780H666V779H668V780H669V779H671V780H674V779H675V780H676V779H677V780H678V778H679V779H681V780H684V779H685V780H692V779H693V780H694V779H696V780H698V779H699V780H700V779H701V780H705V779H706V780H707V779H709V780H710V779H711V780H713V779H714V780H715V779H716V780H717V779H718V780H719V779H722V780H726V779H727V780H729V779H730V780H732V779H733V780H736V779H739V780H740V779H741V780H744V779H745V780H750V779H751V780H754V779H755V780H756V779H758V780H760V779H761V780H763V779H764V780H767V779H768V780H769V779H772V778H773V780H774V779H775V780H776V779H778V780H779V779H781V780H786V779H788V780H790V779H791V780H792V779H793V780H799V779H805V780H807V779H808V780H809V779H810V780H812V779H813V780H819V779H821V780H823V779H825V778H826V780H830V778H831V780H836V779H837V780H839V778H840V779H841V780H846V779H848V780H857V779H859V780H862V779H863V780H864V779H865V780H868V779H869V780H870V779H872V780H876V779H877V780H879V779H881V780H882V779H885V780H889V779H891V780H892V779H893V780H895V779H896V780H897V779H899V780H901V779H903V780H906V779H907V778H908V780H909V779H910V780H912V779H915V778H916V779H917V780H919V779H921V780H926V779H928V780H929V779H930V780H933V779H935V780H936V779H937V780H939V779H940V780H941V779H943V780H946V779H950V780H951V779H952V780H953V779H955V780H957V779H958V780H961V779H962V780H963V779H964V780H965V779H966V780H970V779H972V780H974V779H975V780H976V779H977V780H979V779H980V780H982V779H984V780H985V779H988V780H989V779H991V780H996V779H997V780H1001V779H1002V780H1003V779H1004V780H1006V779H1008V780H1012V779H1013V780H1014V779H1015V780H1020V779H1021V780H1023V779H1026V780H1029V779H1030V780H1031V779H1032V780H1033V779H1034V780H1035V779H1040V780H1045V779H1046V780H1048V779H1049V780H1052V779H1053V780H1055V779H1056V780H1057V779H1059V780H1060V779H1062V780H1063V779H1064V780H1068V779H1069V780H1070V779H1071V780H1073V779H1074V780H1079V779H1084V780H1086V779H1087V780H1090V779H1091V780H1098V779H1099V780H1100V779H1101V780H1103V779H1104V780H1105V779H1106V780H1107V779H1109V780H1110V779H1111V778H1112V780H1114V779H1115V780H1120V779H1123V780H1124V779H1125V780H1127V779H1128V780H1129V779H1130V780H1131V779H1132V780H1134V779H1136V780H1137V779H1138V780H1142V779H1143V780H1146V779H1147V780H1154V779H1156V780H1157V779H1158V780H1164V779H1166V780H1167V779H1168V780H1169V779H1175V780H1179V779H1180V780H1184V779H1185V780H1188V779H1189V780H1191V779H1196V780H1202V778H1203V779H1204V780H1205V779H1206V780H1207V779H1209V780H1210V779H1212V780H1213V784H1211V783H1210V784H1205V783H1203V784H1184V783H1181V784H1180V783H1179V784H1175V783H1174V784H1171V783H1170V784H1168V783H1167V784H1162V783H1161V784H1160V783H1158V784H1151V783H1150V784H1149V783H1148V784H1146V783H1145V784H1143V785H1142V784H1140V783H1139V784H1135V783H1134V784H1130V783H1128V784H1123V783H1122V784H1121V783H1120V784H1116V783H1115V784H1111V783H1110V784H1106V783H1105V784H1102V783H1100V784H1098V783H1096V784H1094V783H1091V784H1087V783H1083V784H1082V783H1081V784H1080V783H1078V784H1066V783H1065V784H1056V785H1055V784H1052V783H1050V784H1047V783H1045V784H1039V783H1036V784H1034V783H1033V784H1032V783H1031V784H1028V785H1027V784H1023V783H1022V784H1018V783H1014V784H1010V783H1009V784H1008V785H1006V784H1005V783H1004V784H1003V783H1002V784H1001V783H1000V784H994V783H987V784H986V785H985V783H984V784H983V783H982V784H979V783H978V784H966V783H965V784H964V783H963V784H959V783H958V784H954V783H953V784H950V783H948V784H939V785H938V784H935V783H933V784H930V783H929V784H925V783H923V784H918V783H917V784H915V783H914V784H911V783H909V784H906V783H905V784H899V785H898V784H897V783H896V784H895V783H894V784H889V783H888V784H887V783H884V784H883V783H882V784H880V783H878V784H875V783H874V784H873V783H872V784H866V785H865V784H863V783H862V784H860V783H859V785H858V784H856V783H854V784H853V783H851V784H850V783H848V784H846V783H845V784H844V783H843V784H840V785H839V783H838V784H836V783H835V784H829V783H828V784H823V783H822V784H821V783H820V784H819V783H818V784H814V783H812V784H811V783H807V784H804V785H803V784H802V783H801V784H798V783H797V784H795V783H794V784H791V783H790V784H787V783H786V784H781V785H780V784H772V783H771V784H767V783H766V784H765V783H761V784H760V783H759V784H753V783H752V784H747V783H746V784H740V783H739V784H736V783H734V784H733V783H731V784H729V783H728V784H723V783H722V784H721V783H720V784H716V783H715V784H714V783H713V784H712V783H711V784H707V783H706V784H702V783H701V784H699V785H698V784H697V783H696V784H693V783H692V784H688V783H687V784H685V783H684V784H683V783H682V784H679V786H678V783H677V784H671V783H670V784H669V783H668V784H667V785H666V784H665V783H663V784H659V783H658V784H655V783H654V784H644V783H643V784H640V783H638V784H637V783H636V784H630V785H629V784H627V783H625V784H624V783H622V784H619V783H617V784H612V783H611V784H603V783H602V784H601V783H600V784H599V783H598V784H597V783H596V784H595V783H594V784H593V783H592V784H590V783H589V784H584V783H583V784H582V785H581V783H580V784H576V783H575V784H574V785H573V783H571V784H570V783H569V784H568V785H567V784H565V783H564V784H563V783H562V785H561V784H560V783H558V784H550V783H549V784H548V785H547V784H546V783H544V784H538V783H537V784H533V783H532V784H530V783H529V784H522V783H518V785H517V784H514V783H513V784H512V783H511V784H505V783H504V784H503V783H502V784H500V783H499V784H497V783H496V784H493V783H490V784H489V783H488V784H487V783H486V784H485V783H484V784H483V783H482V784H481V783H480V784H478V783H477V784H476V783H475V784H470V785H469V783H468V784H466V783H464V784H463V783H462V784H451V783H449V784H443V783H441V784H434V783H433V784H431V783H430V784H427V785H426V784H424V783H423V784H420V783H419V784H415V783H414V784H413V783H412V784H411V783H410V784H409V785H408V784H407V783H406V784H400V783H399V784H397V785H396V784H395V783H394V784H389V783H388V784H375V783H373V784H363V785H362V784H358V783H357V784H356V783H355V784H353V783H352V785H351V783H350V784H345V783H344V785H343V783H342V784H341V783H340V784H339V783H338V784H336V783H334V784H332V783H331V784H330V783H329V784H327V783H326V784H322V783H320V784H318V783H317V784H315V783H314V784H309V783H308V784H302V783H301V784H298V783H295V784H294V783H292V784H288V783H287V784H286V783H285V784H284V783H283V784H281V783H278V784H275V783H272V784H271V783H270V784H268V785H267V784H265V783H264V785H263V784H261V783H260V784H256V783H254V784H248V783H247V784H246V783H245V784H244V783H241V784H239V783H238V784H232V783H230V784H228V783H224V784H220V783H219V784H218V783H217V784H216V783H213V784H211V783H210V784H208V783H207V784H203V783H200V784H188V783H187V784H186V783H185V784H183V785H182V783H180V784H174V783H173V784H168V783H164V784H155V783H154V784H151V783H150V784H148V783H147V784H146V783H145V784H142V783H140V784H138V785H137V783H136V784H126V783H125V784H121V783H120V784H115V783H110V784H105V783H104V784H101V785H100V784H91V785H89V784H88Z"/><path d="M88 810H91V809H92V810H93V809H94V810H97V809H98V810H120V809H121V810H125V809H127V810H132V809H133V810H138V809H141V810H143V809H144V810H150V809H151V810H156V809H157V810H158V809H159V810H162V808H163V809H164V810H166V809H167V810H174V809H175V810H176V809H177V810H178V809H179V810H183V809H184V810H189V809H191V810H192V809H193V810H206V809H207V810H208V809H209V810H214V809H215V810H218V809H222V810H227V809H228V810H230V808H231V810H237V809H238V810H240V809H241V810H245V809H246V810H251V809H252V810H258V809H259V810H268V809H269V810H270V809H272V810H274V809H275V810H276V809H278V810H281V809H284V810H285V809H286V810H288V809H289V810H291V809H292V810H295V809H296V810H297V809H298V810H301V809H302V810H303V809H305V810H308V809H309V810H319V809H320V810H328V809H329V810H334V809H335V810H337V809H338V810H340V809H341V810H361V809H362V810H363V809H364V810H367V809H368V810H372V809H373V810H374V809H376V810H381V809H382V810H397V809H398V810H401V809H402V810H403V809H405V810H415V809H416V810H419V809H420V810H425V809H430V810H432V809H436V810H438V809H439V810H443V809H444V810H452V809H453V810H456V809H457V810H460V809H461V810H487V809H488V810H492V809H493V810H499V809H500V810H502V809H504V810H510V808H511V810H516V809H517V810H518V809H519V810H525V809H526V810H528V808H529V810H532V809H533V810H536V809H537V810H539V809H540V810H546V809H548V810H549V809H550V810H553V808H554V810H556V809H557V810H562V809H563V810H566V809H567V810H576V809H577V810H588V809H589V810H592V809H593V810H598V809H599V810H600V809H601V810H602V809H603V810H613V809H614V810H615V809H617V810H621V809H622V810H626V808H627V810H628V809H630V810H639V809H640V810H646V809H647V810H652V809H653V810H660V809H662V810H663V809H664V810H668V809H669V810H673V809H674V810H686V809H687V810H696V809H697V810H706V809H707V810H708V809H710V810H713V809H715V810H719V809H721V810H731V809H732V810H738V809H739V810H753V809H754V810H761V809H765V810H767V809H768V810H769V809H770V810H776V809H777V810H783V809H785V810H788V809H789V810H792V809H795V810H796V809H798V810H799V809H801V810H802V809H805V810H821V809H822V810H827V809H828V810H831V809H832V810H833V809H834V810H838V809H839V810H840V809H842V810H857V809H858V810H865V809H868V808H869V810H870V809H871V810H874V809H876V810H891V809H894V810H895V809H896V810H897V809H898V810H903V809H904V810H909V809H910V810H917V809H919V810H926V809H928V810H931V809H932V810H933V809H935V810H936V809H937V810H952V809H953V810H959V809H960V810H967V809H969V810H980V809H981V810H987V808H988V810H993V808H994V810H997V809H998V810H1003V809H1004V810H1012V809H1015V810H1016V809H1017V810H1020V809H1021V810H1022V809H1023V810H1024V809H1025V810H1037V809H1038V810H1040V809H1041V810H1044V809H1045V810H1046V809H1047V810H1051V809H1052V810H1061V809H1062V810H1063V809H1064V810H1068V809H1069V810H1075V809H1077V810H1080V809H1081V810H1082V809H1084V810H1085V809H1086V810H1088V809H1089V810H1090V809H1091V810H1097V809H1098V810H1105V809H1106V810H1109V809H1110V810H1114V809H1115V810H1134V808H1135V810H1137V809H1139V810H1144V809H1145V810H1147V809H1148V810H1166V809H1167V810H1171V809H1172V810H1179V809H1180V810H1181V809H1182V810H1189V809H1191V810H1195V809H1196V810H1199V809H1200V810H1206V809H1207V810H1209V809H1210V810H1213V815H1212V814H1208V815H1207V814H1202V815H1200V814H1195V815H1194V814H1192V815H1191V814H1189V815H1188V814H1184V815H1183V814H1182V815H1181V814H1179V815H1178V814H1177V815H1176V814H1170V815H1167V814H1166V815H1165V814H1162V815H1161V814H1157V815H1156V814H1155V815H1154V814H1150V815H1149V814H1145V815H1144V814H1143V815H1142V814H1119V815H1118V814H1115V815H1114V814H1112V815H1111V814H1109V815H1107V814H1106V815H1105V814H1102V815H1101V814H1098V815H1097V814H1088V815H1087V814H1085V815H1084V814H1080V815H1079V814H1075V815H1074V814H1069V815H1068V814H1067V815H1066V814H1052V815H1050V814H1044V815H1043V814H1039V815H1038V814H1034V815H1033V814H1031V815H1030V814H1026V815H1025V814H1023V815H1022V814H1020V815H1019V814H1018V815H1016V814H1006V815H1005V814H1002V815H1001V814H1000V815H999V814H997V815H996V814H995V815H994V814H982V815H981V814H978V815H977V814H970V815H969V814H952V815H950V814H946V815H945V814H937V815H936V814H934V815H933V814H932V815H930V814H922V815H920V814H919V815H917V814H912V815H911V814H909V816H908V814H900V815H899V814H898V815H896V814H893V815H892V814H886V815H885V814H884V815H882V814H880V815H875V814H870V815H868V814H867V816H866V815H865V814H862V815H861V814H852V815H851V814H850V815H848V814H845V815H844V814H840V815H839V814H836V815H835V814H834V815H833V814H832V815H831V814H814V815H813V814H810V815H809V814H794V815H793V814H788V815H787V814H785V815H784V814H780V815H779V814H778V815H777V814H775V815H774V814H771V815H769V814H768V815H767V814H766V815H765V814H755V815H754V814H737V815H736V814H734V815H733V814H732V815H731V814H727V815H726V814H725V815H724V814H721V815H720V814H717V815H716V814H715V815H714V814H712V815H711V814H706V816H705V814H704V815H702V814H699V815H697V814H691V815H690V814H683V815H682V814H670V815H669V814H662V815H661V814H656V816H655V815H654V814H653V815H652V814H650V815H648V814H640V815H639V814H636V815H635V814H632V815H630V814H620V815H619V814H615V815H614V814H609V816H608V814H607V815H606V814H604V815H603V814H602V815H601V814H597V815H595V814H574V815H573V814H569V815H568V814H565V815H564V814H560V815H558V814H556V815H555V814H552V815H551V814H550V815H549V814H546V815H545V814H542V815H540V814H536V815H535V814H533V815H532V814H519V815H518V814H514V815H513V814H509V816H508V815H507V814H503V815H501V814H497V815H496V814H491V815H490V814H489V815H488V814H478V815H476V814H475V815H474V816H473V815H472V814H469V815H468V814H463V815H461V814H456V815H455V814H452V815H451V814H449V815H448V814H444V815H441V814H439V815H438V814H437V815H436V814H427V815H425V814H423V815H422V814H419V815H418V814H411V815H410V814H407V815H406V814H400V815H399V814H388V816H387V814H385V815H384V814H383V815H382V814H378V815H377V814H375V815H372V814H369V815H367V814H365V815H364V814H363V815H362V814H359V815H358V814H354V815H353V814H346V815H342V814H338V815H337V814H336V815H335V814H330V815H329V814H324V815H321V814H320V815H318V814H315V815H314V814H312V815H310V814H305V815H304V814H300V815H299V814H296V815H294V814H293V815H291V814H286V815H285V814H280V815H279V814H270V815H269V814H255V815H254V814H253V815H251V814H249V815H248V814H247V815H246V814H244V815H243V814H241V815H239V814H238V815H237V814H236V815H235V814H220V815H215V814H214V815H212V814H207V815H205V814H204V815H203V814H201V815H200V814H184V815H183V814H176V815H175V814H173V815H172V814H171V815H170V814H167V815H166V814H158V815H156V814H152V815H151V814H149V815H148V814H143V815H142V814H137V815H136V814H134V816H133V815H130V814H127V815H126V814H120V815H119V814H118V815H117V814H116V815H115V814H113V815H111V814H109V815H108V814H106V815H105V814H101V815H100V814H97V815H96V814H95V815H94V814H90V815H88Z"/><path d="M88 840H104V839H105V840H110V841H111V839H112V840H121V841H122V840H123V841H124V840H127V841H128V840H138V839H139V840H143V839H144V840H145V841H146V840H155V841H156V840H157V841H158V840H159V841H160V840H162V841H163V840H167V841H168V840H186V841H187V840H191V839H192V840H195V841H196V840H201V839H203V840H204V837H205V839H206V840H212V841H213V840H215V841H216V840H221V841H222V840H225V841H226V840H236V841H237V840H243V841H245V840H251V841H253V840H256V841H257V840H259V841H261V840H262V841H263V840H264V841H265V840H266V841H267V840H271V841H273V840H278V839H279V840H284V841H285V840H291V841H292V840H303V839H304V840H315V841H317V840H320V841H321V840H330V841H331V840H333V841H334V840H344V841H345V840H348V841H349V840H350V841H351V840H356V841H358V840H361V841H362V840H364V839H365V840H377V841H378V840H379V841H380V840H381V839H382V841H384V840H387V841H388V840H392V839H393V840H394V841H395V840H398V841H399V840H402V841H403V840H410V841H411V840H414V841H415V840H417V841H418V840H421V839H422V840H423V841H424V840H436V841H437V840H440V841H441V840H444V841H445V839H446V840H448V841H449V840H451V841H453V840H454V841H455V840H469V841H470V840H475V841H480V840H483V839H484V840H485V841H486V840H491V841H492V840H495V841H497V839H498V840H499V841H500V840H502V841H504V840H505V841H507V840H510V839H511V840H515V841H516V840H520V841H522V840H529V841H530V840H531V841H533V840H539V841H540V840H541V841H542V840H548V841H549V840H564V839H565V840H569V839H570V840H578V839H579V840H581V841H583V840H590V841H591V840H593V841H595V840H598V841H599V840H604V841H605V840H607V841H609V840H623V841H624V839H625V841H626V840H637V841H638V840H643V841H644V840H652V839H653V840H658V841H659V840H664V841H666V839H667V840H672V841H673V840H682V841H683V840H686V841H687V840H696V841H698V840H699V841H700V840H708V841H709V840H711V839H712V840H715V841H716V840H720V841H721V840H728V841H729V840H737V841H738V840H741V841H742V840H749V841H750V840H752V841H753V839H754V840H757V841H758V840H765V839H766V840H771V839H772V840H773V839H774V840H777V841H778V839H779V840H780V841H781V840H784V841H785V840H789V839H791V841H792V838H793V840H794V839H795V840H799V841H800V840H801V841H803V840H815V841H816V840H819V839H820V840H826V841H827V840H828V841H829V840H834V841H835V840H839V839H840V840H847V841H848V839H849V840H852V841H853V840H859V841H860V840H862V841H863V840H868V839H869V840H872V841H874V840H881V839H882V840H885V841H886V840H891V841H892V840H898V841H899V839H900V840H902V841H903V840H910V841H911V839H912V840H916V839H917V840H922V841H923V840H928V841H929V840H935V841H937V840H938V841H939V840H943V841H944V840H946V839H947V840H950V841H953V840H959V839H960V840H961V841H962V840H990V841H991V840H1004V841H1007V840H1009V841H1010V840H1019V839H1020V840H1021V841H1022V840H1026V841H1027V840H1038V841H1039V840H1040V841H1041V840H1054V841H1055V840H1057V841H1059V840H1062V841H1064V840H1075V841H1076V840H1094V839H1095V840H1096V839H1097V838H1098V841H1099V839H1100V838H1101V839H1102V840H1106V841H1107V840H1108V841H1109V840H1120V841H1121V840H1122V841H1123V840H1128V839H1129V840H1132V841H1133V840H1144V841H1145V840H1153V841H1154V840H1155V839H1156V840H1163V841H1164V839H1165V840H1169V839H1170V840H1174V841H1175V840H1184V841H1185V840H1200V841H1201V840H1213V845H1210V844H1205V845H1204V844H1202V845H1201V844H1189V845H1188V844H1184V845H1182V844H1177V845H1176V844H1167V845H1166V844H1164V845H1163V844H1155V845H1153V844H1152V845H1150V844H1149V845H1147V844H1137V845H1133V844H1130V845H1129V844H1128V845H1126V844H1125V845H1124V844H1122V845H1121V844H1119V845H1118V844H1117V845H1116V844H1109V845H1108V844H1104V845H1102V847H1101V846H1100V844H1099V845H1096V844H1092V845H1091V844H1090V845H1089V844H1088V845H1087V844H1086V845H1085V844H1078V845H1076V844H1073V845H1072V844H1071V845H1069V844H1068V845H1067V844H1062V845H1061V844H1053V845H1052V844H1051V845H1049V844H1048V845H1045V844H1042V845H1041V844H1038V845H1037V844H1036V845H1035V844H1034V845H1033V844H1032V845H1031V844H1023V845H1022V844H1021V845H1019V844H1015V845H1013V844H1011V845H1010V844H1005V845H1004V844H1003V845H1002V844H996V845H992V844H989V845H988V844H986V845H985V844H982V845H981V844H974V846H973V844H972V845H971V844H969V845H966V844H964V845H963V844H959V845H958V844H949V845H948V844H942V845H940V844H938V845H937V844H935V845H932V844H929V845H928V844H922V845H921V844H915V845H914V844H907V845H906V844H905V845H904V844H903V845H902V844H899V845H898V844H897V845H896V844H890V845H889V844H888V845H887V844H886V845H885V844H882V845H881V844H874V845H873V844H872V845H871V844H870V845H869V844H865V845H864V844H861V845H860V844H858V845H854V844H851V845H850V844H849V845H848V844H846V845H844V844H836V845H834V844H831V845H830V844H828V845H827V844H816V845H815V844H813V845H812V844H811V845H810V844H808V845H806V844H805V845H804V844H799V845H797V844H796V845H794V844H793V847H792V845H791V844H790V845H789V844H784V845H783V844H781V845H780V844H777V845H775V844H769V845H768V844H766V846H765V844H762V845H761V844H756V845H755V844H751V845H750V844H748V845H747V844H745V845H744V844H737V845H736V844H732V845H729V844H726V845H725V844H720V846H719V845H718V844H717V845H716V844H707V845H705V844H704V845H702V844H700V845H699V844H696V845H695V844H688V845H687V844H685V845H684V844H682V845H680V844H675V845H674V844H673V845H672V844H670V845H669V844H666V845H665V844H660V845H659V844H653V845H652V844H651V845H648V844H646V845H645V844H644V846H643V844H638V845H636V844H634V845H633V844H632V845H631V844H623V845H622V844H618V845H617V844H613V845H612V844H610V845H609V844H603V845H601V844H600V845H599V844H596V845H595V844H587V845H585V844H583V845H581V844H576V845H575V844H574V845H571V844H570V845H569V844H567V845H566V844H565V846H564V845H563V844H561V845H559V844H558V845H557V844H553V845H551V844H550V845H549V844H545V845H541V844H540V845H538V844H531V845H529V844H523V845H520V844H509V845H507V844H506V845H505V844H494V845H493V844H492V845H491V844H485V845H484V844H478V845H473V844H472V845H470V844H467V845H466V844H464V845H461V844H455V845H454V844H451V845H449V844H446V845H445V844H444V845H442V844H441V845H440V844H439V845H438V844H435V845H434V844H432V845H431V844H430V845H427V844H425V845H424V844H421V845H420V844H414V845H412V844H411V845H410V844H406V845H405V844H403V845H402V844H397V845H396V844H393V845H391V844H386V845H385V844H382V845H381V844H380V845H378V844H377V845H375V844H374V845H373V844H371V845H370V844H368V845H367V844H363V845H361V844H359V845H356V844H352V845H350V844H347V845H346V844H339V845H338V844H337V845H336V844H334V845H333V844H332V845H331V844H330V845H329V844H328V845H327V844H318V845H317V844H315V845H314V844H312V845H311V846H310V844H307V845H305V844H302V845H301V844H295V845H293V844H292V845H290V844H286V845H285V844H280V845H278V844H267V845H266V844H263V845H262V844H255V846H254V845H253V844H249V845H248V844H238V845H237V844H233V845H227V844H225V845H223V844H221V845H220V844H217V845H216V844H214V846H213V845H212V844H209V845H208V844H207V845H206V844H205V846H204V844H203V845H201V844H198V845H197V844H196V845H192V844H191V845H190V844H187V845H186V844H183V845H181V844H179V845H175V844H169V845H168V844H162V845H161V844H149V845H148V844H146V845H145V844H143V845H142V844H139V845H138V844H137V845H135V844H129V845H128V844H126V845H125V844H119V845H118V844H117V845H116V844H110V846H109V844H107V845H106V844H105V846H104V844H103V845H102V844H98V845H97V844H96V845H95V844H94V845H92V844H88Z"/><path d="M88 871H89V870H91V871H92V870H94V871H95V870H96V871H97V870H99V871H100V870H103V871H105V870H109V871H113V870H114V871H117V870H120V871H121V870H122V871H123V870H125V871H127V870H130V871H132V870H133V871H136V870H140V871H141V870H144V871H146V870H147V869H148V870H151V869H152V871H153V870H155V871H158V870H159V871H160V870H162V871H164V870H166V871H167V870H169V871H172V870H181V871H191V870H193V871H194V870H195V871H196V870H198V871H206V870H208V871H209V870H211V871H212V870H213V871H214V870H216V871H220V870H221V869H222V871H224V870H225V871H226V870H232V871H236V870H238V871H240V870H241V871H242V870H243V871H246V870H248V871H249V870H251V871H252V869H253V871H255V870H256V871H257V870H259V871H261V870H263V871H264V870H266V871H267V870H269V871H271V870H272V871H275V870H276V871H280V870H281V871H282V869H283V870H287V871H288V870H290V871H291V870H292V871H294V870H295V871H296V870H298V871H299V870H300V871H301V870H303V869H304V871H307V870H308V871H312V870H313V871H315V870H319V871H320V870H321V871H323V870H325V871H326V870H327V871H328V870H330V871H331V870H332V871H333V870H334V871H335V870H339V871H340V870H343V871H348V870H350V871H354V870H357V871H358V870H359V871H360V869H361V871H362V870H364V871H366V870H367V871H369V870H370V871H373V870H374V871H375V870H379V871H380V870H382V871H384V870H385V871H391V870H394V869H395V871H396V870H397V869H398V871H403V870H404V871H405V870H407V871H409V870H410V871H417V870H419V871H424V870H427V871H431V870H432V871H435V870H436V871H440V870H441V871H442V870H454V871H456V870H460V871H461V870H463V871H465V870H466V871H467V869H468V871H474V870H477V871H480V870H481V871H482V870H484V871H488V870H489V871H490V870H492V871H493V870H494V871H496V870H497V871H499V870H500V871H501V870H503V871H504V870H505V871H509V870H512V871H515V869H516V871H517V870H522V871H523V870H526V871H527V870H528V871H529V870H532V871H535V870H537V871H539V870H540V871H543V870H544V871H545V870H546V869H547V870H553V871H554V869H555V871H556V870H558V871H560V870H566V871H569V870H570V869H571V871H573V870H574V871H575V870H579V871H580V870H581V871H582V870H586V871H587V870H588V871H590V870H591V871H593V870H594V871H595V870H596V871H597V870H598V869H599V871H600V870H602V871H604V870H605V871H609V870H610V871H611V870H612V871H614V870H616V869H617V871H618V870H619V871H620V870H621V871H627V870H630V871H631V870H634V871H639V870H640V871H642V870H643V871H645V870H646V871H648V870H652V871H658V870H659V871H660V870H661V871H662V870H664V871H665V870H667V871H670V870H671V871H676V870H680V871H682V870H687V871H688V870H691V871H692V870H694V871H695V870H696V871H697V870H698V871H701V870H703V871H706V870H707V871H710V870H712V871H713V870H715V871H716V870H718V871H719V870H724V871H726V870H727V871H729V870H731V871H732V870H735V871H738V870H739V871H740V870H741V871H742V870H743V871H745V870H746V871H747V870H751V871H752V870H754V871H756V870H758V871H759V870H760V871H763V870H764V871H766V870H768V871H769V870H770V871H771V870H773V869H774V870H776V871H778V870H782V871H784V870H785V871H787V870H788V871H790V870H791V871H792V870H793V871H794V870H795V871H797V870H804V871H806V870H809V871H811V870H814V871H815V870H816V871H817V870H818V871H821V870H824V871H826V870H827V871H829V870H832V871H836V870H840V871H844V870H846V869H847V870H848V871H853V870H854V871H855V870H856V871H857V870H859V871H861V870H862V871H863V870H867V871H868V870H869V871H870V870H871V871H874V870H875V871H876V870H879V871H880V870H882V871H883V870H884V871H885V870H887V871H888V870H889V871H890V869H891V870H892V871H895V870H896V871H901V870H902V869H903V871H905V870H910V871H911V870H914V871H915V870H916V871H918V870H919V869H920V870H922V871H923V870H924V871H929V870H931V871H934V870H937V871H938V870H939V869H940V871H941V870H942V871H945V870H946V871H947V870H948V871H949V870H950V871H951V870H954V871H955V870H956V871H957V870H959V871H963V870H966V869H967V871H971V870H972V869H973V871H976V870H978V871H979V870H980V871H984V870H986V871H988V870H991V871H994V870H995V871H997V870H998V871H999V870H1001V871H1002V870H1003V871H1004V870H1005V871H1006V870H1010V871H1012V870H1014V871H1015V870H1016V869H1018V870H1019V871H1025V870H1026V871H1028V870H1030V871H1031V870H1032V871H1033V870H1034V871H1038V870H1039V871H1040V870H1041V871H1042V870H1044V871H1048V870H1050V871H1054V870H1059V871H1060V870H1061V871H1062V870H1063V871H1064V870H1066V871H1067V870H1073V871H1074V870H1075V871H1076V870H1078V871H1083V870H1085V871H1086V874H1085V875H1084V874H1083V875H1082V874H1081V875H1078V874H1077V875H1061V874H1060V875H1059V874H1058V875H1054V874H1053V875H1050V874H1049V875H1047V874H1046V875H1043V874H1042V875H1035V874H1034V875H1031V874H1027V875H1023V874H1021V875H1015V874H1012V875H1011V874H1010V875H1008V874H1005V875H1002V874H1001V875H1000V874H993V875H991V874H989V875H986V874H985V875H984V874H983V875H982V874H981V875H980V874H979V875H977V874H976V875H971V874H970V875H969V876H968V875H966V874H963V875H962V876H961V874H960V875H956V874H954V875H945V874H943V875H941V874H940V875H939V874H938V875H937V874H936V875H923V874H922V875H921V874H920V875H918V874H917V875H916V874H914V875H912V874H911V875H910V874H909V875H907V874H906V875H899V874H898V875H891V874H889V875H887V874H884V875H881V874H879V875H878V874H876V875H873V874H872V875H868V874H867V875H865V876H864V874H860V875H854V874H851V875H849V874H848V875H847V874H846V875H844V874H843V875H839V874H838V875H836V874H835V875H833V876H832V875H829V874H828V875H826V874H825V875H817V874H816V875H814V874H813V875H812V874H811V875H810V874H809V875H808V874H807V875H806V874H805V875H803V874H802V875H796V874H795V875H792V874H790V875H789V874H788V875H785V874H784V875H782V874H781V875H779V874H778V875H776V876H775V874H774V875H773V876H772V875H769V874H768V875H766V874H765V875H759V874H758V875H757V874H756V875H754V874H753V875H748V874H745V875H743V874H742V875H739V874H737V875H736V874H735V875H732V874H731V876H730V875H726V874H725V875H724V874H722V875H719V874H718V875H717V874H716V875H715V874H714V875H710V874H709V875H705V874H703V875H701V874H699V875H697V874H696V875H690V874H689V875H687V874H685V875H683V874H682V875H678V874H676V875H675V874H674V875H671V874H670V875H669V874H667V875H666V874H663V875H658V874H655V875H649V874H648V875H646V874H642V875H637V874H633V875H630V874H629V875H627V874H625V875H620V876H619V874H618V875H616V874H615V875H613V874H612V875H611V874H610V875H609V874H608V875H604V874H602V875H600V874H599V875H598V874H596V875H592V874H589V876H588V875H584V874H583V876H582V875H580V874H578V875H576V874H575V875H574V874H572V875H570V876H569V875H564V874H563V875H562V874H560V875H558V874H557V875H556V874H555V875H554V874H553V875H551V874H550V875H549V874H548V875H545V874H544V875H542V874H541V875H540V874H539V875H534V874H530V875H523V874H522V875H521V874H518V875H517V874H516V875H514V874H511V875H510V874H509V875H505V874H504V875H503V874H499V875H497V874H496V875H495V874H493V875H491V874H489V875H488V874H487V875H485V876H484V875H482V874H480V875H479V874H477V875H476V874H475V875H474V874H469V875H468V874H465V875H459V874H458V875H456V874H454V875H451V874H450V875H438V874H437V875H436V874H434V875H433V874H432V875H431V874H429V875H428V874H427V875H422V874H421V875H418V874H416V875H414V874H413V875H410V874H409V875H405V874H404V876H403V875H402V874H401V875H399V874H398V875H397V874H396V875H393V874H392V875H391V874H389V875H386V874H385V875H384V874H382V875H379V874H378V875H377V874H375V875H374V874H373V875H372V874H371V875H370V874H369V875H365V874H364V875H358V874H357V875H356V876H355V874H352V875H349V874H347V875H344V874H343V875H342V876H341V875H340V874H339V875H333V874H330V875H329V874H328V875H325V874H322V875H321V874H319V875H314V874H312V875H311V874H307V875H304V874H303V875H302V874H301V875H300V874H299V875H298V874H297V875H295V874H293V875H292V874H291V875H279V874H278V875H277V874H276V875H275V874H273V875H272V874H271V875H270V874H269V875H268V874H267V875H265V874H264V875H262V874H260V875H259V874H258V875H253V874H251V875H245V874H244V875H242V874H241V875H234V874H233V875H232V874H231V875H230V874H228V875H224V874H223V875H221V874H220V875H212V876H211V874H209V876H208V875H207V874H206V876H205V874H204V876H203V875H200V874H199V875H197V876H196V875H195V874H194V875H192V874H190V875H188V874H185V875H182V874H181V875H180V874H179V875H177V874H176V875H172V874H171V875H169V874H168V875H167V874H166V875H164V874H163V875H161V874H159V875H158V874H156V875H153V874H152V875H151V874H150V875H149V874H148V875H143V874H142V875H140V874H139V875H138V874H136V875H132V874H131V875H129V874H123V875H121V874H120V875H116V874H115V875H114V874H112V875H108V874H106V875H105V876H104V874H103V876H102V874H101V875H96V874H95V875H94V874H92V875H90V874H89V875H88Z"/></g>
</svg>
<div class="t" style="left:88px;top:66px;font-size:16px;line-height:19px">Département de géologie et de génie géologique<br>Faculté des sciences et de génie<br>Université Laval</div>
<div class="t" style="left:494px;top:83px;font-size:21.33px;line-height:24px;letter-spacing:0.04px">Séismographe QCQ (CGC/GSC)</div>
<div class="t" style="left:1216px;top:136px;font-size:18px;line-height:20px;color:#f00">UTC</div>
<div class="t" style="left:580px;top:945px;font-size:18px;line-height:20px;letter-spacing:0.08px">Minutes écoulées</div>
<svg width="110" height="50" style="position:absolute;left:1105px;top:70px" viewBox="1105 70 110 50">
<path d="M1111.4 74.2H1143.6V107Q1143.6 110.8 1139.8 110.8H1130.3L1127.3 115.2L1124.3 110.8H1115.2Q1111.4 110.8 1111.4 107Z" fill="#e8161e" stroke="#5e1414" stroke-width="0.8"/>
<rect x="1124.3" y="74.6" width="6.2" height="36.3" fill="#fdc90a"/>
<rect x="1111.8" y="89.7" width="31.4" height="6.1" fill="#fdc90a"/>
<path d="M1124.8 110.7H1129.8L1127.3 114.4Z" fill="#fdc90a"/>
<g fill="#2a8ad8" stroke="#1c5c8c" stroke-width="0.35">
<path transform="translate(1127.3 82.4)" d="M-2.3 1.1A2.3 2.8 0 0 1 2.3 1.1Q0 2.2 -2.3 1.1Z"/><path transform="translate(1118.1 93.2)" d="M-2.3 1.1A2.3 2.8 0 0 1 2.3 1.1Q0 2.2 -2.3 1.1Z"/><path transform="translate(1127.3 93.2)" d="M-2.3 1.1A2.3 2.8 0 0 1 2.3 1.1Q0 2.2 -2.3 1.1Z"/><path transform="translate(1136.8 93.2)" d="M-2.3 1.1A2.3 2.8 0 0 1 2.3 1.1Q0 2.2 -2.3 1.1Z"/><path transform="translate(1127.3 103.5)" d="M-2.3 1.1A2.3 2.8 0 0 1 2.3 1.1Q0 2.2 -2.3 1.1Z"/>
</g>
<g fill="#e6eaea" stroke="#9a5050" stroke-width="0.45"><path transform="translate(1115 78.7)" d="M-2.1 -0.6Q-2.2 -2.6 0 -2.7Q2.2 -2.6 2.1 -0.6L1.6 0.9H0.7L0.6 2.3H-0.6L-0.7 0.9H-1.6Z"/><path transform="translate(1115 85.5)" d="M-2.1 -0.6Q-2.2 -2.6 0 -2.7Q2.2 -2.6 2.1 -0.6L1.6 0.9H0.7L0.6 2.3H-0.6L-0.7 0.9H-1.6Z"/><path transform="translate(1115 99.4)" d="M-2.1 -0.6Q-2.2 -2.6 0 -2.7Q2.2 -2.6 2.1 -0.6L1.6 0.9H0.7L0.6 2.3H-0.6L-0.7 0.9H-1.6Z"/><path transform="translate(1115 106.4)" d="M-2.1 -0.6Q-2.2 -2.6 0 -2.7Q2.2 -2.6 2.1 -0.6L1.6 0.9H0.7L0.6 2.3H-0.6L-0.7 0.9H-1.6Z"/><path transform="translate(1121 78.7)" d="M-2.1 -0.6Q-2.2 -2.6 0 -2.7Q2.2 -2.6 2.1 -0.6L1.6 0.9H0.7L0.6 2.3H-0.6L-0.7 0.9H-1.6Z"/><path transform="translate(1121 85.5)" d="M-2.1 -0.6Q-2.2 -2.6 0 -2.7Q2.2 -2.6 2.1 -0.6L1.6 0.9H0.7L0.6 2.3H-0.6L-0.7 0.9H-1.6Z"/><path transform="translate(1121 99.4)" d="M-2.1 -0.6Q-2.2 -2.6 0 -2.7Q2.2 -2.6 2.1 -0.6L1.6 0.9H0.7L0.6 2.3H-0.6L-0.7 0.9H-1.6Z"/><path transform="translate(1121 106.4)" d="M-2.1 -0.6Q-2.2 -2.6 0 -2.7Q2.2 -2.6 2.1 -0.6L1.6 0.9H0.7L0.6 2.3H-0.6L-0.7 0.9H-1.6Z"/><path transform="translate(1133.6 78.7)" d="M-2.1 -0.6Q-2.2 -2.6 0 -2.7Q2.2 -2.6 2.1 -0.6L1.6 0.9H0.7L0.6 2.3H-0.6L-0.7 0.9H-1.6Z"/><path transform="translate(1133.6 85.5)" d="M-2.1 -0.6Q-2.2 -2.6 0 -2.7Q2.2 -2.6 2.1 -0.6L1.6 0.9H0.7L0.6 2.3H-0.6L-0.7 0.9H-1.6Z"/><path transform="translate(1133.6 99.4)" d="M-2.1 -0.6Q-2.2 -2.6 0 -2.7Q2.2 -2.6 2.1 -0.6L1.6 0.9H0.7L0.6 2.3H-0.6L-0.7 0.9H-1.6Z"/><path transform="translate(1133.6 106.4)" d="M-2.1 -0.6Q-2.2 -2.6 0 -2.7Q2.2 -2.6 2.1 -0.6L1.6 0.9H0.7L0.6 2.3H-0.6L-0.7 0.9H-1.6Z"/><path transform="translate(1139.4 78.7)" d="M-2.1 -0.6Q-2.2 -2.6 0 -2.7Q2.2 -2.6 2.1 -0.6L1.6 0.9H0.7L0.6 2.3H-0.6L-0.7 0.9H-1.6Z"/><path transform="translate(1139.4 85.5)" d="M-2.1 -0.6Q-2.2 -2.6 0 -2.7Q2.2 -2.6 2.1 -0.6L1.6 0.9H0.7L0.6 2.3H-0.6L-0.7 0.9H-1.6Z"/><path transform="translate(1139.4 99.4)" d="M-2.1 -0.6Q-2.2 -2.6 0 -2.7Q2.2 -2.6 2.1 -0.6L1.6 0.9H0.7L0.6 2.3H-0.6L-0.7 0.9H-1.6Z"/><path transform="translate(1139.4 106.4)" d="M-2.1 -0.6Q-2.2 -2.6 0 -2.7Q2.2 -2.6 2.1 -0.6L1.6 0.9H0.7L0.6 2.3H-0.6L-0.7 0.9H-1.6Z"/></g>
<text x="1150" y="86.8" font-family="Liberation Sans" font-size="10.9" fill="#2a2627" stroke="#2a2627" stroke-width="0.3" textLength="61.6" lengthAdjust="spacingAndGlyphs">UNIVERSITÉ</text>
<text y="105.8" font-family="Liberation Sans" font-size="22.8" fill="#1a1718" stroke="#1a1718" stroke-width="0.4"><tspan x="1148.7">L</tspan><tspan x="1159">A</tspan><tspan x="1172">V</tspan><tspan x="1185">A</tspan><tspan x="1200.3">L</tspan></text>
</svg>
<div class="xl" style="left:143px;top:126px">02</div><div class="xl" style="left:218px;top:126px">04</div><div class="xl" style="left:293px;top:126px">06</div><div class="xl" style="left:368px;top:126px">08</div><div class="xl" style="left:443px;top:126px">10</div><div class="xl" style="left:518px;top:126px">12</div><div class="xl" style="left:593px;top:126px">14</div><div class="xl" style="left:667px;top:126px">16</div><div class="xl" style="left:742px;top:126px">18</div><div class="xl" style="left:817px;top:126px">20</div><div class="xl" style="left:892px;top:126px">22</div><div class="xl" style="left:967px;top:126px">24</div><div class="xl" style="left:1042px;top:126px">26</div><div class="xl" style="left:1117px;top:126px">28</div><div class="xl" style="left:143px;top:908px">02</div><div class="xl" style="left:218px;top:908px">04</div><div class="xl" style="left:293px;top:908px">06</div><div class="xl" style="left:368px;top:908px">08</div><div class="xl" style="left:443px;top:908px">10</div><div class="xl" style="left:518px;top:908px">12</div><div class="xl" style="left:593px;top:908px">14</div><div class="xl" style="left:667px;top:908px">16</div><div class="xl" style="left:742px;top:908px">18</div><div class="xl" style="left:817px;top:908px">20</div><div class="xl" style="left:892px;top:908px">22</div><div class="xl" style="left:967px;top:908px">24</div><div class="xl" style="left:1042px;top:908px">26</div><div class="xl" style="left:1117px;top:908px">28</div><div class="yl" style="top:168px">12:30</div><div class="yl" style="top:199px">13:00</div><div class="yl" style="top:229px">13:30</div><div class="yl" style="top:259px">14:00</div><div class="yl" style="top:290px">14:30</div><div class="yl" style="top:320px">15:00</div><div class="yl" style="top:350px">15:30</div><div class="yl" style="top:381px">16:00</div><div class="yl" style="top:411px">16:30</div><div class="yl" style="top:441px">17:00</div><div class="yl" style="top:472px">17:30</div><div class="yl" style="top:502px">18:00</div><div class="yl" style="top:532px">18:30</div><div class="yl" style="top:562px">19:00</div><div class="yl" style="top:593px">19:30</div><div class="yl" style="top:623px">20:00</div><div class="yl" style="top:653px">20:30</div><div class="yl" style="top:684px">21:00</div><div class="yl" style="top:714px">21:30</div><div class="yl" style="top:744px">22:00</div><div class="yl" style="top:775px">22:30</div><div class="yl" style="top:805px">23:00</div><div class="yl" style="top:835px">23:30</div><div class="yl" style="top:866px">24:00</div>
</body></html>
